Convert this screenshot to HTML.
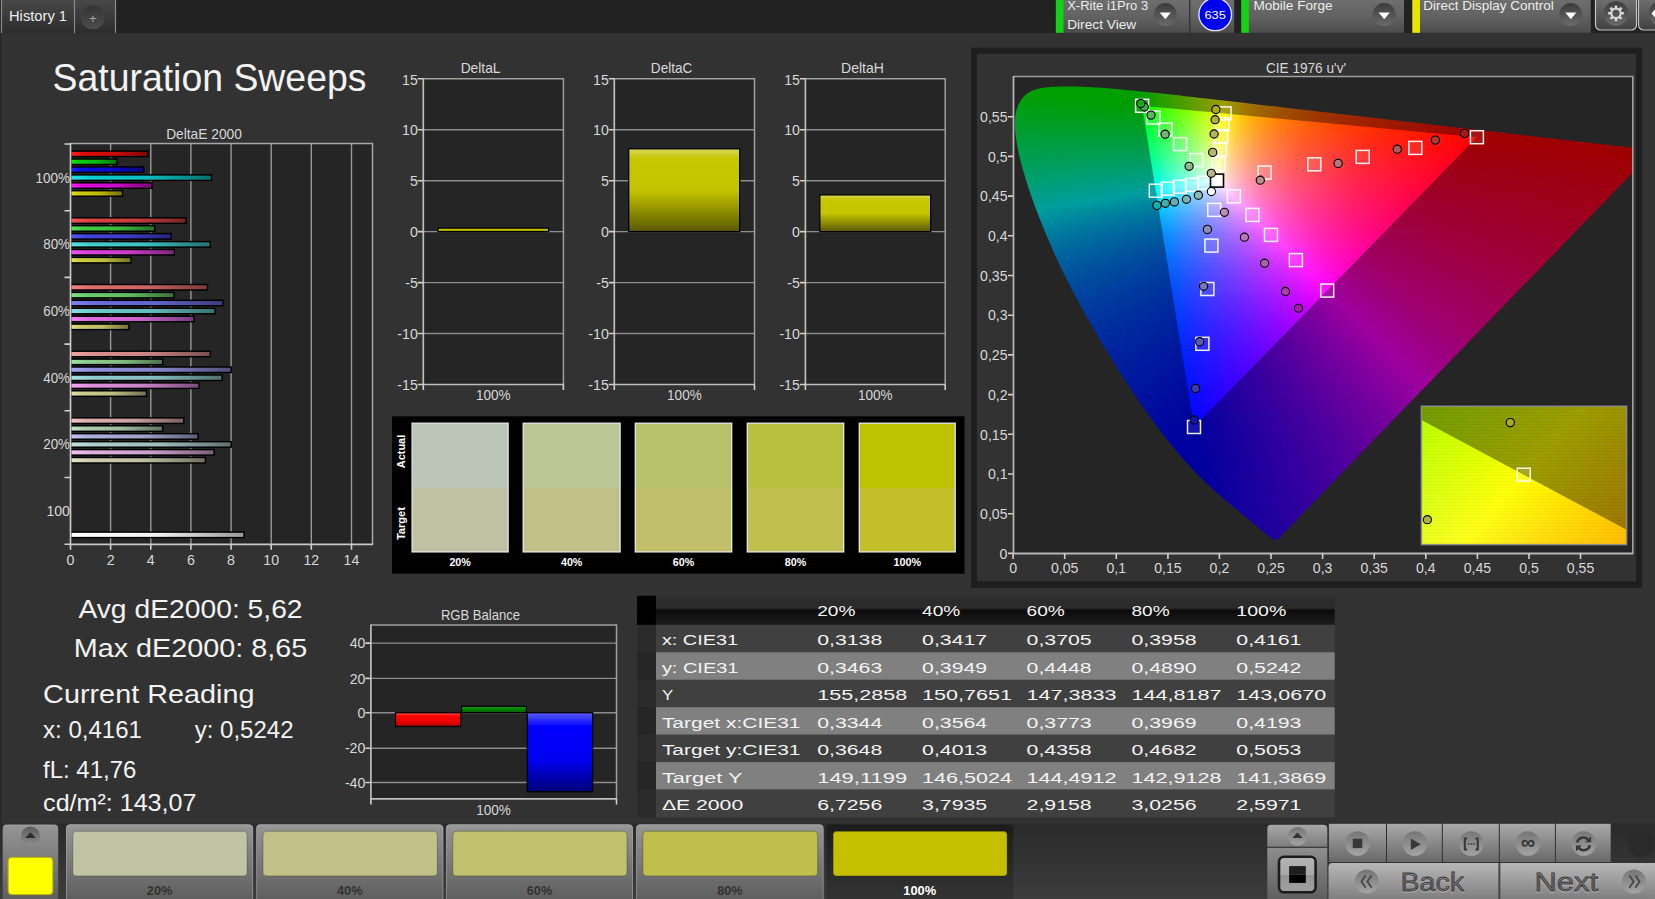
<!DOCTYPE html><html><head><meta charset="utf-8"><title>Saturation Sweeps</title><style>html,body{margin:0;padding:0;background:#323232;overflow:hidden}</style></head><body><svg width="1655" height="899" viewBox="0 0 1655 899" font-family="'Liberation Sans', sans-serif" style="display:block"><defs><linearGradient id="o0"><stop offset="0" stop-color="#009e00"/><stop offset="1" stop-color="#009e00"/></linearGradient><linearGradient id="o1"><stop offset="0" stop-color="#009e00"/><stop offset="1" stop-color="#009e00"/></linearGradient><linearGradient id="o2"><stop offset="0" stop-color="#009e00"/><stop offset=".925" stop-color="#009e00"/><stop offset="1" stop-color="#109e00"/></linearGradient><linearGradient id="o3"><stop offset="0" stop-color="#009e00"/><stop offset=".810" stop-color="#009e00"/><stop offset="1" stop-color="#309e00"/></linearGradient><linearGradient id="o4"><stop offset="0" stop-color="#009e01"/><stop offset=".722" stop-color="#009e00"/><stop offset="1" stop-color="#509e00"/></linearGradient><linearGradient id="o5"><stop offset="0" stop-color="#009e04"/><stop offset=".654" stop-color="#009e00"/><stop offset="1" stop-color="#719e00"/></linearGradient><linearGradient id="o6"><stop offset="0" stop-color="#009e07"/><stop offset=".254" stop-color="#009e00"/><stop offset=".607" stop-color="#009e00"/><stop offset="1" stop-color="#949e00"/></linearGradient><linearGradient id="o7"><stop offset="0" stop-color="#009e0a"/><stop offset=".559" stop-color="#009e00"/><stop offset=".795" stop-color="#5e9e00"/><stop offset=".936" stop-color="#9d9e00"/><stop offset="1" stop-color="#9e8400"/></linearGradient><linearGradient id="o8"><stop offset="0" stop-color="#009e0d"/><stop offset=".521" stop-color="#009e00"/><stop offset=".735" stop-color="#5c9e00"/><stop offset=".870" stop-color="#9e9e00"/><stop offset="1" stop-color="#9e6c00"/></linearGradient><linearGradient id="o9"><stop offset="0" stop-color="#009e0f"/><stop offset=".490" stop-color="#009e00"/><stop offset=".693" stop-color="#609e00"/><stop offset=".809" stop-color="#9e9e00"/><stop offset=".895" stop-color="#9e7700"/><stop offset="1" stop-color="#9e5800"/></linearGradient><linearGradient id="o10"><stop offset="0" stop-color="#009e12"/><stop offset=".460" stop-color="#009e03"/><stop offset=".646" stop-color="#5e9e00"/><stop offset=".759" stop-color="#9e9e00"/><stop offset=".861" stop-color="#9e6e00"/><stop offset="1" stop-color="#9e4900"/></linearGradient><linearGradient id="o11"><stop offset="0" stop-color="#009e14"/><stop offset=".435" stop-color="#009e07"/><stop offset=".606" stop-color="#5c9e00"/><stop offset=".712" stop-color="#9d9e00"/><stop offset=".774" stop-color="#9e7e00"/><stop offset=".836" stop-color="#9e6500"/><stop offset="1" stop-color="#9e3d00"/></linearGradient><linearGradient id="o12"><stop offset="0" stop-color="#009e17"/><stop offset=".413" stop-color="#009e0a"/><stop offset=".671" stop-color="#9d9e00"/><stop offset=".735" stop-color="#9e7a00"/><stop offset=".806" stop-color="#9e5e00"/><stop offset="1" stop-color="#9e3300"/></linearGradient><linearGradient id="o13"><stop offset="0" stop-color="#009e19"/><stop offset=".393" stop-color="#009e0e"/><stop offset=".546" stop-color="#5e9e06"/><stop offset=".637" stop-color="#9d9e00"/><stop offset=".701" stop-color="#9e7800"/><stop offset=".780" stop-color="#9e5900"/><stop offset=".878" stop-color="#9e4000"/><stop offset="1" stop-color="#9e2b00"/></linearGradient><linearGradient id="o14"><stop offset="0" stop-color="#009e1b"/><stop offset=".374" stop-color="#009e11"/><stop offset=".516" stop-color="#5c9e0a"/><stop offset=".606" stop-color="#9e9e05"/><stop offset=".672" stop-color="#9e7500"/><stop offset=".757" stop-color="#9e5400"/><stop offset=".864" stop-color="#9e3900"/><stop offset="1" stop-color="#9e2300"/></linearGradient><linearGradient id="o15"><stop offset="0" stop-color="#009e1e"/><stop offset=".358" stop-color="#009e14"/><stop offset=".576" stop-color="#9e9e09"/><stop offset=".645" stop-color="#9e7103"/><stop offset=".733" stop-color="#9e4f00"/><stop offset=".848" stop-color="#9e3300"/><stop offset="1" stop-color="#9e1d00"/></linearGradient><linearGradient id="o16"><stop offset="0" stop-color="#009e20"/><stop offset=".342" stop-color="#009e18"/><stop offset=".471" stop-color="#5e9e12"/><stop offset=".547" stop-color="#9c9e0e"/><stop offset=".621" stop-color="#9e6e06"/><stop offset=".713" stop-color="#9e4a00"/><stop offset=".837" stop-color="#9e2e00"/><stop offset="1" stop-color="#9e1700"/></linearGradient><linearGradient id="o17"><stop offset="0" stop-color="#009e23"/><stop offset=".327" stop-color="#009e1b"/><stop offset=".526" stop-color="#9e9d12"/><stop offset=".599" stop-color="#9e6b09"/><stop offset=".695" stop-color="#9e4602"/><stop offset=".826" stop-color="#9e2900"/><stop offset="1" stop-color="#9e1200"/></linearGradient><linearGradient id="o18"><stop offset="0" stop-color="#009e25"/><stop offset=".316" stop-color="#009e1e"/><stop offset=".505" stop-color="#9e9d17"/><stop offset=".577" stop-color="#9e690d"/><stop offset=".679" stop-color="#9e4204"/><stop offset=".814" stop-color="#9e2500"/><stop offset="1" stop-color="#9e0e00"/></linearGradient><linearGradient id="o19"><stop offset="0" stop-color="#009e27"/><stop offset=".303" stop-color="#009e22"/><stop offset=".484" stop-color="#9e9c1b"/><stop offset=".519" stop-color="#9e7f15"/><stop offset=".558" stop-color="#9e660f"/><stop offset=".660" stop-color="#9e3f06"/><stop offset=".801" stop-color="#9e2100"/><stop offset="1" stop-color="#9e0900"/></linearGradient><linearGradient id="o20"><stop offset="0" stop-color="#009e2a"/><stop offset=".292" stop-color="#009e25"/><stop offset=".399" stop-color="#5e9e22"/><stop offset=".463" stop-color="#9e9e20"/><stop offset=".497" stop-color="#9e8019"/><stop offset=".537" stop-color="#9e6612"/><stop offset=".641" stop-color="#9e3d08"/><stop offset=".788" stop-color="#9e1e00"/><stop offset="1" stop-color="#9e0500"/></linearGradient><linearGradient id="o21"><stop offset="0" stop-color="#009e2c"/><stop offset=".283" stop-color="#009e28"/><stop offset=".445" stop-color="#9e9e24"/><stop offset=".480" stop-color="#9e7e1c"/><stop offset=".520" stop-color="#9e6315"/><stop offset=".625" stop-color="#9e3a0a"/><stop offset=".775" stop-color="#9e1b01"/><stop offset="1" stop-color="#9e0100"/></linearGradient><linearGradient id="o22"><stop offset="0" stop-color="#009e2f"/><stop offset=".273" stop-color="#009e2c"/><stop offset=".430" stop-color="#9e9d28"/><stop offset=".465" stop-color="#9e7c1f"/><stop offset=".506" stop-color="#9e6017"/><stop offset=".616" stop-color="#9e360b"/><stop offset=".781" stop-color="#9e1502"/><stop offset="1" stop-color="#9e0000"/></linearGradient><linearGradient id="o23"><stop offset="0" stop-color="#009e31"/><stop offset=".263" stop-color="#009e2f"/><stop offset=".415" stop-color="#9e9d2d"/><stop offset=".451" stop-color="#9e7922"/><stop offset=".493" stop-color="#9e5d1a"/><stop offset=".607" stop-color="#9e320c"/><stop offset=".798" stop-color="#9e0f02"/><stop offset=".932" stop-color="#9e0000"/><stop offset="1" stop-color="#9e0000"/></linearGradient><linearGradient id="o24"><stop offset="0" stop-color="#009e34"/><stop offset=".256" stop-color="#019e32"/><stop offset=".401" stop-color="#9e9c31"/><stop offset=".435" stop-color="#9e7925"/><stop offset=".478" stop-color="#9e5c1c"/><stop offset=".530" stop-color="#9e4414"/><stop offset=".595" stop-color="#9e2f0e"/><stop offset=".694" stop-color="#9e1a07"/><stop offset=".823" stop-color="#9e0801"/><stop offset=".896" stop-color="#9e0000"/><stop offset="1" stop-color="#9e0000"/></linearGradient><linearGradient id="o25"><stop offset="0" stop-color="#009e36"/><stop offset=".248" stop-color="#009e36"/><stop offset=".336" stop-color="#609e36"/><stop offset=".386" stop-color="#9e9e36"/><stop offset=".422" stop-color="#9e7829"/><stop offset=".465" stop-color="#9e5a1f"/><stop offset=".519" stop-color="#9e4116"/><stop offset=".586" stop-color="#9e2c0f"/><stop offset=".698" stop-color="#9e1507"/><stop offset=".864" stop-color="#9e0000"/><stop offset="1" stop-color="#9e0000"/></linearGradient><linearGradient id="o26"><stop offset="0" stop-color="#009e38"/><stop offset=".239" stop-color="#009e39"/><stop offset=".321" stop-color="#5c9e3a"/><stop offset=".373" stop-color="#9e9e3a"/><stop offset=".409" stop-color="#9e762c"/><stop offset=".453" stop-color="#9e5821"/><stop offset=".507" stop-color="#9e3e18"/><stop offset=".576" stop-color="#9e2910"/><stop offset=".681" stop-color="#9e1408"/><stop offset=".833" stop-color="#9e0002"/><stop offset="1" stop-color="#9e0000"/></linearGradient><linearGradient id="o27"><stop offset="0" stop-color="#009e3b"/><stop offset=".233" stop-color="#019e3d"/><stop offset=".361" stop-color="#9e9d3e"/><stop offset=".396" stop-color="#9e762f"/><stop offset=".442" stop-color="#9e5523"/><stop offset=".498" stop-color="#9e3b19"/><stop offset=".568" stop-color="#9e2611"/><stop offset=".804" stop-color="#9e0003"/><stop offset="1" stop-color="#9e0000"/></linearGradient><linearGradient id="o28"><stop offset="0" stop-color="#009e3d"/><stop offset=".227" stop-color="#009e40"/><stop offset=".351" stop-color="#9e9d43"/><stop offset=".387" stop-color="#9e7432"/><stop offset=".431" stop-color="#9e5425"/><stop offset=".489" stop-color="#9e391a"/><stop offset=".560" stop-color="#9e2312"/><stop offset=".777" stop-color="#9e0004"/><stop offset="1" stop-color="#9e0000"/></linearGradient><linearGradient id="o29"><stop offset="0" stop-color="#009e40"/><stop offset=".220" stop-color="#009e44"/><stop offset=".341" stop-color="#9e9c47"/><stop offset=".376" stop-color="#9e7335"/><stop offset=".422" stop-color="#9e5127"/><stop offset=".480" stop-color="#9e361c"/><stop offset=".553" stop-color="#9e2113"/><stop offset=".752" stop-color="#9e0006"/><stop offset="1" stop-color="#9e0000"/></linearGradient><linearGradient id="o30"><stop offset="0" stop-color="#009e42"/><stop offset=".214" stop-color="#009e47"/><stop offset=".333" stop-color="#9e9c4b"/><stop offset=".368" stop-color="#9e7138"/><stop offset=".414" stop-color="#9e5029"/><stop offset=".472" stop-color="#9e351d"/><stop offset=".547" stop-color="#9e1f14"/><stop offset=".733" stop-color="#9e0007"/><stop offset="1" stop-color="#9e0000"/></linearGradient><linearGradient id="o31"><stop offset="0" stop-color="#009e45"/><stop offset=".216" stop-color="#009e4b"/><stop offset=".331" stop-color="#9e9e50"/><stop offset=".365" stop-color="#9e743d"/><stop offset=".411" stop-color="#9e512d"/><stop offset=".469" stop-color="#9e3520"/><stop offset=".544" stop-color="#9e1f16"/><stop offset=".730" stop-color="#9e0008"/><stop offset="1" stop-color="#9e0000"/></linearGradient><linearGradient id="o32"><stop offset="0" stop-color="#009e47"/><stop offset=".215" stop-color="#009e4e"/><stop offset=".330" stop-color="#9e9d55"/><stop offset=".364" stop-color="#9e7340"/><stop offset=".410" stop-color="#9e502f"/><stop offset=".468" stop-color="#9e3522"/><stop offset=".543" stop-color="#9e1f17"/><stop offset=".726" stop-color="#9e000a"/><stop offset="1" stop-color="#9e0000"/></linearGradient><linearGradient id="o33"><stop offset="0" stop-color="#009e4a"/><stop offset=".215" stop-color="#009e52"/><stop offset=".283" stop-color="#599e56"/><stop offset=".330" stop-color="#9e9d59"/><stop offset=".364" stop-color="#9e7343"/><stop offset=".410" stop-color="#9e5032"/><stop offset=".468" stop-color="#9e3424"/><stop offset=".543" stop-color="#9e1f19"/><stop offset=".723" stop-color="#9e000b"/><stop offset="1" stop-color="#9e0001"/></linearGradient><linearGradient id="o34"><stop offset="0" stop-color="#009e4c"/><stop offset=".216" stop-color="#009e56"/><stop offset=".330" stop-color="#9e9c5e"/><stop offset=".364" stop-color="#9e7247"/><stop offset=".410" stop-color="#9e4f34"/><stop offset=".468" stop-color="#9e3426"/><stop offset=".543" stop-color="#9e1e1b"/><stop offset=".720" stop-color="#9e000c"/><stop offset="1" stop-color="#9e0002"/></linearGradient><linearGradient id="o35"><stop offset="0" stop-color="#009e4f"/><stop offset=".215" stop-color="#009e59"/><stop offset=".329" stop-color="#9e9c62"/><stop offset=".363" stop-color="#9e714a"/><stop offset=".409" stop-color="#9e4f37"/><stop offset=".467" stop-color="#9e3428"/><stop offset=".544" stop-color="#9e1d1c"/><stop offset=".716" stop-color="#9e000e"/><stop offset="1" stop-color="#9e0003"/></linearGradient><linearGradient id="o36"><stop offset="0" stop-color="#009e52"/><stop offset=".215" stop-color="#009e5d"/><stop offset=".283" stop-color="#5c9e63"/><stop offset=".327" stop-color="#9e9e68"/><stop offset=".361" stop-color="#9e734f"/><stop offset=".407" stop-color="#9e4f3a"/><stop offset=".466" stop-color="#9e342b"/><stop offset=".540" stop-color="#9e1e1e"/><stop offset=".713" stop-color="#9e000f"/><stop offset="1" stop-color="#9e0003"/></linearGradient><linearGradient id="o37"><stop offset="0" stop-color="#009e54"/><stop offset=".215" stop-color="#009e61"/><stop offset=".326" stop-color="#9e9e6c"/><stop offset=".360" stop-color="#9e7252"/><stop offset=".406" stop-color="#9e4f3d"/><stop offset=".465" stop-color="#9e332d"/><stop offset=".540" stop-color="#9e1d20"/><stop offset=".709" stop-color="#9e0010"/><stop offset="1" stop-color="#9e0004"/></linearGradient><linearGradient id="o38"><stop offset="0" stop-color="#009e57"/><stop offset=".215" stop-color="#009e65"/><stop offset=".326" stop-color="#9e9d71"/><stop offset=".360" stop-color="#9e7156"/><stop offset=".406" stop-color="#9e4e40"/><stop offset=".465" stop-color="#9e332f"/><stop offset=".540" stop-color="#9e1d22"/><stop offset=".706" stop-color="#9e0012"/><stop offset="1" stop-color="#9e0005"/></linearGradient><linearGradient id="o39"><stop offset="0" stop-color="#009e59"/><stop offset=".214" stop-color="#009e68"/><stop offset=".325" stop-color="#9e9d75"/><stop offset=".359" stop-color="#9e7159"/><stop offset=".405" stop-color="#9e4e42"/><stop offset=".464" stop-color="#9e3231"/><stop offset=".539" stop-color="#9e1c23"/><stop offset=".702" stop-color="#9e0013"/><stop offset="1" stop-color="#9e0006"/></linearGradient><linearGradient id="o40"><stop offset="0" stop-color="#009e5c"/><stop offset=".216" stop-color="#009e6c"/><stop offset=".325" stop-color="#9e9c7a"/><stop offset=".359" stop-color="#9e705c"/><stop offset=".405" stop-color="#9e4d45"/><stop offset=".464" stop-color="#9e3233"/><stop offset=".539" stop-color="#9e1c25"/><stop offset=".699" stop-color="#9e0015"/><stop offset="1" stop-color="#9e0007"/></linearGradient><linearGradient id="o41"><stop offset="0" stop-color="#009e5f"/><stop offset=".214" stop-color="#009e70"/><stop offset=".281" stop-color="#5e9e79"/><stop offset=".322" stop-color="#9e9e80"/><stop offset=".357" stop-color="#9e7161"/><stop offset=".402" stop-color="#9e4e48"/><stop offset=".461" stop-color="#9e3235"/><stop offset=".537" stop-color="#9e1c27"/><stop offset=".695" stop-color="#9e0016"/><stop offset="1" stop-color="#9e0008"/></linearGradient><linearGradient id="o42"><stop offset="0" stop-color="#009e62"/><stop offset=".213" stop-color="#009e74"/><stop offset=".279" stop-color="#5b9e7e"/><stop offset=".321" stop-color="#9e9e85"/><stop offset=".356" stop-color="#9e7165"/><stop offset=".401" stop-color="#9e4d4b"/><stop offset=".460" stop-color="#9e3137"/><stop offset=".536" stop-color="#9e1b28"/><stop offset=".691" stop-color="#9e0017"/><stop offset="1" stop-color="#9e0008"/></linearGradient><linearGradient id="o43"><stop offset="0" stop-color="#009e64"/><stop offset=".215" stop-color="#009e78"/><stop offset=".321" stop-color="#9e9d8a"/><stop offset=".356" stop-color="#9e7068"/><stop offset=".401" stop-color="#9e4c4e"/><stop offset=".460" stop-color="#9e3139"/><stop offset=".536" stop-color="#9e1b2a"/><stop offset=".688" stop-color="#9e0019"/><stop offset="1" stop-color="#9e0009"/></linearGradient><linearGradient id="o44"><stop offset="0" stop-color="#009e67"/><stop offset=".213" stop-color="#009e7c"/><stop offset=".320" stop-color="#9e9d8e"/><stop offset=".355" stop-color="#9e706c"/><stop offset=".399" stop-color="#9e4d51"/><stop offset=".458" stop-color="#9e313c"/><stop offset=".535" stop-color="#9e1a2c"/><stop offset=".684" stop-color="#9e001a"/><stop offset="1" stop-color="#9e000a"/></linearGradient><linearGradient id="o45"><stop offset="0" stop-color="#009e6a"/><stop offset=".214" stop-color="#009e80"/><stop offset=".321" stop-color="#9e9c93"/><stop offset=".355" stop-color="#9e6f6f"/><stop offset=".400" stop-color="#9e4c54"/><stop offset=".459" stop-color="#9e303e"/><stop offset=".536" stop-color="#9e1a2d"/><stop offset=".683" stop-color="#9e001c"/><stop offset="1" stop-color="#9e000b"/></linearGradient><linearGradient id="o46"><stop offset="0" stop-color="#009e6d"/><stop offset=".215" stop-color="#009e85"/><stop offset=".321" stop-color="#9e9c98"/><stop offset=".355" stop-color="#9e6e73"/><stop offset=".400" stop-color="#9e4c57"/><stop offset=".460" stop-color="#9e3040"/><stop offset=".536" stop-color="#9e1a2f"/><stop offset=".681" stop-color="#9e001d"/><stop offset="1" stop-color="#9e000c"/></linearGradient><linearGradient id="o47"><stop offset="0" stop-color="#009e70"/><stop offset=".214" stop-color="#009e89"/><stop offset=".321" stop-color="#9e9b9d"/><stop offset=".355" stop-color="#9e6e76"/><stop offset=".400" stop-color="#9e4b59"/><stop offset=".460" stop-color="#9e2f42"/><stop offset=".537" stop-color="#9e1931"/><stop offset=".679" stop-color="#9e001f"/><stop offset="1" stop-color="#9e000c"/></linearGradient><linearGradient id="o48"><stop offset="0" stop-color="#009e72"/><stop offset=".215" stop-color="#009e8d"/><stop offset=".295" stop-color="#759e9e"/><stop offset=".325" stop-color="#9e959d"/><stop offset=".360" stop-color="#9e6a77"/><stop offset=".407" stop-color="#9e485a"/><stop offset=".467" stop-color="#9e2d43"/><stop offset=".543" stop-color="#9e1831"/><stop offset=".680" stop-color="#9e0020"/><stop offset="1" stop-color="#9e000d"/></linearGradient><linearGradient id="o49"><stop offset="0" stop-color="#009e75"/><stop offset=".216" stop-color="#009e91"/><stop offset=".275" stop-color="#569e9e"/><stop offset=".328" stop-color="#9e8f9d"/><stop offset=".363" stop-color="#9e6678"/><stop offset=".410" stop-color="#9e455b"/><stop offset=".471" stop-color="#9e2b44"/><stop offset=".549" stop-color="#9e1632"/><stop offset=".678" stop-color="#9e0021"/><stop offset="1" stop-color="#9e000e"/></linearGradient><linearGradient id="o50"><stop offset="0" stop-color="#009e78"/><stop offset=".217" stop-color="#009e96"/><stop offset=".255" stop-color="#389e9e"/><stop offset=".333" stop-color="#9e8a9d"/><stop offset=".370" stop-color="#9e6177"/><stop offset=".417" stop-color="#9e425b"/><stop offset=".479" stop-color="#9e2844"/><stop offset=".558" stop-color="#9e1433"/><stop offset=".677" stop-color="#9e0023"/><stop offset="1" stop-color="#9e000f"/></linearGradient><linearGradient id="o51"><stop offset="0" stop-color="#009e7b"/><stop offset=".216" stop-color="#009e9a"/><stop offset=".236" stop-color="#1e9e9e"/><stop offset=".336" stop-color="#9e859d"/><stop offset=".373" stop-color="#9e5e78"/><stop offset=".421" stop-color="#9e405c"/><stop offset=".483" stop-color="#9e2745"/><stop offset=".564" stop-color="#9e1333"/><stop offset=".676" stop-color="#9e0024"/><stop offset="1" stop-color="#9e0010"/></linearGradient><linearGradient id="o52"><stop offset="0" stop-color="#009e7e"/><stop offset=".217" stop-color="#019d9e"/><stop offset=".340" stop-color="#9e7f9d"/><stop offset=".377" stop-color="#9e5a79"/><stop offset=".426" stop-color="#9e3c5c"/><stop offset=".491" stop-color="#9e2445"/><stop offset=".572" stop-color="#9e1134"/><stop offset=".674" stop-color="#9e0026"/><stop offset="1" stop-color="#9e0011"/></linearGradient><linearGradient id="o53"><stop offset="0" stop-color="#009e81"/><stop offset=".194" stop-color="#009e9e"/><stop offset=".218" stop-color="#00999e"/><stop offset=".344" stop-color="#9e7b9d"/><stop offset=".383" stop-color="#9e5678"/><stop offset=".433" stop-color="#9e3a5c"/><stop offset=".497" stop-color="#9e2246"/><stop offset=".579" stop-color="#9e1034"/><stop offset=".673" stop-color="#9e0027"/><stop offset="1" stop-color="#9e0012"/></linearGradient><linearGradient id="o54"><stop offset="0" stop-color="#009e84"/><stop offset=".173" stop-color="#009e9e"/><stop offset=".217" stop-color="#00959e"/><stop offset=".347" stop-color="#9e769d"/><stop offset=".386" stop-color="#9e5379"/><stop offset=".438" stop-color="#9e375c"/><stop offset=".504" stop-color="#9e2046"/><stop offset=".588" stop-color="#9e0d34"/><stop offset=".670" stop-color="#9e0029"/><stop offset="1" stop-color="#9e0013"/></linearGradient><linearGradient id="o55"><stop offset="0" stop-color="#009e88"/><stop offset=".151" stop-color="#009e9e"/><stop offset=".218" stop-color="#01919e"/><stop offset=".351" stop-color="#9e729d"/><stop offset=".392" stop-color="#9e4f78"/><stop offset=".443" stop-color="#9e345c"/><stop offset=".510" stop-color="#9e1e46"/><stop offset=".596" stop-color="#9e0c35"/><stop offset=".668" stop-color="#9e002b"/><stop offset="1" stop-color="#9e0013"/></linearGradient><linearGradient id="o56"><stop offset="0" stop-color="#009e8b"/><stop offset=".130" stop-color="#009e9e"/><stop offset=".218" stop-color="#008d9e"/><stop offset=".354" stop-color="#9e6d9d"/><stop offset=".396" stop-color="#9e4c79"/><stop offset=".449" stop-color="#9e315d"/><stop offset=".518" stop-color="#9e1c46"/><stop offset=".606" stop-color="#9e0a35"/><stop offset=".667" stop-color="#9e002c"/><stop offset="1" stop-color="#9e0014"/></linearGradient><linearGradient id="o57"><stop offset="0" stop-color="#009e8e"/><stop offset=".109" stop-color="#009e9e"/><stop offset=".218" stop-color="#00899e"/><stop offset=".359" stop-color="#9e699d"/><stop offset=".400" stop-color="#9e497a"/><stop offset=".456" stop-color="#9e2f5d"/><stop offset=".527" stop-color="#9e1946"/><stop offset=".619" stop-color="#9e0834"/><stop offset=".666" stop-color="#9e002e"/><stop offset="1" stop-color="#9e0015"/></linearGradient><linearGradient id="o58"><stop offset="0" stop-color="#009e91"/><stop offset=".087" stop-color="#009e9e"/><stop offset=".220" stop-color="#01869e"/><stop offset=".362" stop-color="#9e659d"/><stop offset=".409" stop-color="#9e4377"/><stop offset=".472" stop-color="#9e2959"/><stop offset=".554" stop-color="#9e1342"/><stop offset=".662" stop-color="#9e0030"/><stop offset="1" stop-color="#9e0016"/></linearGradient><linearGradient id="o59"><stop offset="0" stop-color="#009e94"/><stop offset=".065" stop-color="#009e9e"/><stop offset=".219" stop-color="#00829e"/><stop offset=".366" stop-color="#9e619d"/><stop offset=".413" stop-color="#9e4177"/><stop offset=".476" stop-color="#9e275a"/><stop offset=".557" stop-color="#9e1243"/><stop offset=".662" stop-color="#9e0031"/><stop offset="1" stop-color="#9e0017"/></linearGradient><linearGradient id="o60"><stop offset="0" stop-color="#009e97"/><stop offset=".046" stop-color="#009e9e"/><stop offset=".220" stop-color="#007f9e"/><stop offset=".371" stop-color="#9e5e9d"/><stop offset=".418" stop-color="#9e3e78"/><stop offset=".480" stop-color="#9e265b"/><stop offset=".559" stop-color="#9e1245"/><stop offset=".661" stop-color="#9e0033"/><stop offset="1" stop-color="#9e0018"/></linearGradient><linearGradient id="o61"><stop offset="0" stop-color="#009e9b"/><stop offset=".219" stop-color="#007c9e"/><stop offset=".375" stop-color="#9e5a9d"/><stop offset=".422" stop-color="#9e3c79"/><stop offset=".482" stop-color="#9e255d"/><stop offset=".560" stop-color="#9e1146"/><stop offset=".659" stop-color="#9e0035"/><stop offset="1" stop-color="#9e0019"/></linearGradient><linearGradient id="o62"><stop offset="0" stop-color="#009e9e"/><stop offset=".220" stop-color="#00799e"/><stop offset=".378" stop-color="#9e579d"/><stop offset=".425" stop-color="#9e3b7a"/><stop offset=".485" stop-color="#9e245e"/><stop offset=".561" stop-color="#9e1148"/><stop offset=".657" stop-color="#9e0037"/><stop offset="1" stop-color="#9e001a"/></linearGradient><linearGradient id="o63"><stop offset="0" stop-color="#009a9e"/><stop offset=".220" stop-color="#00769e"/><stop offset=".382" stop-color="#9e539d"/><stop offset=".429" stop-color="#9e387b"/><stop offset=".487" stop-color="#9e225f"/><stop offset=".562" stop-color="#9e1049"/><stop offset=".655" stop-color="#9e0038"/><stop offset="1" stop-color="#9e001b"/></linearGradient><linearGradient id="o64"><stop offset="0" stop-color="#00979e"/><stop offset=".220" stop-color="#00739e"/><stop offset=".387" stop-color="#9e509d"/><stop offset=".434" stop-color="#9e367b"/><stop offset=".491" stop-color="#9e2161"/><stop offset=".563" stop-color="#9e104c"/><stop offset=".654" stop-color="#9e003a"/><stop offset=".803" stop-color="#9e0029"/><stop offset="1" stop-color="#9e001c"/></linearGradient><linearGradient id="o65"><stop offset="0" stop-color="#00949e"/><stop offset=".222" stop-color="#00709e"/><stop offset=".391" stop-color="#9e4d9d"/><stop offset=".427" stop-color="#9e3982"/><stop offset=".472" stop-color="#9e276b"/><stop offset=".589" stop-color="#9e0b47"/><stop offset=".652" stop-color="#9e003c"/><stop offset=".802" stop-color="#9e002a"/><stop offset="1" stop-color="#9e001d"/></linearGradient><linearGradient id="o66"><stop offset="0" stop-color="#00919e"/><stop offset=".221" stop-color="#006d9e"/><stop offset=".395" stop-color="#9e4a9d"/><stop offset=".431" stop-color="#9e3683"/><stop offset=".476" stop-color="#9e256b"/><stop offset=".592" stop-color="#9e0a49"/><stop offset=".650" stop-color="#9e003e"/><stop offset=".801" stop-color="#9e002c"/><stop offset="1" stop-color="#9e001e"/></linearGradient><linearGradient id="o67"><stop offset="0" stop-color="#008e9e"/><stop offset=".220" stop-color="#006b9e"/><stop offset=".399" stop-color="#9e479d"/><stop offset=".435" stop-color="#9e3483"/><stop offset=".481" stop-color="#9e236c"/><stop offset=".597" stop-color="#9e0949"/><stop offset=".650" stop-color="#9e0040"/><stop offset=".800" stop-color="#9e002d"/><stop offset="1" stop-color="#9e001f"/></linearGradient><linearGradient id="o68"><stop offset="0" stop-color="#008b9e"/><stop offset=".222" stop-color="#00689e"/><stop offset=".403" stop-color="#9e449d"/><stop offset=".440" stop-color="#9e3283"/><stop offset=".485" stop-color="#9e226d"/><stop offset=".601" stop-color="#9e084a"/><stop offset=".647" stop-color="#9e0042"/><stop offset=".766" stop-color="#9e0032"/><stop offset="1" stop-color="#9e0020"/></linearGradient><linearGradient id="o69"><stop offset="0" stop-color="#00899e"/><stop offset=".222" stop-color="#00669e"/><stop offset=".408" stop-color="#9e419d"/><stop offset=".447" stop-color="#9e2f83"/><stop offset=".491" stop-color="#9e206d"/><stop offset=".607" stop-color="#9e074b"/><stop offset=".647" stop-color="#9e0043"/><stop offset=".770" stop-color="#9e0033"/><stop offset="1" stop-color="#9e0021"/></linearGradient><linearGradient id="o70"><stop offset="0" stop-color="#00869e"/><stop offset=".221" stop-color="#00639e"/><stop offset=".411" stop-color="#9e3e9d"/><stop offset=".493" stop-color="#9e1f6e"/><stop offset=".609" stop-color="#9e064c"/><stop offset=".644" stop-color="#9e0045"/><stop offset=".771" stop-color="#9e0034"/><stop offset="1" stop-color="#9e0021"/></linearGradient><linearGradient id="o71"><stop offset="0" stop-color="#00839e"/><stop offset=".223" stop-color="#00619e"/><stop offset=".416" stop-color="#9e3c9d"/><stop offset=".497" stop-color="#9e1d6f"/><stop offset=".614" stop-color="#9e054d"/><stop offset=".776" stop-color="#9e0034"/><stop offset="1" stop-color="#9e0022"/></linearGradient><linearGradient id="o72"><stop offset="0" stop-color="#00809e"/><stop offset=".222" stop-color="#005f9e"/><stop offset=".420" stop-color="#9e399d"/><stop offset=".502" stop-color="#9e1c70"/><stop offset=".618" stop-color="#9e044e"/><stop offset=".778" stop-color="#9e0035"/><stop offset="1" stop-color="#9e0023"/></linearGradient><linearGradient id="o73"><stop offset="0" stop-color="#007e9e"/><stop offset=".221" stop-color="#005d9e"/><stop offset=".424" stop-color="#9e379d"/><stop offset=".507" stop-color="#9e1a70"/><stop offset=".621" stop-color="#9e034f"/><stop offset=".780" stop-color="#9e0037"/><stop offset="1" stop-color="#9e0024"/></linearGradient><linearGradient id="o74"><stop offset="0" stop-color="#007b9e"/><stop offset=".223" stop-color="#005a9e"/><stop offset=".428" stop-color="#9e349d"/><stop offset=".511" stop-color="#9e1871"/><stop offset=".626" stop-color="#9e0250"/><stop offset=".785" stop-color="#9e0037"/><stop offset="1" stop-color="#9e0025"/></linearGradient><linearGradient id="o75"><stop offset="0" stop-color="#00799e"/><stop offset=".223" stop-color="#00589e"/><stop offset=".434" stop-color="#9e329d"/><stop offset=".517" stop-color="#9e1771"/><stop offset=".631" stop-color="#9e0151"/><stop offset=".786" stop-color="#9e0039"/><stop offset="1" stop-color="#9e0026"/></linearGradient><linearGradient id="o76"><stop offset="0" stop-color="#00779e"/><stop offset=".223" stop-color="#00569e"/><stop offset=".438" stop-color="#9e309d"/><stop offset=".522" stop-color="#9e1572"/><stop offset=".634" stop-color="#9e0052"/><stop offset=".789" stop-color="#9e003a"/><stop offset="1" stop-color="#9e0028"/></linearGradient><linearGradient id="o77"><stop offset="0" stop-color="#00749e"/><stop offset=".224" stop-color="#00549e"/><stop offset=".443" stop-color="#9e2d9d"/><stop offset=".525" stop-color="#9e1473"/><stop offset=".638" stop-color="#9e0053"/><stop offset=".791" stop-color="#9e003b"/><stop offset="1" stop-color="#9e0029"/></linearGradient><linearGradient id="o78"><stop offset="0" stop-color="#00729e"/><stop offset=".224" stop-color="#00539e"/><stop offset=".447" stop-color="#9e2b9d"/><stop offset=".530" stop-color="#9e1373"/><stop offset=".644" stop-color="#9e0053"/><stop offset=".796" stop-color="#9e003c"/><stop offset="1" stop-color="#9e002a"/></linearGradient><linearGradient id="o79"><stop offset="0" stop-color="#00709e"/><stop offset=".223" stop-color="#00519e"/><stop offset=".452" stop-color="#9e299d"/><stop offset=".535" stop-color="#9e1174"/><stop offset=".647" stop-color="#9e0054"/><stop offset=".798" stop-color="#9e003d"/><stop offset="1" stop-color="#9e002b"/></linearGradient><linearGradient id="o80"><stop offset="0" stop-color="#006e9e"/><stop offset=".224" stop-color="#004f9e"/><stop offset=".456" stop-color="#9e279e"/><stop offset=".540" stop-color="#9e1074"/><stop offset=".651" stop-color="#9e0055"/><stop offset=".801" stop-color="#9e003e"/><stop offset="1" stop-color="#9e002c"/></linearGradient><linearGradient id="o81"><stop offset="0" stop-color="#006c9e"/><stop offset=".224" stop-color="#004d9e"/><stop offset=".461" stop-color="#9e259e"/><stop offset=".543" stop-color="#9e0f75"/><stop offset=".622" stop-color="#9e005e"/><stop offset=".655" stop-color="#9e0056"/><stop offset=".804" stop-color="#9e003f"/><stop offset="1" stop-color="#9e002d"/></linearGradient><linearGradient id="o82"><stop offset="0" stop-color="#006a9e"/><stop offset=".224" stop-color="#004b9e"/><stop offset=".467" stop-color="#9e239e"/><stop offset=".549" stop-color="#9e0d76"/><stop offset=".620" stop-color="#9e0060"/><stop offset=".659" stop-color="#9e0057"/><stop offset=".807" stop-color="#9e0040"/><stop offset="1" stop-color="#9e002e"/></linearGradient><linearGradient id="o83"><stop offset="0" stop-color="#00689e"/><stop offset=".226" stop-color="#004a9e"/><stop offset=".471" stop-color="#9e219e"/><stop offset=".554" stop-color="#9e0c76"/><stop offset=".618" stop-color="#9e0063"/><stop offset=".665" stop-color="#9e0058"/><stop offset=".810" stop-color="#9e0041"/><stop offset="1" stop-color="#9e002f"/></linearGradient><linearGradient id="o84"><stop offset="0" stop-color="#00669e"/><stop offset=".225" stop-color="#00489e"/><stop offset=".476" stop-color="#9e1f9e"/><stop offset=".560" stop-color="#9e0b77"/><stop offset=".616" stop-color="#9e0066"/><stop offset=".669" stop-color="#9e0059"/><stop offset=".813" stop-color="#9e0042"/><stop offset="1" stop-color="#9e0030"/></linearGradient><linearGradient id="o85"><stop offset="0" stop-color="#00649e"/><stop offset=".224" stop-color="#00479e"/><stop offset=".480" stop-color="#9e1d9e"/><stop offset=".540" stop-color="#9e0e80"/><stop offset=".612" stop-color="#9e0068"/><stop offset=".672" stop-color="#9e005a"/><stop offset=".814" stop-color="#9e0043"/><stop offset="1" stop-color="#9e0031"/></linearGradient><linearGradient id="o86"><stop offset="0" stop-color="#00629e"/><stop offset=".225" stop-color="#00459e"/><stop offset=".485" stop-color="#9e1b9e"/><stop offset=".541" stop-color="#9e0d82"/><stop offset=".610" stop-color="#9e006b"/><stop offset=".676" stop-color="#9e005b"/><stop offset=".817" stop-color="#9e0044"/><stop offset="1" stop-color="#9e0032"/></linearGradient><linearGradient id="o87"><stop offset="0" stop-color="#00609e"/><stop offset=".225" stop-color="#00439e"/><stop offset=".490" stop-color="#9e199e"/><stop offset=".543" stop-color="#9e0d84"/><stop offset=".607" stop-color="#9e006e"/><stop offset=".680" stop-color="#9e005c"/><stop offset=".820" stop-color="#9e0045"/><stop offset="1" stop-color="#9e0033"/></linearGradient><linearGradient id="o88"><stop offset="0" stop-color="#005e9e"/><stop offset=".224" stop-color="#00429e"/><stop offset=".495" stop-color="#9e179e"/><stop offset=".605" stop-color="#9e0070"/><stop offset=".684" stop-color="#9e005d"/><stop offset=".823" stop-color="#9e0046"/><stop offset="1" stop-color="#9e0034"/></linearGradient><linearGradient id="o89"><stop offset="0" stop-color="#005c9e"/><stop offset=".225" stop-color="#00409e"/><stop offset=".500" stop-color="#9e169e"/><stop offset=".602" stop-color="#9e0073"/><stop offset=".689" stop-color="#9e005e"/><stop offset=".826" stop-color="#9e0047"/><stop offset="1" stop-color="#9e0036"/></linearGradient><linearGradient id="o90"><stop offset="0" stop-color="#005b9e"/><stop offset=".225" stop-color="#003f9e"/><stop offset=".505" stop-color="#9e149e"/><stop offset=".600" stop-color="#9e0076"/><stop offset=".693" stop-color="#9e005e"/><stop offset=".829" stop-color="#9e0048"/><stop offset="1" stop-color="#9e0037"/></linearGradient><linearGradient id="o91"><stop offset="0" stop-color="#00599e"/><stop offset=".224" stop-color="#003e9e"/><stop offset=".510" stop-color="#9e129e"/><stop offset=".598" stop-color="#9e0079"/><stop offset=".697" stop-color="#9e005f"/><stop offset=".830" stop-color="#9e004a"/><stop offset="1" stop-color="#9e0038"/></linearGradient><linearGradient id="o92"><stop offset="0" stop-color="#00579e"/><stop offset=".225" stop-color="#003c9e"/><stop offset=".516" stop-color="#9e109e"/><stop offset=".595" stop-color="#9e007c"/><stop offset=".701" stop-color="#9e0060"/><stop offset=".833" stop-color="#9e004b"/><stop offset="1" stop-color="#9e0039"/></linearGradient><linearGradient id="o93"><stop offset="0" stop-color="#00569e"/><stop offset=".225" stop-color="#003b9e"/><stop offset=".521" stop-color="#9e0f9e"/><stop offset=".595" stop-color="#9e007f"/><stop offset=".706" stop-color="#9e0061"/><stop offset=".836" stop-color="#9e004c"/><stop offset="1" stop-color="#9e003a"/></linearGradient><linearGradient id="o94"><stop offset="0" stop-color="#00549e"/><stop offset=".224" stop-color="#003a9e"/><stop offset=".526" stop-color="#9e0d9e"/><stop offset=".592" stop-color="#9e0082"/><stop offset=".710" stop-color="#9e0062"/><stop offset=".839" stop-color="#9e004d"/><stop offset="1" stop-color="#9e003b"/></linearGradient><linearGradient id="o95"><stop offset="0" stop-color="#00529e"/><stop offset=".226" stop-color="#01389e"/><stop offset=".532" stop-color="#9e0b9e"/><stop offset=".589" stop-color="#9e0085"/><stop offset=".715" stop-color="#9e0063"/><stop offset=".843" stop-color="#9e004e"/><stop offset="1" stop-color="#9e003d"/></linearGradient><linearGradient id="o96"><stop offset="0" stop-color="#00519e"/><stop offset=".225" stop-color="#00379e"/><stop offset=".537" stop-color="#9e0a9e"/><stop offset=".587" stop-color="#9e0089"/><stop offset=".719" stop-color="#9e0064"/><stop offset="1" stop-color="#9e003e"/></linearGradient><linearGradient id="o97"><stop offset="0" stop-color="#004f9e"/><stop offset=".224" stop-color="#00369e"/><stop offset=".543" stop-color="#9e089e"/><stop offset=".584" stop-color="#9e008c"/><stop offset=".724" stop-color="#9e0065"/><stop offset="1" stop-color="#9e003f"/></linearGradient><linearGradient id="o98"><stop offset="0" stop-color="#004e9e"/><stop offset=".226" stop-color="#01359e"/><stop offset=".549" stop-color="#9e079e"/><stop offset=".629" stop-color="#9e007f"/><stop offset=".727" stop-color="#9e0066"/><stop offset="1" stop-color="#9e0040"/></linearGradient><linearGradient id="o99"><stop offset="0" stop-color="#004c9e"/><stop offset=".225" stop-color="#00349e"/><stop offset=".555" stop-color="#9e059e"/><stop offset=".633" stop-color="#9e0080"/><stop offset=".731" stop-color="#9e0067"/><stop offset="1" stop-color="#9e0042"/></linearGradient><linearGradient id="o100"><stop offset="0" stop-color="#004b9e"/><stop offset=".224" stop-color="#00329e"/><stop offset=".560" stop-color="#9e039e"/><stop offset=".640" stop-color="#9e0080"/><stop offset=".736" stop-color="#9e0068"/><stop offset="1" stop-color="#9e0043"/></linearGradient><linearGradient id="o101"><stop offset="0" stop-color="#00499e"/><stop offset=".225" stop-color="#01319e"/><stop offset=".565" stop-color="#9e019e"/><stop offset=".645" stop-color="#9e0080"/><stop offset=".740" stop-color="#9e0069"/><stop offset="1" stop-color="#9e0044"/></linearGradient><linearGradient id="o102"><stop offset="0" stop-color="#00489e"/><stop offset=".224" stop-color="#00309e"/><stop offset=".571" stop-color="#9e009e"/><stop offset=".649" stop-color="#9e0081"/><stop offset=".744" stop-color="#9e006a"/><stop offset="1" stop-color="#9e0045"/></linearGradient><linearGradient id="o103"><stop offset="0" stop-color="#00479e"/><stop offset=".224" stop-color="#002f9e"/><stop offset=".577" stop-color="#9e009e"/><stop offset=".655" stop-color="#9e0082"/><stop offset=".749" stop-color="#9e006a"/><stop offset="1" stop-color="#9e0047"/></linearGradient><linearGradient id="o104"><stop offset="0" stop-color="#00459e"/><stop offset=".223" stop-color="#002e9e"/><stop offset=".583" stop-color="#9e009e"/><stop offset=".660" stop-color="#9e0083"/><stop offset=".755" stop-color="#9e006b"/><stop offset="1" stop-color="#9e0048"/></linearGradient><linearGradient id="o105"><stop offset="0" stop-color="#00449e"/><stop offset=".224" stop-color="#002d9e"/><stop offset=".590" stop-color="#9e009e"/><stop offset=".667" stop-color="#9e0083"/><stop offset=".757" stop-color="#9e006c"/><stop offset="1" stop-color="#9e0049"/></linearGradient><linearGradient id="o106"><stop offset="0" stop-color="#00439e"/><stop offset=".224" stop-color="#002c9e"/><stop offset=".557" stop-color="#8e009e"/><stop offset=".596" stop-color="#9e009e"/><stop offset=".671" stop-color="#9e0084"/><stop offset=".763" stop-color="#9e006d"/><stop offset="1" stop-color="#9e004b"/></linearGradient><linearGradient id="o107"><stop offset="0" stop-color="#00419e"/><stop offset=".223" stop-color="#002b9e"/><stop offset=".554" stop-color="#8b009e"/><stop offset=".602" stop-color="#9e009e"/><stop offset=".678" stop-color="#9e0084"/><stop offset=".768" stop-color="#9e006e"/><stop offset="1" stop-color="#9e004c"/></linearGradient><linearGradient id="o108"><stop offset="0" stop-color="#00409e"/><stop offset=".225" stop-color="#002a9e"/><stop offset=".551" stop-color="#87009e"/><stop offset=".609" stop-color="#9e009e"/><stop offset=".771" stop-color="#9e006f"/><stop offset="1" stop-color="#9e004e"/></linearGradient><linearGradient id="o109"><stop offset="0" stop-color="#003f9e"/><stop offset=".224" stop-color="#00299e"/><stop offset=".548" stop-color="#84009e"/><stop offset=".615" stop-color="#9e009e"/><stop offset=".776" stop-color="#9e0070"/><stop offset="1" stop-color="#9e004f"/></linearGradient><linearGradient id="o110"><stop offset="0" stop-color="#003e9e"/><stop offset=".223" stop-color="#00289e"/><stop offset=".545" stop-color="#81009e"/><stop offset=".622" stop-color="#9e009e"/><stop offset=".782" stop-color="#9e0071"/><stop offset="1" stop-color="#9e0050"/></linearGradient><linearGradient id="o111"><stop offset="0" stop-color="#003d9e"/><stop offset=".225" stop-color="#00279e"/><stop offset=".541" stop-color="#7d009e"/><stop offset=".629" stop-color="#9e009e"/><stop offset=".785" stop-color="#9e0072"/><stop offset="1" stop-color="#9e0052"/></linearGradient><linearGradient id="o112"><stop offset="0" stop-color="#003b9e"/><stop offset=".222" stop-color="#00269e"/><stop offset=".537" stop-color="#7a009e"/><stop offset=".635" stop-color="#9e009e"/><stop offset=".790" stop-color="#9e0073"/><stop offset="1" stop-color="#9e0053"/></linearGradient><linearGradient id="o113"><stop offset="0" stop-color="#003a9e"/><stop offset=".221" stop-color="#00259e"/><stop offset=".534" stop-color="#77009e"/><stop offset=".642" stop-color="#9e009e"/><stop offset=".796" stop-color="#9e0074"/><stop offset="1" stop-color="#9e0055"/></linearGradient><linearGradient id="o114"><stop offset="0" stop-color="#00399e"/><stop offset=".223" stop-color="#00249e"/><stop offset=".530" stop-color="#74009e"/><stop offset=".649" stop-color="#9e009e"/><stop offset=".799" stop-color="#9e0075"/><stop offset="1" stop-color="#9e0056"/></linearGradient><linearGradient id="o115"><stop offset="0" stop-color="#00389e"/><stop offset=".222" stop-color="#00239e"/><stop offset=".529" stop-color="#72009e"/><stop offset=".656" stop-color="#9e009e"/><stop offset=".805" stop-color="#9e0076"/><stop offset="1" stop-color="#9e0058"/></linearGradient><linearGradient id="o116"><stop offset="0" stop-color="#00379e"/><stop offset=".221" stop-color="#00239e"/><stop offset=".526" stop-color="#6f009e"/><stop offset=".663" stop-color="#9e009e"/><stop offset=".808" stop-color="#9e0077"/><stop offset="1" stop-color="#9e0059"/></linearGradient><linearGradient id="o117"><stop offset="0" stop-color="#00369e"/><stop offset=".222" stop-color="#00229e"/><stop offset=".521" stop-color="#6c009e"/><stop offset=".669" stop-color="#9e009e"/><stop offset=".812" stop-color="#9e0078"/><stop offset="1" stop-color="#9e005b"/></linearGradient><linearGradient id="o118"><stop offset="0" stop-color="#00349e"/><stop offset=".221" stop-color="#00219e"/><stop offset=".517" stop-color="#69009e"/><stop offset=".677" stop-color="#9e009e"/><stop offset=".818" stop-color="#9e0079"/><stop offset="1" stop-color="#9e005c"/></linearGradient><linearGradient id="o119"><stop offset="0" stop-color="#00339e"/><stop offset=".221" stop-color="#00209e"/><stop offset=".514" stop-color="#66009e"/><stop offset=".684" stop-color="#9e009e"/><stop offset=".822" stop-color="#9e007a"/><stop offset="1" stop-color="#9e005e"/></linearGradient><linearGradient id="o120"><stop offset="0" stop-color="#00329e"/><stop offset=".220" stop-color="#001f9e"/><stop offset=".509" stop-color="#63009e"/><stop offset=".691" stop-color="#9e009e"/><stop offset=".828" stop-color="#9e007b"/><stop offset="1" stop-color="#9e005f"/></linearGradient><linearGradient id="o121"><stop offset="0" stop-color="#00319e"/><stop offset=".219" stop-color="#001e9e"/><stop offset=".505" stop-color="#61009e"/><stop offset=".699" stop-color="#9e009e"/><stop offset=".832" stop-color="#9e007c"/><stop offset="1" stop-color="#9e0061"/></linearGradient><linearGradient id="o122"><stop offset="0" stop-color="#00309e"/><stop offset=".219" stop-color="#001e9e"/><stop offset=".501" stop-color="#5e009e"/><stop offset=".707" stop-color="#9e009e"/><stop offset=".838" stop-color="#9e007d"/><stop offset="1" stop-color="#9e0063"/></linearGradient><linearGradient id="o123"><stop offset="0" stop-color="#002f9e"/><stop offset=".220" stop-color="#001d9e"/><stop offset=".497" stop-color="#5b009e"/><stop offset=".715" stop-color="#9e009e"/><stop offset=".842" stop-color="#9e007e"/><stop offset="1" stop-color="#9e0064"/></linearGradient><linearGradient id="o124"><stop offset="0" stop-color="#002e9e"/><stop offset=".219" stop-color="#001c9e"/><stop offset=".493" stop-color="#59009e"/><stop offset=".723" stop-color="#9e009e"/><stop offset=".846" stop-color="#9e007f"/><stop offset="1" stop-color="#9e0066"/></linearGradient><linearGradient id="o125"><stop offset="0" stop-color="#002d9e"/><stop offset=".218" stop-color="#001b9e"/><stop offset=".489" stop-color="#56009e"/><stop offset=".732" stop-color="#9e009e"/><stop offset=".853" stop-color="#9e0080"/><stop offset="1" stop-color="#9e0068"/></linearGradient><linearGradient id="o126"><stop offset="0" stop-color="#002c9e"/><stop offset=".218" stop-color="#001b9e"/><stop offset=".484" stop-color="#54009e"/><stop offset=".739" stop-color="#9e009e"/><stop offset=".856" stop-color="#9e0081"/><stop offset="1" stop-color="#9e006a"/></linearGradient><linearGradient id="o127"><stop offset="0" stop-color="#002b9e"/><stop offset=".217" stop-color="#001a9e"/><stop offset=".480" stop-color="#51009e"/><stop offset=".748" stop-color="#9e009e"/><stop offset=".863" stop-color="#9e0082"/><stop offset="1" stop-color="#9e006b"/></linearGradient><linearGradient id="o128"><stop offset="0" stop-color="#002a9e"/><stop offset=".216" stop-color="#00199e"/><stop offset=".476" stop-color="#4f009e"/><stop offset=".757" stop-color="#9e009e"/><stop offset=".868" stop-color="#9e0083"/><stop offset="1" stop-color="#9e006d"/></linearGradient><linearGradient id="o129"><stop offset="0" stop-color="#00299e"/><stop offset=".218" stop-color="#00189e"/><stop offset=".471" stop-color="#4c009e"/><stop offset=".766" stop-color="#9e009e"/><stop offset="1" stop-color="#9e006f"/></linearGradient><linearGradient id="o130"><stop offset="0" stop-color="#00289e"/><stop offset=".217" stop-color="#00189e"/><stop offset=".467" stop-color="#4a009e"/><stop offset=".775" stop-color="#9e009e"/><stop offset="1" stop-color="#9e0071"/></linearGradient><linearGradient id="o131"><stop offset="0" stop-color="#00279e"/><stop offset=".214" stop-color="#00179e"/><stop offset=".461" stop-color="#48009e"/><stop offset=".783" stop-color="#9e009e"/><stop offset="1" stop-color="#9e0073"/></linearGradient><linearGradient id="o132"><stop offset="0" stop-color="#00269e"/><stop offset=".213" stop-color="#00169e"/><stop offset=".457" stop-color="#46009e"/><stop offset=".790" stop-color="#9e009e"/><stop offset="1" stop-color="#9e0075"/></linearGradient><linearGradient id="o133"><stop offset="0" stop-color="#00259e"/><stop offset=".214" stop-color="#00169e"/><stop offset=".454" stop-color="#44009e"/><stop offset=".797" stop-color="#9e009e"/><stop offset="1" stop-color="#9e0076"/></linearGradient><linearGradient id="o134"><stop offset="0" stop-color="#00259e"/><stop offset=".213" stop-color="#00159e"/><stop offset=".449" stop-color="#42009e"/><stop offset=".807" stop-color="#9e009e"/><stop offset="1" stop-color="#9e0078"/></linearGradient><linearGradient id="o135"><stop offset="0" stop-color="#00249e"/><stop offset=".212" stop-color="#00149e"/><stop offset=".444" stop-color="#40009e"/><stop offset=".817" stop-color="#9e009e"/><stop offset="1" stop-color="#9e007a"/></linearGradient><linearGradient id="o136"><stop offset="0" stop-color="#00239e"/><stop offset=".212" stop-color="#00149e"/><stop offset=".438" stop-color="#3e009e"/><stop offset=".826" stop-color="#9e009e"/><stop offset="1" stop-color="#9e007c"/></linearGradient><linearGradient id="o137"><stop offset="0" stop-color="#00229e"/><stop offset=".211" stop-color="#00139e"/><stop offset=".433" stop-color="#3b009e"/><stop offset=".836" stop-color="#9e009e"/><stop offset="1" stop-color="#9e007e"/></linearGradient><linearGradient id="o138"><stop offset="0" stop-color="#00219e"/><stop offset=".209" stop-color="#00129e"/><stop offset=".428" stop-color="#39009e"/><stop offset=".847" stop-color="#9e009e"/><stop offset="1" stop-color="#9e0080"/></linearGradient><linearGradient id="o139"><stop offset="0" stop-color="#00209e"/><stop offset=".211" stop-color="#00129e"/><stop offset=".423" stop-color="#37009e"/><stop offset=".857" stop-color="#9e009e"/><stop offset="1" stop-color="#9e0082"/></linearGradient><linearGradient id="o140"><stop offset="0" stop-color="#001f9e"/><stop offset=".208" stop-color="#00119e"/><stop offset=".416" stop-color="#35009e"/><stop offset=".867" stop-color="#9e009e"/><stop offset="1" stop-color="#9e0085"/></linearGradient><linearGradient id="o141"><stop offset="0" stop-color="#001e9e"/><stop offset=".207" stop-color="#00119e"/><stop offset=".410" stop-color="#33009e"/><stop offset=".878" stop-color="#9e009e"/><stop offset="1" stop-color="#9e0087"/></linearGradient><linearGradient id="o142"><stop offset="0" stop-color="#001e9e"/><stop offset=".209" stop-color="#00109e"/><stop offset=".405" stop-color="#31009e"/><stop offset=".890" stop-color="#9e009e"/><stop offset="1" stop-color="#9e0089"/></linearGradient><linearGradient id="o143"><stop offset="0" stop-color="#001d9e"/><stop offset=".207" stop-color="#000f9e"/><stop offset=".399" stop-color="#2f009e"/><stop offset=".901" stop-color="#9e009e"/><stop offset="1" stop-color="#9e008b"/></linearGradient><linearGradient id="o144"><stop offset="0" stop-color="#001c9e"/><stop offset=".204" stop-color="#000f9e"/><stop offset=".392" stop-color="#2d009e"/><stop offset=".912" stop-color="#9e009e"/><stop offset="1" stop-color="#9e008d"/></linearGradient><linearGradient id="o145"><stop offset="0" stop-color="#001b9e"/><stop offset=".206" stop-color="#000e9e"/><stop offset=".386" stop-color="#2b009e"/><stop offset=".924" stop-color="#9e009e"/><stop offset="1" stop-color="#9e0090"/></linearGradient><linearGradient id="o146"><stop offset="0" stop-color="#001a9e"/><stop offset=".204" stop-color="#000d9e"/><stop offset=".380" stop-color="#2a009e"/><stop offset=".936" stop-color="#9e009e"/><stop offset="1" stop-color="#9e0092"/></linearGradient><linearGradient id="o147"><stop offset="0" stop-color="#001a9e"/><stop offset=".203" stop-color="#000d9e"/><stop offset=".374" stop-color="#28009e"/><stop offset=".948" stop-color="#9e009e"/><stop offset="1" stop-color="#9e0095"/></linearGradient><linearGradient id="o148"><stop offset="0" stop-color="#00199e"/><stop offset=".203" stop-color="#000c9e"/><stop offset=".366" stop-color="#26009e"/><stop offset=".961" stop-color="#9e009e"/><stop offset="1" stop-color="#9e0097"/></linearGradient><linearGradient id="o149"><stop offset="0" stop-color="#00189e"/><stop offset=".201" stop-color="#000c9e"/><stop offset=".359" stop-color="#24009e"/><stop offset=".970" stop-color="#9e009e"/><stop offset="1" stop-color="#9e0099"/></linearGradient><linearGradient id="o150"><stop offset="0" stop-color="#00179e"/><stop offset=".199" stop-color="#000b9e"/><stop offset=".352" stop-color="#22009e"/><stop offset="1" stop-color="#9e009b"/></linearGradient><linearGradient id="o151"><stop offset="0" stop-color="#00169e"/><stop offset=".199" stop-color="#000b9e"/><stop offset=".343" stop-color="#20009e"/><stop offset="1" stop-color="#9e009e"/></linearGradient><linearGradient id="o152"><stop offset="0" stop-color="#00169e"/><stop offset=".197" stop-color="#000a9e"/><stop offset=".340" stop-color="#1f009e"/><stop offset="1" stop-color="#9c009e"/></linearGradient><linearGradient id="o153"><stop offset="0" stop-color="#00159e"/><stop offset=".196" stop-color="#000a9e"/><stop offset=".333" stop-color="#1e009e"/><stop offset="1" stop-color="#99009e"/></linearGradient><linearGradient id="o154"><stop offset="0" stop-color="#00149e"/><stop offset=".195" stop-color="#00099e"/><stop offset=".324" stop-color="#1c009e"/><stop offset="1" stop-color="#97009e"/></linearGradient><linearGradient id="o155"><stop offset="0" stop-color="#00139e"/><stop offset=".194" stop-color="#00089e"/><stop offset=".317" stop-color="#1a009e"/><stop offset="1" stop-color="#94009e"/></linearGradient><linearGradient id="o156"><stop offset="0" stop-color="#00139e"/><stop offset=".192" stop-color="#00089e"/><stop offset=".310" stop-color="#18009e"/><stop offset="1" stop-color="#92009e"/></linearGradient><linearGradient id="o157"><stop offset="0" stop-color="#00129e"/><stop offset=".191" stop-color="#00079e"/><stop offset=".300" stop-color="#17009e"/><stop offset="1" stop-color="#8f009e"/></linearGradient><linearGradient id="o158"><stop offset="0" stop-color="#00119e"/><stop offset=".190" stop-color="#00079e"/><stop offset=".292" stop-color="#15009e"/><stop offset="1" stop-color="#8d009e"/></linearGradient><linearGradient id="o159"><stop offset="0" stop-color="#00109e"/><stop offset=".188" stop-color="#00069e"/><stop offset=".284" stop-color="#13009e"/><stop offset="1" stop-color="#8b009e"/></linearGradient><linearGradient id="o160"><stop offset="0" stop-color="#00109e"/><stop offset=".187" stop-color="#00069e"/><stop offset=".273" stop-color="#12009e"/><stop offset="1" stop-color="#88009e"/></linearGradient><linearGradient id="o161"><stop offset="0" stop-color="#000f9e"/><stop offset=".186" stop-color="#00059e"/><stop offset=".265" stop-color="#10009e"/><stop offset="1" stop-color="#86009e"/></linearGradient><linearGradient id="o162"><stop offset="0" stop-color="#000e9e"/><stop offset=".181" stop-color="#00059e"/><stop offset=".254" stop-color="#0e009e"/><stop offset="1" stop-color="#84009e"/></linearGradient><linearGradient id="o163"><stop offset="0" stop-color="#000d9e"/><stop offset=".183" stop-color="#00049e"/><stop offset="1" stop-color="#82009e"/></linearGradient><linearGradient id="o164"><stop offset="0" stop-color="#000d9e"/><stop offset=".177" stop-color="#00039e"/><stop offset="1" stop-color="#80009e"/></linearGradient><linearGradient id="o165"><stop offset="0" stop-color="#000c9e"/><stop offset=".175" stop-color="#00039e"/><stop offset="1" stop-color="#7e009e"/></linearGradient><linearGradient id="o166"><stop offset="0" stop-color="#000b9e"/><stop offset=".177" stop-color="#00029e"/><stop offset="1" stop-color="#7c009e"/></linearGradient><linearGradient id="o167"><stop offset="0" stop-color="#000b9e"/><stop offset=".172" stop-color="#00029e"/><stop offset="1" stop-color="#7a009e"/></linearGradient><linearGradient id="o168"><stop offset="0" stop-color="#000a9e"/><stop offset=".170" stop-color="#00019e"/><stop offset="1" stop-color="#78009e"/></linearGradient><linearGradient id="o169"><stop offset="0" stop-color="#00099e"/><stop offset=".169" stop-color="#00019e"/><stop offset="1" stop-color="#76009e"/></linearGradient><linearGradient id="o170"><stop offset="0" stop-color="#00099e"/><stop offset=".167" stop-color="#00009e"/><stop offset="1" stop-color="#74009e"/></linearGradient><linearGradient id="o171"><stop offset="0" stop-color="#00089e"/><stop offset=".161" stop-color="#00009e"/><stop offset="1" stop-color="#72009e"/></linearGradient><linearGradient id="o172"><stop offset="0" stop-color="#00079e"/><stop offset=".163" stop-color="#00009e"/><stop offset="1" stop-color="#70009e"/></linearGradient><linearGradient id="o173"><stop offset="0" stop-color="#00069e"/><stop offset=".157" stop-color="#00009e"/><stop offset="1" stop-color="#6e009e"/></linearGradient><linearGradient id="o174"><stop offset="0" stop-color="#00069e"/><stop offset=".155" stop-color="#00009e"/><stop offset="1" stop-color="#6c009e"/></linearGradient><linearGradient id="o175"><stop offset="0" stop-color="#00059e"/><stop offset=".153" stop-color="#00009e"/><stop offset="1" stop-color="#6a009e"/></linearGradient><linearGradient id="o176"><stop offset="0" stop-color="#00049e"/><stop offset=".146" stop-color="#00009e"/><stop offset="1" stop-color="#68009e"/></linearGradient><linearGradient id="o177"><stop offset="0" stop-color="#00039e"/><stop offset=".144" stop-color="#00009e"/><stop offset="1" stop-color="#66009e"/></linearGradient><linearGradient id="o178"><stop offset="0" stop-color="#00039e"/><stop offset=".141" stop-color="#00009e"/><stop offset="1" stop-color="#65009e"/></linearGradient><linearGradient id="o179"><stop offset="0" stop-color="#00029e"/><stop offset=".139" stop-color="#00009e"/><stop offset="1" stop-color="#63009e"/></linearGradient><linearGradient id="o180"><stop offset="0" stop-color="#00019e"/><stop offset=".131" stop-color="#00009e"/><stop offset="1" stop-color="#62009e"/></linearGradient><linearGradient id="o181"><stop offset="0" stop-color="#00009e"/><stop offset=".123" stop-color="#00009e"/><stop offset="1" stop-color="#60009e"/></linearGradient><linearGradient id="o182"><stop offset="0" stop-color="#00009e"/><stop offset=".125" stop-color="#00009e"/><stop offset="1" stop-color="#5e009e"/></linearGradient><linearGradient id="o183"><stop offset="0" stop-color="#00009e"/><stop offset=".117" stop-color="#00009e"/><stop offset="1" stop-color="#5c009e"/></linearGradient><linearGradient id="o184"><stop offset="0" stop-color="#00009e"/><stop offset=".109" stop-color="#00009e"/><stop offset="1" stop-color="#5b009e"/></linearGradient><linearGradient id="o185"><stop offset="0" stop-color="#00009e"/><stop offset=".110" stop-color="#00009e"/><stop offset="1" stop-color="#59009e"/></linearGradient><linearGradient id="o186"><stop offset="0" stop-color="#00009e"/><stop offset=".102" stop-color="#00009e"/><stop offset="1" stop-color="#57009e"/></linearGradient><linearGradient id="o187"><stop offset="0" stop-color="#00009e"/><stop offset=".092" stop-color="#00009e"/><stop offset="1" stop-color="#56009e"/></linearGradient><linearGradient id="o188"><stop offset="0" stop-color="#00009e"/><stop offset=".094" stop-color="#00009e"/><stop offset="1" stop-color="#54009e"/></linearGradient><linearGradient id="o189"><stop offset="0" stop-color="#00009e"/><stop offset=".084" stop-color="#00009e"/><stop offset="1" stop-color="#52009e"/></linearGradient><linearGradient id="o190"><stop offset="0" stop-color="#00009e"/><stop offset=".074" stop-color="#00009e"/><stop offset="1" stop-color="#51009e"/></linearGradient><linearGradient id="o191"><stop offset="0" stop-color="#00009e"/><stop offset=".070" stop-color="#00009e"/><stop offset="1" stop-color="#4f009e"/></linearGradient><linearGradient id="o192"><stop offset="0" stop-color="#00009e"/><stop offset=".058" stop-color="#00009e"/><stop offset="1" stop-color="#4e009e"/></linearGradient><linearGradient id="o193"><stop offset="0" stop-color="#00009e"/><stop offset="1" stop-color="#4c009e"/></linearGradient><linearGradient id="o194"><stop offset="0" stop-color="#00009e"/><stop offset="1" stop-color="#4b009e"/></linearGradient><linearGradient id="o195"><stop offset="0" stop-color="#00009e"/><stop offset="1" stop-color="#49009e"/></linearGradient><linearGradient id="o196"><stop offset="0" stop-color="#00009e"/><stop offset="1" stop-color="#48009e"/></linearGradient><linearGradient id="o197"><stop offset="0" stop-color="#00009e"/><stop offset="1" stop-color="#47009e"/></linearGradient><linearGradient id="o198"><stop offset="0" stop-color="#01009e"/><stop offset="1" stop-color="#45009e"/></linearGradient><linearGradient id="o199"><stop offset="0" stop-color="#02009e"/><stop offset="1" stop-color="#44009e"/></linearGradient><linearGradient id="o200"><stop offset="0" stop-color="#03009e"/><stop offset="1" stop-color="#42009e"/></linearGradient><linearGradient id="o201"><stop offset="0" stop-color="#04009e"/><stop offset="1" stop-color="#41009e"/></linearGradient><linearGradient id="o202"><stop offset="0" stop-color="#05009e"/><stop offset="1" stop-color="#3f009e"/></linearGradient><linearGradient id="o203"><stop offset="0" stop-color="#07009e"/><stop offset="1" stop-color="#3e009e"/></linearGradient><linearGradient id="o204"><stop offset="0" stop-color="#08009e"/><stop offset="1" stop-color="#3d009e"/></linearGradient><linearGradient id="o205"><stop offset="0" stop-color="#09009e"/><stop offset="1" stop-color="#3b009e"/></linearGradient><linearGradient id="o206"><stop offset="0" stop-color="#0a009e"/><stop offset="1" stop-color="#3a009e"/></linearGradient><linearGradient id="o207"><stop offset="0" stop-color="#0b009e"/><stop offset="1" stop-color="#39009e"/></linearGradient><linearGradient id="o208"><stop offset="0" stop-color="#0c009e"/><stop offset="1" stop-color="#37009e"/></linearGradient><linearGradient id="o209"><stop offset="0" stop-color="#0d009e"/><stop offset="1" stop-color="#36009e"/></linearGradient><linearGradient id="o210"><stop offset="0" stop-color="#0e009e"/><stop offset="1" stop-color="#35009e"/></linearGradient><linearGradient id="o211"><stop offset="0" stop-color="#0f009e"/><stop offset="1" stop-color="#33009e"/></linearGradient><linearGradient id="o212"><stop offset="0" stop-color="#10009e"/><stop offset="1" stop-color="#32009e"/></linearGradient><linearGradient id="o213"><stop offset="0" stop-color="#11009e"/><stop offset="1" stop-color="#31009e"/></linearGradient><linearGradient id="o214"><stop offset="0" stop-color="#12009e"/><stop offset="1" stop-color="#30009e"/></linearGradient><linearGradient id="o215"><stop offset="0" stop-color="#13009e"/><stop offset="1" stop-color="#2f009e"/></linearGradient><linearGradient id="o216"><stop offset="0" stop-color="#14009e"/><stop offset="1" stop-color="#2d009e"/></linearGradient><linearGradient id="o217"><stop offset="0" stop-color="#15009e"/><stop offset="1" stop-color="#2c009e"/></linearGradient><linearGradient id="o218"><stop offset="0" stop-color="#16009e"/><stop offset="1" stop-color="#2b009e"/></linearGradient><linearGradient id="o219"><stop offset="0" stop-color="#17009e"/><stop offset="1" stop-color="#2a009e"/></linearGradient><linearGradient id="o220"><stop offset="0" stop-color="#17009e"/><stop offset="1" stop-color="#28009e"/></linearGradient><linearGradient id="o221"><stop offset="0" stop-color="#18009e"/><stop offset="1" stop-color="#27009e"/></linearGradient><linearGradient id="o222"><stop offset="0" stop-color="#19009e"/><stop offset="1" stop-color="#26009e"/></linearGradient><linearGradient id="o223"><stop offset="0" stop-color="#1a009e"/><stop offset="1" stop-color="#25009e"/></linearGradient><linearGradient id="o224"><stop offset="0" stop-color="#1b009e"/><stop offset="1" stop-color="#24009e"/></linearGradient><linearGradient id="o225"><stop offset="0" stop-color="#1c009e"/><stop offset="1" stop-color="#22009e"/></linearGradient><linearGradient id="o226"><stop offset="0" stop-color="#1d009e"/><stop offset="1" stop-color="#21009e"/></linearGradient><linearGradient id="i0"><stop offset="0" stop-color="#00ff01"/><stop offset="1" stop-color="#2eff00"/></linearGradient><linearGradient id="i1"><stop offset="0" stop-color="#00ff08"/><stop offset="1" stop-color="#6aff00"/></linearGradient><linearGradient id="i2"><stop offset="0" stop-color="#00ff0e"/><stop offset=".034" stop-color="#01ff0d"/><stop offset="1" stop-color="#abff00"/></linearGradient><linearGradient id="i3"><stop offset="0" stop-color="#00ff14"/><stop offset=".025" stop-color="#00ff13"/><stop offset=".562" stop-color="#82ff08"/><stop offset="1" stop-color="#f6ff00"/></linearGradient><linearGradient id="i4"><stop offset="0" stop-color="#00ff19"/><stop offset=".480" stop-color="#8fff0e"/><stop offset=".810" stop-color="#feff03"/><stop offset="1" stop-color="#ffc600"/></linearGradient><linearGradient id="i5"><stop offset="0" stop-color="#00ff1e"/><stop offset=".017" stop-color="#01ff1e"/><stop offset=".388" stop-color="#8bff15"/><stop offset=".669" stop-color="#ffff0b"/><stop offset=".818" stop-color="#ffc804"/><stop offset="1" stop-color="#ff9a00"/></linearGradient><linearGradient id="i6"><stop offset="0" stop-color="#00ff24"/><stop offset=".014" stop-color="#00ff24"/><stop offset=".317" stop-color="#85ff1c"/><stop offset=".570" stop-color="#fffe13"/><stop offset=".655" stop-color="#ffd70d"/><stop offset=".754" stop-color="#ffb408"/><stop offset="1" stop-color="#ff7a00"/></linearGradient><linearGradient id="i7"><stop offset="0" stop-color="#00ff29"/><stop offset=".282" stop-color="#8bff22"/><stop offset=".491" stop-color="#fffe1a"/><stop offset=".589" stop-color="#ffcc12"/><stop offset=".699" stop-color="#ffa30b"/><stop offset=".834" stop-color="#ff8004"/><stop offset="1" stop-color="#ff6000"/></linearGradient><linearGradient id="i8"><stop offset="0" stop-color="#00ff2f"/><stop offset=".011" stop-color="#01ff2e"/><stop offset=".239" stop-color="#85ff28"/><stop offset=".435" stop-color="#fffd21"/><stop offset=".538" stop-color="#ffc316"/><stop offset=".663" stop-color="#ff940d"/><stop offset=".815" stop-color="#ff6d05"/><stop offset="1" stop-color="#ff4d00"/></linearGradient><linearGradient id="i9"><stop offset="0" stop-color="#00ff34"/><stop offset=".010" stop-color="#00ff34"/><stop offset=".220" stop-color="#88ff2e"/><stop offset=".385" stop-color="#feff29"/><stop offset=".493" stop-color="#ffbd1b"/><stop offset=".624" stop-color="#ff8a10"/><stop offset=".790" stop-color="#ff6007"/><stop offset="1" stop-color="#ff3d00"/></linearGradient><linearGradient id="i10"><stop offset="0" stop-color="#00ff39"/><stop offset=".204" stop-color="#8eff34"/><stop offset=".345" stop-color="#ffff30"/><stop offset=".394" stop-color="#ffda27"/><stop offset=".451" stop-color="#ffb820"/><stop offset=".588" stop-color="#ff8013"/><stop offset=".770" stop-color="#ff5308"/><stop offset="1" stop-color="#ff2f00"/></linearGradient><linearGradient id="i11"><stop offset="0" stop-color="#00ff3f"/><stop offset=".008" stop-color="#02ff3e"/><stop offset=".182" stop-color="#8bff3b"/><stop offset=".316" stop-color="#ffff37"/><stop offset=".364" stop-color="#ffd62d"/><stop offset=".421" stop-color="#ffb324"/><stop offset=".486" stop-color="#ff931c"/><stop offset=".563" stop-color="#ff7715"/><stop offset=".749" stop-color="#ff4909"/><stop offset="1" stop-color="#ff2400"/></linearGradient><linearGradient id="i12"><stop offset="0" stop-color="#0f4"/><stop offset=".007" stop-color="#0f4"/><stop offset=".160" stop-color="#84ff41"/><stop offset=".291" stop-color="#fffe3e"/><stop offset=".340" stop-color="#ffd332"/><stop offset=".396" stop-color="#ffad28"/><stop offset=".463" stop-color="#ff8c1f"/><stop offset=".541" stop-color="#ff6f17"/><stop offset=".735" stop-color="#ff400a"/><stop offset="1" stop-color="#ff1a00"/></linearGradient><linearGradient id="i13"><stop offset="0" stop-color="#00ff49"/><stop offset=".149" stop-color="#87ff47"/><stop offset=".267" stop-color="#fffd44"/><stop offset=".316" stop-color="#ffcf37"/><stop offset=".375" stop-color="#ffa62b"/><stop offset=".441" stop-color="#ff8522"/><stop offset=".521" stop-color="#ff6719"/><stop offset=".722" stop-color="#ff370b"/><stop offset="1" stop-color="#f10"/></linearGradient><linearGradient id="i14"><stop offset="0" stop-color="#00ff4f"/><stop offset=".006" stop-color="#02ff4f"/><stop offset=".135" stop-color="#84ff4d"/><stop offset=".248" stop-color="#fffc4b"/><stop offset=".297" stop-color="#ffcb3c"/><stop offset=".352" stop-color="#ffa330"/><stop offset=".419" stop-color="#ff8025"/><stop offset=".500" stop-color="#ff611b"/><stop offset=".706" stop-color="#ff300c"/><stop offset="1" stop-color="#ff0900"/></linearGradient><linearGradient id="i15"><stop offset="0" stop-color="#00ff54"/><stop offset=".006" stop-color="#00ff54"/><stop offset=".130" stop-color="#87ff54"/><stop offset=".230" stop-color="#feff53"/><stop offset=".278" stop-color="#ffcb42"/><stop offset=".332" stop-color="#ffa134"/><stop offset=".399" stop-color="#ff7c28"/><stop offset=".480" stop-color="#ff5c1d"/><stop offset=".686" stop-color="#ff2b0d"/><stop offset="1" stop-color="#ff0100"/></linearGradient><linearGradient id="i16"><stop offset="0" stop-color="#00ff5a"/><stop offset=".133" stop-color="#8dff5a"/><stop offset=".226" stop-color="#ffff5a"/><stop offset=".271" stop-color="#ffcd49"/><stop offset=".328" stop-color="#ffa039"/><stop offset=".395" stop-color="#ff7b2c"/><stop offset=".476" stop-color="#ff5b21"/><stop offset=".684" stop-color="#ff2a0f"/><stop offset="1" stop-color="#ff0001"/></linearGradient><linearGradient id="i17"><stop offset="0" stop-color="#00ff5f"/><stop offset=".006" stop-color="#02ff5f"/><stop offset=".127" stop-color="#87ff60"/><stop offset=".227" stop-color="#fffe61"/><stop offset=".272" stop-color="#ffcc4e"/><stop offset=".329" stop-color="#ff9f3e"/><stop offset=".396" stop-color="#ff7a30"/><stop offset=".477" stop-color="#ff5b24"/><stop offset=".686" stop-color="#ff2912"/><stop offset="1" stop-color="#ff0003"/></linearGradient><linearGradient id="i18"><stop offset="0" stop-color="#00ff65"/><stop offset=".006" stop-color="#00ff65"/><stop offset=".125" stop-color="#83ff67"/><stop offset=".228" stop-color="#fffd68"/><stop offset=".274" stop-color="#ffcb54"/><stop offset=".331" stop-color="#ff9e42"/><stop offset=".398" stop-color="#ff7a34"/><stop offset=".480" stop-color="#ff5a28"/><stop offset=".690" stop-color="#ff2815"/><stop offset="1" stop-color="#ff0006"/></linearGradient><linearGradient id="i19"><stop offset="0" stop-color="#00ff6a"/><stop offset=".126" stop-color="#86ff6d"/><stop offset=".227" stop-color="#fffd6f"/><stop offset=".273" stop-color="#ffca5a"/><stop offset=".331" stop-color="#ff9d47"/><stop offset=".399" stop-color="#ff7938"/><stop offset=".479" stop-color="#ff5a2c"/><stop offset=".687" stop-color="#ff2918"/><stop offset="1" stop-color="#ff0008"/></linearGradient><linearGradient id="i20"><stop offset="0" stop-color="#00ff70"/><stop offset=".006" stop-color="#02ff70"/><stop offset=".120" stop-color="#7fff73"/><stop offset=".228" stop-color="#fffc76"/><stop offset=".275" stop-color="#ffc960"/><stop offset=".330" stop-color="#ff9e4d"/><stop offset=".398" stop-color="#ff793d"/><stop offset=".478" stop-color="#ff5a30"/><stop offset=".688" stop-color="#ff291a"/><stop offset="1" stop-color="#ff000a"/></linearGradient><linearGradient id="i21"><stop offset="0" stop-color="#00ff76"/><stop offset=".006" stop-color="#00ff76"/><stop offset=".127" stop-color="#86ff7a"/><stop offset=".227" stop-color="#ffff7e"/><stop offset=".273" stop-color="#ffcb67"/><stop offset=".329" stop-color="#ffa053"/><stop offset=".398" stop-color="#ff7a42"/><stop offset=".478" stop-color="#ff5b33"/><stop offset=".686" stop-color="#ff291d"/><stop offset="1" stop-color="#ff000c"/></linearGradient><linearGradient id="i22"><stop offset="0" stop-color="#00ff7b"/><stop offset=".132" stop-color="#8dff81"/><stop offset=".226" stop-color="#fffe85"/><stop offset=".273" stop-color="#ffca6c"/><stop offset=".329" stop-color="#ff9f58"/><stop offset=".395" stop-color="#ff7b46"/><stop offset=".476" stop-color="#ff5b37"/><stop offset=".687" stop-color="#ff2920"/><stop offset="1" stop-color="#ff000e"/></linearGradient><linearGradient id="i23"><stop offset="0" stop-color="#00ff81"/><stop offset=".006" stop-color="#02ff81"/><stop offset=".126" stop-color="#86ff87"/><stop offset=".227" stop-color="#fffe8c"/><stop offset=".274" stop-color="#ffca72"/><stop offset=".331" stop-color="#ff9e5c"/><stop offset=".397" stop-color="#ff7a4b"/><stop offset=".479" stop-color="#ff5a3b"/><stop offset=".688" stop-color="#ff2923"/><stop offset="1" stop-color="#f01"/></linearGradient><linearGradient id="i24"><stop offset="0" stop-color="#00ff87"/><stop offset=".006" stop-color="#01ff87"/><stop offset=".121" stop-color="#7eff8d"/><stop offset=".229" stop-color="#fffd93"/><stop offset=".276" stop-color="#ffc978"/><stop offset=".330" stop-color="#ff9f62"/><stop offset=".397" stop-color="#ff7a4f"/><stop offset=".479" stop-color="#ff5a3f"/><stop offset=".689" stop-color="#ff2926"/><stop offset="1" stop-color="#ff0013"/></linearGradient><linearGradient id="i25"><stop offset="0" stop-color="#00ff8d"/><stop offset=".125" stop-color="#85ff94"/><stop offset=".228" stop-color="#fffc9a"/><stop offset=".276" stop-color="#ffc87e"/><stop offset=".330" stop-color="#ff9e67"/><stop offset=".397" stop-color="#ff7a54"/><stop offset=".478" stop-color="#ff5b43"/><stop offset=".686" stop-color="#ff2929"/><stop offset="1" stop-color="#ff0015"/></linearGradient><linearGradient id="i26"><stop offset="0" stop-color="#00ff93"/><stop offset=".006" stop-color="#02ff93"/><stop offset=".129" stop-color="#89ff9b"/><stop offset=".226" stop-color="#ffffa4"/><stop offset=".274" stop-color="#ffca85"/><stop offset=".329" stop-color="#ff9f6d"/><stop offset=".397" stop-color="#ff7a58"/><stop offset=".477" stop-color="#ff5b47"/><stop offset=".687" stop-color="#ff292c"/><stop offset="1" stop-color="#ff0017"/></linearGradient><linearGradient id="i27"><stop offset="0" stop-color="#0f9"/><stop offset=".006" stop-color="#01ff99"/><stop offset=".127" stop-color="#85ffa2"/><stop offset=".227" stop-color="#ffffab"/><stop offset=".276" stop-color="#ffc98b"/><stop offset=".331" stop-color="#ff9e72"/><stop offset=".396" stop-color="#ff7b5e"/><stop offset=".477" stop-color="#ff5b4b"/><stop offset=".685" stop-color="#ff292f"/><stop offset="1" stop-color="#ff0019"/></linearGradient><linearGradient id="i28"><stop offset="0" stop-color="#00ff9f"/><stop offset=".131" stop-color="#8cffa9"/><stop offset=".226" stop-color="#fffeb2"/><stop offset=".275" stop-color="#ffc891"/><stop offset=".331" stop-color="#ff9e77"/><stop offset=".397" stop-color="#ff7a62"/><stop offset=".479" stop-color="#ff5a4f"/><stop offset=".689" stop-color="#ff2931"/><stop offset="1" stop-color="#ff001b"/></linearGradient><linearGradient id="i29"><stop offset="0" stop-color="#00ffa5"/><stop offset=".007" stop-color="#03ffa6"/><stop offset=".125" stop-color="#85ffb0"/><stop offset=".228" stop-color="#fffdba"/><stop offset=".274" stop-color="#ffca99"/><stop offset=".330" stop-color="#ff9f7e"/><stop offset=".396" stop-color="#ff7b67"/><stop offset=".479" stop-color="#ff5a53"/><stop offset=".686" stop-color="#ff2935"/><stop offset="1" stop-color="#ff001d"/></linearGradient><linearGradient id="i30"><stop offset="0" stop-color="#00ffab"/><stop offset=".007" stop-color="#01ffac"/><stop offset=".120" stop-color="#7dffb6"/><stop offset=".229" stop-color="#fffcc1"/><stop offset=".276" stop-color="#ffc99f"/><stop offset=".332" stop-color="#ff9e83"/><stop offset=".399" stop-color="#ff7a6b"/><stop offset=".478" stop-color="#ff5b57"/><stop offset=".688" stop-color="#ff2937"/><stop offset="1" stop-color="#ff0020"/></linearGradient><linearGradient id="i31"><stop offset="0" stop-color="#00ffb1"/><stop offset=".007" stop-color="#00ffb2"/><stop offset=".124" stop-color="#81ffbe"/><stop offset=".227" stop-color="#feffcb"/><stop offset=".274" stop-color="#ffcba7"/><stop offset=".331" stop-color="#ff9f89"/><stop offset=".398" stop-color="#ff7a70"/><stop offset=".478" stop-color="#ff5b5b"/><stop offset=".686" stop-color="#ff293b"/><stop offset="1" stop-color="#f02"/></linearGradient><linearGradient id="i32"><stop offset="0" stop-color="#00ffb8"/><stop offset=".007" stop-color="#03ffb8"/><stop offset=".128" stop-color="#88ffc5"/><stop offset=".226" stop-color="#ffffd3"/><stop offset=".274" stop-color="#ffcbae"/><stop offset=".328" stop-color="#ffa090"/><stop offset=".395" stop-color="#ff7b76"/><stop offset=".476" stop-color="#ff5b60"/><stop offset=".686" stop-color="#ff293e"/><stop offset="1" stop-color="#ff0024"/></linearGradient><linearGradient id="i33"><stop offset="0" stop-color="#00ffbe"/><stop offset=".007" stop-color="#01ffbf"/><stop offset=".126" stop-color="#84ffcc"/><stop offset=".228" stop-color="#fffeda"/><stop offset=".276" stop-color="#ffcab4"/><stop offset=".330" stop-color="#ff9f95"/><stop offset=".398" stop-color="#ff7a7a"/><stop offset=".480" stop-color="#ff5a63"/><stop offset=".687" stop-color="#ff2941"/><stop offset="1" stop-color="#ff0026"/></linearGradient><linearGradient id="i34"><stop offset="0" stop-color="#00ffc4"/><stop offset=".007" stop-color="#00ffc5"/><stop offset=".120" stop-color="#7cffd3"/><stop offset=".229" stop-color="#fffde2"/><stop offset=".277" stop-color="#ffc9ba"/><stop offset=".332" stop-color="#ff9e9a"/><stop offset=".401" stop-color="#ff797e"/><stop offset=".479" stop-color="#ff5b68"/><stop offset=".688" stop-color="#ff2944"/><stop offset="1" stop-color="#ff0029"/></linearGradient><linearGradient id="i35"><stop offset="0" stop-color="#00ffcb"/><stop offset=".007" stop-color="#03ffcc"/><stop offset=".124" stop-color="#84ffdb"/><stop offset=".228" stop-color="#fffcea"/><stop offset=".276" stop-color="#ffc8c0"/><stop offset=".331" stop-color="#ff9e9f"/><stop offset=".400" stop-color="#ff7883"/><stop offset=".479" stop-color="#ff5a6b"/><stop offset=".690" stop-color="#ff2846"/><stop offset="1" stop-color="#ff002b"/></linearGradient><linearGradient id="i36"><stop offset="0" stop-color="#00ffd2"/><stop offset=".007" stop-color="#01ffd3"/><stop offset=".118" stop-color="#7cffe2"/><stop offset=".229" stop-color="#fffbf1"/><stop offset=".278" stop-color="#ffc7c7"/><stop offset=".333" stop-color="#ff9da5"/><stop offset=".399" stop-color="#ff7988"/><stop offset=".479" stop-color="#ff5a70"/><stop offset=".688" stop-color="#ff294a"/><stop offset="1" stop-color="#ff002d"/></linearGradient><linearGradient id="i37"><stop offset="0" stop-color="#00ffd8"/><stop offset=".007" stop-color="#00ffd9"/><stop offset=".122" stop-color="#7fffea"/><stop offset=".227" stop-color="#fffffd"/><stop offset=".276" stop-color="#ffc9d0"/><stop offset=".332" stop-color="#ff9eac"/><stop offset=".399" stop-color="#ff7a8e"/><stop offset=".479" stop-color="#ff5a74"/><stop offset=".689" stop-color="#ff294d"/><stop offset="1" stop-color="#ff002f"/></linearGradient><linearGradient id="i38"><stop offset="0" stop-color="#00ffdf"/><stop offset=".007" stop-color="#03ffe0"/><stop offset=".113" stop-color="#77fff0"/><stop offset=".194" stop-color="#d7ffff"/><stop offset=".233" stop-color="#fff5fd"/><stop offset=".279" stop-color="#ffc5d3"/><stop offset=".336" stop-color="#ff9baf"/><stop offset=".403" stop-color="#ff7791"/><stop offset=".484" stop-color="#ff5877"/><stop offset=".693" stop-color="#ff284f"/><stop offset="1" stop-color="#ff0032"/></linearGradient><linearGradient id="i39"><stop offset="0" stop-color="#00ffe6"/><stop offset=".007" stop-color="#02ffe7"/><stop offset=".153" stop-color="#a4ffff"/><stop offset=".242" stop-color="#ffecfd"/><stop offset=".288" stop-color="#ffbed4"/><stop offset=".345" stop-color="#ff95b1"/><stop offset=".413" stop-color="#ff7393"/><stop offset=".495" stop-color="#ff5579"/><stop offset=".701" stop-color="#ff2652"/><stop offset="1" stop-color="#ff0034"/></linearGradient><linearGradient id="i40"><stop offset="0" stop-color="#00ffed"/><stop offset=".007" stop-color="#0fe"/><stop offset=".111" stop-color="#73ffff"/><stop offset=".251" stop-color="#ffe3fd"/><stop offset=".297" stop-color="#ffb7d5"/><stop offset=".355" stop-color="#ff90b2"/><stop offset=".423" stop-color="#ff6f94"/><stop offset=".502" stop-color="#ff537c"/><stop offset=".706" stop-color="#ff2654"/><stop offset="1" stop-color="#ff0036"/></linearGradient><linearGradient id="i41"><stop offset="0" stop-color="#00fff4"/><stop offset=".007" stop-color="#03fff5"/><stop offset=".069" stop-color="#47ffff"/><stop offset=".257" stop-color="#ffdafd"/><stop offset=".304" stop-color="#ffb0d6"/><stop offset=".362" stop-color="#ff8bb3"/><stop offset=".428" stop-color="#ff6d97"/><stop offset=".507" stop-color="#ff517e"/><stop offset=".714" stop-color="#ff2456"/><stop offset="1" stop-color="#ff0039"/></linearGradient><linearGradient id="i42"><stop offset="0" stop-color="#00fffb"/><stop offset=".007" stop-color="#02fffd"/><stop offset=".080" stop-color="#4ff5ff"/><stop offset=".266" stop-color="#ffd2fd"/><stop offset=".314" stop-color="#ffaad7"/><stop offset=".372" stop-color="#ff86b5"/><stop offset=".438" stop-color="#ff6999"/><stop offset=".518" stop-color="#ff4e80"/><stop offset=".723" stop-color="#ff2358"/><stop offset="1" stop-color="#ff003b"/></linearGradient><linearGradient id="i43"><stop offset="0" stop-color="#00fcff"/><stop offset=".007" stop-color="#00faff"/><stop offset=".081" stop-color="#4ceeff"/><stop offset=".276" stop-color="#ffcafd"/><stop offset=".324" stop-color="#ffa4d8"/><stop offset=".382" stop-color="#ff81b6"/><stop offset=".449" stop-color="#ff659a"/><stop offset=".529" stop-color="#ff4b81"/><stop offset=".728" stop-color="#ff225b"/><stop offset="1" stop-color="#ff003e"/></linearGradient><linearGradient id="i44"><stop offset="0" stop-color="#00f4ff"/><stop offset=".283" stop-color="#ffc2fd"/><stop offset=".331" stop-color="#ff9ed8"/><stop offset=".390" stop-color="#ff7db7"/><stop offset=".535" stop-color="#ff4984"/><stop offset=".732" stop-color="#ff215d"/><stop offset="1" stop-color="#ff0040"/></linearGradient><linearGradient id="i45"><stop offset="0" stop-color="#0ef"/><stop offset=".007" stop-color="#02edff"/><stop offset=".086" stop-color="#4ee0ff"/><stop offset=".292" stop-color="#ffbbfd"/><stop offset=".341" stop-color="#ff98d9"/><stop offset=".397" stop-color="#ff7aba"/><stop offset=".543" stop-color="#ff4786"/><stop offset=".738" stop-color="#ff2160"/><stop offset="1" stop-color="#ff0043"/></linearGradient><linearGradient id="i46"><stop offset="0" stop-color="#00e8ff"/><stop offset=".008" stop-color="#00e6ff"/><stop offset=".087" stop-color="#4bdaff"/><stop offset=".302" stop-color="#ffb4fd"/><stop offset=".351" stop-color="#ff93da"/><stop offset=".408" stop-color="#ff76bb"/><stop offset=".551" stop-color="#ff4689"/><stop offset=".743" stop-color="#ff2063"/><stop offset="1" stop-color="#ff0045"/></linearGradient><linearGradient id="i47"><stop offset="0" stop-color="#00e1ff"/><stop offset=".309" stop-color="#ffadfd"/><stop offset=".359" stop-color="#ff8ddb"/><stop offset=".416" stop-color="#ff71bc"/><stop offset=".557" stop-color="#ff448b"/><stop offset=".748" stop-color="#ff1f65"/><stop offset="1" stop-color="#ff0048"/></linearGradient><linearGradient id="i48"><stop offset="0" stop-color="#00dbff"/><stop offset=".008" stop-color="#02daff"/><stop offset=".096" stop-color="#50cdff"/><stop offset=".319" stop-color="#ffa6fd"/><stop offset=".369" stop-color="#ff88db"/><stop offset=".427" stop-color="#ff6dbd"/><stop offset=".569" stop-color="#ff418d"/><stop offset=".754" stop-color="#ff1e68"/><stop offset="1" stop-color="#ff004b"/></linearGradient><linearGradient id="i49"><stop offset="0" stop-color="#00d6ff"/><stop offset=".008" stop-color="#00d5ff"/><stop offset=".093" stop-color="#4ac8ff"/><stop offset=".329" stop-color="#ffa0fd"/><stop offset=".380" stop-color="#ff83dc"/><stop offset=".438" stop-color="#ff69be"/><stop offset=".578" stop-color="#ff3f8f"/><stop offset=".760" stop-color="#ff1d6a"/><stop offset="1" stop-color="#ff004d"/></linearGradient><linearGradient id="i50"><stop offset="0" stop-color="#00d0ff"/><stop offset=".337" stop-color="#ff9afd"/><stop offset=".443" stop-color="#ff67c1"/><stop offset=".584" stop-color="#ff3d91"/><stop offset=".765" stop-color="#ff1d6d"/><stop offset="1" stop-color="#ff0050"/></linearGradient><linearGradient id="i51"><stop offset="0" stop-color="#00cbff"/><stop offset=".348" stop-color="#ff94fe"/><stop offset=".455" stop-color="#ff63c2"/><stop offset=".593" stop-color="#ff3c94"/><stop offset=".771" stop-color="#ff1c6f"/><stop offset="1" stop-color="#ff0053"/></linearGradient><linearGradient id="i52"><stop offset="0" stop-color="#00c6ff"/><stop offset=".008" stop-color="#00c5ff"/><stop offset=".104" stop-color="#4cb7ff"/><stop offset=".359" stop-color="#ff8efe"/><stop offset=".466" stop-color="#ff5fc3"/><stop offset=".602" stop-color="#ff3a96"/><stop offset=".777" stop-color="#ff1b72"/><stop offset="1" stop-color="#ff0056"/></linearGradient><linearGradient id="i53"><stop offset="0" stop-color="#00c1ff"/><stop offset=".125" stop-color="#5bafff"/><stop offset=".367" stop-color="#ff89fe"/><stop offset=".472" stop-color="#ff5dc5"/><stop offset=".609" stop-color="#ff3898"/><stop offset=".782" stop-color="#ff1a75"/><stop offset="1" stop-color="#ff0059"/></linearGradient><linearGradient id="i54"><stop offset="0" stop-color="#00bcff"/><stop offset=".378" stop-color="#ff84fe"/><stop offset=".484" stop-color="#ff59c6"/><stop offset=".618" stop-color="#ff369a"/><stop offset=".789" stop-color="#ff1977"/><stop offset="1" stop-color="#ff005b"/></linearGradient><linearGradient id="i55"><stop offset="0" stop-color="#00b8ff"/><stop offset=".008" stop-color="#01b7ff"/><stop offset=".111" stop-color="#4ba9ff"/><stop offset=".389" stop-color="#ff7efe"/><stop offset=".496" stop-color="#ff55c7"/><stop offset=".627" stop-color="#ff349d"/><stop offset=".791" stop-color="#ff197a"/><stop offset="1" stop-color="#ff005e"/></linearGradient><linearGradient id="i56"><stop offset="0" stop-color="#00b3ff"/><stop offset=".132" stop-color="#59a1ff"/><stop offset=".397" stop-color="#ff79fe"/><stop offset=".500" stop-color="#ff53ca"/><stop offset=".632" stop-color="#ff339f"/><stop offset=".798" stop-color="#ff187c"/><stop offset="1" stop-color="#ff0061"/></linearGradient><linearGradient id="i57"><stop offset="0" stop-color="#00afff"/><stop offset=".408" stop-color="#ff75fe"/><stop offset=".512" stop-color="#ff50ca"/><stop offset=".642" stop-color="#ff31a1"/><stop offset=".800" stop-color="#ff1780"/><stop offset="1" stop-color="#ff0064"/></linearGradient><linearGradient id="i58"><stop offset="0" stop-color="#00abff"/><stop offset=".008" stop-color="#01aaff"/><stop offset=".118" stop-color="#4a9cff"/><stop offset=".420" stop-color="#ff70fe"/><stop offset=".525" stop-color="#ff4ccb"/><stop offset=".651" stop-color="#ff2fa3"/><stop offset=".807" stop-color="#ff1682"/><stop offset="1" stop-color="#ff0067"/></linearGradient><linearGradient id="i59"><stop offset="0" stop-color="#00a6ff"/><stop offset=".140" stop-color="#5895ff"/><stop offset=".430" stop-color="#ff6bfe"/><stop offset=".532" stop-color="#ff4acd"/><stop offset=".655" stop-color="#ff2ea6"/><stop offset=".809" stop-color="#ff1686"/><stop offset="1" stop-color="#ff006a"/></linearGradient><linearGradient id="i60"><stop offset="0" stop-color="#00a3ff"/><stop offset=".442" stop-color="#ff67fe"/><stop offset=".541" stop-color="#ff48d0"/><stop offset=".665" stop-color="#ff2ca8"/><stop offset=".815" stop-color="#ff1588"/><stop offset="1" stop-color="#ff006d"/></linearGradient><linearGradient id="i61"><stop offset="0" stop-color="#009fff"/><stop offset=".009" stop-color="#019eff"/><stop offset=".130" stop-color="#4c8fff"/><stop offset=".455" stop-color="#ff63fe"/><stop offset=".554" stop-color="#ff44d0"/><stop offset=".675" stop-color="#ff2baa"/><stop offset=".823" stop-color="#ff148b"/><stop offset="1" stop-color="#ff0071"/></linearGradient><linearGradient id="i62"><stop offset="0" stop-color="#009cff"/><stop offset=".009" stop-color="#009bff"/><stop offset=".131" stop-color="#4a8cff"/><stop offset=".467" stop-color="#ff5efe"/><stop offset=".568" stop-color="#ff41d1"/><stop offset=".686" stop-color="#ff29ad"/><stop offset=".830" stop-color="#ff138d"/><stop offset="1" stop-color="#ff0074"/></linearGradient><linearGradient id="i63"><stop offset="0" stop-color="#0098ff"/><stop offset=".478" stop-color="#ff5afe"/><stop offset=".575" stop-color="#ff3fd3"/><stop offset=".695" stop-color="#ff27af"/><stop offset=".832" stop-color="#ff1391"/><stop offset="1" stop-color="#f07"/></linearGradient><linearGradient id="i64"><stop offset="0" stop-color="#0094ff"/><stop offset=".491" stop-color="#ff56fe"/><stop offset=".585" stop-color="#ff3dd5"/><stop offset=".701" stop-color="#ff26b2"/><stop offset=".839" stop-color="#ff1294"/><stop offset="1" stop-color="#ff007a"/></linearGradient><linearGradient id="i65"><stop offset="0" stop-color="#0091ff"/><stop offset=".009" stop-color="#0090ff"/><stop offset=".140" stop-color="#4981ff"/><stop offset=".505" stop-color="#ff52fe"/><stop offset=".599" stop-color="#ff3ad6"/><stop offset=".712" stop-color="#ff25b4"/><stop offset=".842" stop-color="#ff1297"/><stop offset="1" stop-color="#ff007e"/></linearGradient><linearGradient id="i66"><stop offset="0" stop-color="#008dff"/><stop offset=".169" stop-color="#587bff"/><stop offset=".516" stop-color="#ff4ffe"/><stop offset=".612" stop-color="#ff37d6"/><stop offset=".721" stop-color="#ff23b6"/><stop offset=".849" stop-color="#ff119a"/><stop offset="1" stop-color="#ff0081"/></linearGradient><linearGradient id="i67"><stop offset="0" stop-color="#008aff"/><stop offset=".525" stop-color="#fe4cff"/><stop offset=".622" stop-color="#ff35d9"/><stop offset=".728" stop-color="#ff22b9"/><stop offset="1" stop-color="#ff0085"/></linearGradient><linearGradient id="i68"><stop offset="0" stop-color="#0087ff"/><stop offset=".009" stop-color="#0087ff"/><stop offset=".144" stop-color="#4778ff"/><stop offset=".540" stop-color="#fe48ff"/><stop offset=".637" stop-color="#ff32d9"/><stop offset=".740" stop-color="#ff20bb"/><stop offset="1" stop-color="#ff0089"/></linearGradient><linearGradient id="i69"><stop offset="0" stop-color="#0084ff"/><stop offset=".552" stop-color="#fe45ff"/><stop offset=".651" stop-color="#ff2fda"/><stop offset=".750" stop-color="#ff1fbd"/><stop offset="1" stop-color="#ff008c"/></linearGradient><linearGradient id="i70"><stop offset="0" stop-color="#0081ff"/><stop offset=".567" stop-color="#fe41ff"/><stop offset=".757" stop-color="#ff1ec0"/><stop offset="1" stop-color="#ff0090"/></linearGradient><linearGradient id="i71"><stop offset="0" stop-color="#007fff"/><stop offset=".010" stop-color="#007eff"/><stop offset=".154" stop-color="#466fff"/><stop offset=".582" stop-color="#fe3eff"/><stop offset=".769" stop-color="#ff1cc2"/><stop offset="1" stop-color="#ff0094"/></linearGradient><linearGradient id="i72"><stop offset="0" stop-color="#007bff"/><stop offset=".180" stop-color="#5169ff"/><stop offset=".595" stop-color="#fe3bff"/><stop offset=".776" stop-color="#ff1bc5"/><stop offset="1" stop-color="#ff0098"/></linearGradient><linearGradient id="i73"><stop offset="0" stop-color="#0079ff"/><stop offset=".611" stop-color="#fe37ff"/><stop offset=".788" stop-color="#ff19c7"/><stop offset="1" stop-color="#ff009c"/></linearGradient><linearGradient id="i74"><stop offset="0" stop-color="#0076ff"/><stop offset=".010" stop-color="#0075ff"/><stop offset=".164" stop-color="#4667ff"/><stop offset=".627" stop-color="#fe34ff"/><stop offset=".796" stop-color="#ff18ca"/><stop offset="1" stop-color="#ff00a0"/></linearGradient><linearGradient id="i75"><stop offset="0" stop-color="#0073ff"/><stop offset=".192" stop-color="#5061ff"/><stop offset=".641" stop-color="#fe31ff"/><stop offset=".808" stop-color="#ff16cc"/><stop offset="1" stop-color="#ff00a4"/></linearGradient><linearGradient id="i76"><stop offset="0" stop-color="#0071ff"/><stop offset=".658" stop-color="#fe2eff"/><stop offset=".816" stop-color="#ff15cf"/><stop offset="1" stop-color="#ff00a8"/></linearGradient><linearGradient id="i77"><stop offset="0" stop-color="#006fff"/><stop offset=".672" stop-color="#fe2bff"/><stop offset=".826" stop-color="#ff14d1"/><stop offset="1" stop-color="#ff00ac"/></linearGradient><linearGradient id="i78"><stop offset="0" stop-color="#006cff"/><stop offset=".203" stop-color="#4f5aff"/><stop offset=".688" stop-color="#fe28ff"/><stop offset=".833" stop-color="#ff12d4"/><stop offset="1" stop-color="#ff00b0"/></linearGradient><linearGradient id="i79"><stop offset="0" stop-color="#006aff"/><stop offset=".705" stop-color="#fe25ff"/><stop offset=".847" stop-color="#ff11d6"/><stop offset="1" stop-color="#ff00b5"/></linearGradient><linearGradient id="i80"><stop offset="0" stop-color="#0068ff"/><stop offset=".723" stop-color="#fe22ff"/><stop offset=".856" stop-color="#ff10d9"/><stop offset="1" stop-color="#ff00b9"/></linearGradient><linearGradient id="i81"><stop offset="0" stop-color="#0065ff"/><stop offset=".216" stop-color="#4f53ff"/><stop offset=".741" stop-color="#fe1fff"/><stop offset=".870" stop-color="#ff0eda"/><stop offset="1" stop-color="#ff00be"/></linearGradient><linearGradient id="i82"><stop offset="0" stop-color="#0063ff"/><stop offset=".760" stop-color="#fe1dff"/><stop offset="1" stop-color="#ff00c3"/></linearGradient><linearGradient id="i83"><stop offset="0" stop-color="#0061ff"/><stop offset=".779" stop-color="#fe1aff"/><stop offset="1" stop-color="#ff00c8"/></linearGradient><linearGradient id="i84"><stop offset="0" stop-color="#005fff"/><stop offset=".230" stop-color="#4e4cff"/><stop offset=".798" stop-color="#fe17ff"/><stop offset="1" stop-color="#ff00cd"/></linearGradient><linearGradient id="i85"><stop offset="0" stop-color="#005dff"/><stop offset=".244" stop-color="#5049ff"/><stop offset=".818" stop-color="#fe14ff"/><stop offset="1" stop-color="#ff00d2"/></linearGradient><linearGradient id="i86"><stop offset="0" stop-color="#005bff"/><stop offset=".839" stop-color="#fe12ff"/><stop offset="1" stop-color="#ff00d7"/></linearGradient><linearGradient id="i87"><stop offset="0" stop-color="#0058ff"/><stop offset=".246" stop-color="#4d46ff"/><stop offset=".860" stop-color="#fe0fff"/><stop offset="1" stop-color="#f0d"/></linearGradient><linearGradient id="i88"><stop offset="0" stop-color="#0057ff"/><stop offset=".260" stop-color="#4f43ff"/><stop offset=".882" stop-color="#fe0dff"/><stop offset="1" stop-color="#ff00e2"/></linearGradient><linearGradient id="i89"><stop offset="0" stop-color="#05f"/><stop offset=".904" stop-color="#fe0aff"/><stop offset="1" stop-color="#ff00e8"/></linearGradient><linearGradient id="i90"><stop offset="0" stop-color="#0053ff"/><stop offset=".262" stop-color="#4d40ff"/><stop offset=".927" stop-color="#fe07ff"/><stop offset="1" stop-color="#f0e"/></linearGradient><linearGradient id="i91"><stop offset="0" stop-color="#0051ff"/><stop offset=".278" stop-color="#4f3eff"/><stop offset=".951" stop-color="#fe04ff"/><stop offset="1" stop-color="#ff00f4"/></linearGradient><linearGradient id="i92"><stop offset="0" stop-color="#004fff"/><stop offset=".450" stop-color="#7930ff"/><stop offset=".975" stop-color="#fe02ff"/><stop offset="1" stop-color="#ff00fa"/></linearGradient><linearGradient id="i93"><stop offset="0" stop-color="#004eff"/><stop offset=".570" stop-color="#9326ff"/><stop offset="1" stop-color="#fe00ff"/></linearGradient><linearGradient id="i94"><stop offset="0" stop-color="#004cff"/><stop offset=".297" stop-color="#4e38ff"/><stop offset="1" stop-color="#f800ff"/></linearGradient><linearGradient id="i95"><stop offset="0" stop-color="#004aff"/><stop offset="1" stop-color="#f200ff"/></linearGradient><linearGradient id="i96"><stop offset="0" stop-color="#0049ff"/><stop offset="1" stop-color="#ec00ff"/></linearGradient><linearGradient id="i97"><stop offset="0" stop-color="#0047ff"/><stop offset=".311" stop-color="#4c33ff"/><stop offset="1" stop-color="#e600ff"/></linearGradient><linearGradient id="i98"><stop offset="0" stop-color="#0045ff"/><stop offset="1" stop-color="#e200ff"/></linearGradient><linearGradient id="i99"><stop offset="0" stop-color="#04f"/><stop offset="1" stop-color="#dc00ff"/></linearGradient><linearGradient id="i100"><stop offset="0" stop-color="#0042ff"/><stop offset=".317" stop-color="#482fff"/><stop offset="1" stop-color="#d700ff"/></linearGradient><linearGradient id="i101"><stop offset="0" stop-color="#0040ff"/><stop offset="1" stop-color="#d100ff"/></linearGradient><linearGradient id="i102"><stop offset="0" stop-color="#003fff"/><stop offset="1" stop-color="#c0f"/></linearGradient><linearGradient id="i103"><stop offset="0" stop-color="#003dff"/><stop offset=".326" stop-color="#452cff"/><stop offset="1" stop-color="#c700ff"/></linearGradient><linearGradient id="i104"><stop offset="0" stop-color="#003cff"/><stop offset="1" stop-color="#c200ff"/></linearGradient><linearGradient id="i105"><stop offset="0" stop-color="#003bff"/><stop offset="1" stop-color="#bd00ff"/></linearGradient><linearGradient id="i106"><stop offset="0" stop-color="#0039ff"/><stop offset="1" stop-color="#b800ff"/></linearGradient><linearGradient id="i107"><stop offset="0" stop-color="#0038ff"/><stop offset="1" stop-color="#b300ff"/></linearGradient><linearGradient id="i108"><stop offset="0" stop-color="#0036ff"/><stop offset="1" stop-color="#ae00ff"/></linearGradient><linearGradient id="i109"><stop offset="0" stop-color="#0035ff"/><stop offset="1" stop-color="#a0f"/></linearGradient><linearGradient id="i110"><stop offset="0" stop-color="#0034ff"/><stop offset="1" stop-color="#a500ff"/></linearGradient><linearGradient id="i111"><stop offset="0" stop-color="#0032ff"/><stop offset="1" stop-color="#a100ff"/></linearGradient><linearGradient id="i112"><stop offset="0" stop-color="#0031ff"/><stop offset="1" stop-color="#9c00ff"/></linearGradient><linearGradient id="i113"><stop offset="0" stop-color="#0030ff"/><stop offset="1" stop-color="#9800ff"/></linearGradient><linearGradient id="i114"><stop offset="0" stop-color="#002fff"/><stop offset="1" stop-color="#9400ff"/></linearGradient><linearGradient id="i115"><stop offset="0" stop-color="#002dff"/><stop offset="1" stop-color="#9000ff"/></linearGradient><linearGradient id="i116"><stop offset="0" stop-color="#002cff"/><stop offset="1" stop-color="#8c00ff"/></linearGradient><linearGradient id="i117"><stop offset="0" stop-color="#002bff"/><stop offset="1" stop-color="#80f"/></linearGradient><linearGradient id="i118"><stop offset="0" stop-color="#002aff"/><stop offset="1" stop-color="#8400ff"/></linearGradient><linearGradient id="i119"><stop offset="0" stop-color="#0028ff"/><stop offset="1" stop-color="#8100ff"/></linearGradient><linearGradient id="i120"><stop offset="0" stop-color="#0027ff"/><stop offset="1" stop-color="#7d00ff"/></linearGradient><linearGradient id="i121"><stop offset="0" stop-color="#0026ff"/><stop offset="1" stop-color="#7900ff"/></linearGradient><linearGradient id="i122"><stop offset="0" stop-color="#0025ff"/><stop offset="1" stop-color="#7600ff"/></linearGradient><linearGradient id="i123"><stop offset="0" stop-color="#0024ff"/><stop offset="1" stop-color="#7200ff"/></linearGradient><linearGradient id="i124"><stop offset="0" stop-color="#0023ff"/><stop offset="1" stop-color="#6e00ff"/></linearGradient><linearGradient id="i125"><stop offset="0" stop-color="#02f"/><stop offset="1" stop-color="#6b00ff"/></linearGradient><linearGradient id="i126"><stop offset="0" stop-color="#0021ff"/><stop offset="1" stop-color="#6700ff"/></linearGradient><linearGradient id="i127"><stop offset="0" stop-color="#0020ff"/><stop offset="1" stop-color="#6400ff"/></linearGradient><linearGradient id="i128"><stop offset="0" stop-color="#001fff"/><stop offset="1" stop-color="#6000ff"/></linearGradient><linearGradient id="i129"><stop offset="0" stop-color="#001eff"/><stop offset="1" stop-color="#5d00ff"/></linearGradient><linearGradient id="i130"><stop offset="0" stop-color="#001dff"/><stop offset="1" stop-color="#5a00ff"/></linearGradient><linearGradient id="i131"><stop offset="0" stop-color="#001cff"/><stop offset="1" stop-color="#5700ff"/></linearGradient><linearGradient id="i132"><stop offset="0" stop-color="#001bff"/><stop offset="1" stop-color="#5300ff"/></linearGradient><linearGradient id="i133"><stop offset="0" stop-color="#001aff"/><stop offset="1" stop-color="#5000ff"/></linearGradient><linearGradient id="i134"><stop offset="0" stop-color="#0019ff"/><stop offset="1" stop-color="#4d00ff"/></linearGradient><linearGradient id="i135"><stop offset="0" stop-color="#0018ff"/><stop offset="1" stop-color="#4a00ff"/></linearGradient><linearGradient id="i136"><stop offset="0" stop-color="#0017ff"/><stop offset="1" stop-color="#4700ff"/></linearGradient><linearGradient id="i137"><stop offset="0" stop-color="#0016ff"/><stop offset="1" stop-color="#40f"/></linearGradient><linearGradient id="i138"><stop offset="0" stop-color="#0015ff"/><stop offset="1" stop-color="#4100ff"/></linearGradient><linearGradient id="i139"><stop offset="0" stop-color="#0014ff"/><stop offset="1" stop-color="#3e00ff"/></linearGradient><linearGradient id="i140"><stop offset="0" stop-color="#0013ff"/><stop offset="1" stop-color="#3b00ff"/></linearGradient><linearGradient id="i141"><stop offset="0" stop-color="#0012ff"/><stop offset="1" stop-color="#3900ff"/></linearGradient><linearGradient id="i142"><stop offset="0" stop-color="#01f"/><stop offset="1" stop-color="#3600ff"/></linearGradient><linearGradient id="i143"><stop offset="0" stop-color="#0010ff"/><stop offset="1" stop-color="#30f"/></linearGradient><linearGradient id="i144"><stop offset="0" stop-color="#000fff"/><stop offset="1" stop-color="#3000ff"/></linearGradient><linearGradient id="i145"><stop offset="0" stop-color="#000fff"/><stop offset="1" stop-color="#2e00ff"/></linearGradient><linearGradient id="i146"><stop offset="0" stop-color="#000dff"/><stop offset="1" stop-color="#2b00ff"/></linearGradient><linearGradient id="i147"><stop offset="0" stop-color="#000dff"/><stop offset="1" stop-color="#2800ff"/></linearGradient><linearGradient id="i148"><stop offset="0" stop-color="#000cff"/><stop offset="1" stop-color="#2500ff"/></linearGradient><linearGradient id="i149"><stop offset="0" stop-color="#000bff"/><stop offset="1" stop-color="#2300ff"/></linearGradient><linearGradient id="i150"><stop offset="0" stop-color="#000aff"/><stop offset="1" stop-color="#2000ff"/></linearGradient><linearGradient id="i151"><stop offset="0" stop-color="#0009ff"/><stop offset="1" stop-color="#1d00ff"/></linearGradient><linearGradient id="i152"><stop offset="0" stop-color="#0008ff"/><stop offset="1" stop-color="#1a00ff"/></linearGradient><linearGradient id="i153"><stop offset="0" stop-color="#0007ff"/><stop offset="1" stop-color="#1800ff"/></linearGradient><linearGradient id="i154"><stop offset="0" stop-color="#0007ff"/><stop offset="1" stop-color="#1500ff"/></linearGradient><linearGradient id="i155"><stop offset="0" stop-color="#0006ff"/><stop offset="1" stop-color="#1200ff"/></linearGradient><linearGradient id="i156"><stop offset="0" stop-color="#0005ff"/><stop offset="1" stop-color="#1000ff"/></linearGradient><linearGradient id="i157"><stop offset="0" stop-color="#0004ff"/><stop offset="1" stop-color="#0d00ff"/></linearGradient><linearGradient id="i158"><stop offset="0" stop-color="#0003ff"/><stop offset="1" stop-color="#0a00ff"/></linearGradient><linearGradient id="i159"><stop offset="0" stop-color="#0002ff"/><stop offset="1" stop-color="#0700ff"/></linearGradient><linearGradient id="i160"><stop offset="0" stop-color="#0001ff"/><stop offset="1" stop-color="#0500ff"/></linearGradient><linearGradient id="i161"><stop offset="0" stop-color="#0001ff"/><stop offset="1" stop-color="#0200ff"/></linearGradient><clipPath id="cl"><path d="M1277.7,539.3 1277.6,539.3 1277.6,539.3 1277.5,539.3 1277.5,539.3 1277.5,539.3 1277.4,539.3 1277.4,539.4 1277.3,539.4 1277.3,539.4 1277.2,539.4 1277.1,539.4 1277.0,539.4 1276.9,539.4 1276.8,539.4 1276.8,539.4 1276.7,539.5 1276.7,539.6 1276.6,539.7 1276.6,539.7 1276.5,539.8 1276.5,539.8 1276.4,539.8 1276.3,539.8 1276.1,539.8 1276.0,539.8 1275.9,539.8 1275.7,539.8 1275.5,539.8 1275.4,539.7 1275.2,539.8 1275.1,539.8 1274.9,539.8 1274.7,539.8 1274.5,539.7 1274.3,539.7 1274.1,539.6 1273.9,539.5 1273.6,539.4 1273.3,539.2 1272.9,539.0 1272.4,538.7 1271.9,538.4 1271.4,538.1 1270.8,537.7 1270.2,537.2 1269.6,536.8 1268.9,536.3 1268.2,535.7 1267.4,535.1 1266.6,534.4 1265.7,533.7 1264.7,533.0 1263.7,532.1 1262.6,531.3 1261.5,530.3 1260.3,529.3 1259.0,528.2 1257.7,527.1 1256.4,525.9 1254.9,524.7 1253.4,523.4 1251.9,522.1 1250.2,520.7 1248.4,519.3 1246.6,517.7 1244.6,516.1 1242.6,514.4 1240.4,512.6 1238.1,510.7 1235.8,508.8 1233.3,506.7 1230.8,504.6 1228.2,502.4 1225.4,500.1 1222.6,497.7 1219.6,495.1 1216.5,492.4 1213.3,489.5 1209.9,486.4 1206.5,483.2 1203.0,479.8 1199.3,476.3 1195.5,472.4 1191.6,468.2 1187.3,463.6 1182.8,458.4 1177.9,452.7 1172.7,446.4 1167.3,439.7 1161.7,432.5 1156.0,424.9 1150.1,416.9 1144.0,408.4 1137.8,399.5 1131.5,390.1 1125.0,380.2 1118.5,369.9 1111.9,359.3 1105.3,348.5 1098.7,337.4 1092.2,326.1 1085.7,314.8 1079.3,303.3 1073.1,291.8 1067.2,280.3 1061.6,268.9 1056.4,257.7 1051.4,246.7 1046.8,236.0 1042.5,225.5 1038.5,215.4 1034.8,205.7 1031.5,196.5 1028.5,187.7 1025.8,179.3 1023.5,171.5 1021.4,164.2 1019.7,157.4 1018.3,151.0 1017.2,145.0 1016.3,139.5 1015.6,134.3 1015.2,129.6 1015.0,125.2 1015.1,121.1 1015.3,117.3 1015.8,113.8 1016.4,110.5 1017.3,107.5 1018.4,104.7 1019.6,102.2 1021.0,99.9 1022.6,97.8 1024.3,95.9 1026.2,94.3 1028.2,92.9 1030.4,91.6 1032.6,90.6 1034.9,89.7 1037.4,89.0 1039.9,88.4 1042.4,87.9 1045.1,87.5 1047.8,87.2 1050.6,87.0 1053.4,86.8 1056.3,86.7 1059.2,86.6 1062.1,86.5 1065.1,86.5 1068.0,86.5 1070.9,86.5 1073.8,86.6 1076.8,86.6 1079.7,86.7 1082.7,86.8 1085.7,86.9 1088.8,87.1 1091.9,87.2 1095.0,87.4 1098.2,87.6 1101.5,87.8 1104.8,88.1 1108.1,88.3 1111.5,88.6 1115.0,88.9 1118.5,89.2 1122.1,89.5 1125.7,89.9 1129.5,90.2 1133.3,90.6 1137.1,91.0 1141.1,91.4 1145.1,91.8 1149.2,92.2 1153.4,92.7 1157.6,93.1 1162.0,93.6 1166.5,94.1 1171.0,94.6 1175.6,95.1 1180.4,95.6 1185.2,96.2 1190.1,96.7 1195.1,97.3 1200.3,97.9 1205.5,98.5 1210.9,99.1 1216.3,99.7 1221.8,100.3 1227.5,101.0 1233.3,101.6 1239.1,102.3 1245.1,103.0 1251.2,103.7 1257.4,104.4 1263.7,105.2 1270.2,105.9 1276.7,106.6 1283.3,107.4 1290.0,108.2 1296.8,109.0 1303.7,109.8 1310.7,110.6 1317.8,111.4 1325.0,112.2 1332.2,113.1 1339.5,113.9 1346.9,114.7 1354.4,115.6 1361.9,116.5 1369.4,117.3 1377.0,118.2 1384.5,119.1 1392.0,120.0 1399.4,120.8 1406.7,121.7 1414.0,122.5 1421.2,123.3 1428.4,124.2 1435.6,125.0 1442.8,125.8 1449.9,126.7 1457.0,127.5 1463.8,128.3 1470.5,129.0 1477.1,129.8 1483.5,130.5 1489.7,131.2 1495.9,131.9 1501.8,132.6 1507.7,133.3 1513.3,133.9 1518.9,134.6 1524.2,135.2 1529.4,135.8 1534.4,136.4 1539.2,136.9 1543.9,137.5 1548.4,138.0 1552.7,138.5 1556.9,139.0 1561.0,139.4 1564.9,139.9 1568.6,140.3 1572.3,140.7 1575.8,141.2 1579.2,141.5 1582.5,141.9 1585.7,142.3 1588.8,142.7 1591.9,143.0 1594.8,143.3 1597.7,143.7 1600.5,144.0 1603.1,144.3 1605.7,144.6 1608.2,144.9 1610.6,145.2 1612.9,145.4 1615.2,145.7 1617.3,146.0 1619.4,146.2 1621.3,146.4 1623.2,146.6 1624.9,146.8 1626.5,147.0 1628.1,147.2 1629.5,147.4 1630.9,147.5 1632.2,147.7 1633.5,147.8 1634.7,148.0 1635.9,148.1 1636.9,148.2 1638.0,148.3 1638.9,148.5 1639.9,148.6 1640.7,148.7 1641.5,148.7 1642.2,148.8 1642.9,148.9 1643.5,149.0 1644.0,149.0 1644.5,149.1 1645.1,149.2 1645.6,149.2 1646.1,149.3 1646.5,149.3 1647.0,149.4 1647.4,149.4 1647.8,149.5 1648.2,149.5 1648.6,149.6 1649.0,149.6 1649.4,149.7 1649.8,149.7 1650.1,149.7 1650.5,149.8 1650.9,149.8 1651.3,149.9 1651.6,149.9 1652.0,150.0 1652.3,150.0 1652.6,150.0 1652.9,150.1 1653.1,150.1 1653.3,150.1 1653.5,150.1 1653.6,150.1 1653.7,150.2 1653.8,150.2 1654.0,150.2 1654.1,150.2 1654.1,150.2 1654.2,150.2 1654.3,150.2 1654.4,150.2 1654.4,150.2 1654.4,150.2Z"/></clipPath><clipPath id="ct"><path d="M1476.9,137.2 1142.1,105.8 1194.0,427.0Z"/></clipPath><clipPath id="cp"><rect x="1014" y="77" width="618.3" height="476"/></clipPath><linearGradient id="n0"><stop offset="0" stop-color="#729e00"/><stop offset=".789" stop-color="#9e9e00"/><stop offset=".999" stop-color="#9e9300"/></linearGradient><linearGradient id="n1"><stop offset="0" stop-color="#739e00"/><stop offset=".780" stop-color="#9e9e00"/><stop offset=".999" stop-color="#9e9200"/></linearGradient><linearGradient id="n2"><stop offset="0" stop-color="#739e00"/><stop offset=".765" stop-color="#9e9e00"/><stop offset=".999" stop-color="#9e9100"/></linearGradient><linearGradient id="n3"><stop offset="0" stop-color="#749e00"/><stop offset=".750" stop-color="#9e9e00"/><stop offset=".999" stop-color="#9e9100"/></linearGradient><linearGradient id="n4"><stop offset="0" stop-color="#759e00"/><stop offset=".741" stop-color="#9e9e00"/><stop offset=".999" stop-color="#9e9000"/></linearGradient><linearGradient id="n5"><stop offset="0" stop-color="#759e01"/><stop offset=".726" stop-color="#9e9e00"/><stop offset=".999" stop-color="#9e8f00"/></linearGradient><linearGradient id="n6"><stop offset="0" stop-color="#769e01"/><stop offset=".712" stop-color="#9e9e00"/><stop offset=".999" stop-color="#9e8f00"/></linearGradient><linearGradient id="n7"><stop offset="0" stop-color="#769e02"/><stop offset=".702" stop-color="#9e9e00"/><stop offset=".999" stop-color="#9e8e00"/></linearGradient><linearGradient id="n8"><stop offset="0" stop-color="#779e02"/><stop offset=".687" stop-color="#9e9e00"/><stop offset=".999" stop-color="#9e8d00"/></linearGradient><linearGradient id="n9"><stop offset="0" stop-color="#789e03"/><stop offset=".673" stop-color="#9e9e00"/><stop offset=".999" stop-color="#9e8d00"/></linearGradient><linearGradient id="n10"><stop offset="0" stop-color="#789e03"/><stop offset=".663" stop-color="#9e9e00"/><stop offset=".999" stop-color="#9e8c00"/></linearGradient><linearGradient id="n11"><stop offset="0" stop-color="#799e04"/><stop offset=".648" stop-color="#9e9e00"/><stop offset=".999" stop-color="#9e8b00"/></linearGradient><linearGradient id="n12"><stop offset="0" stop-color="#7a9e04"/><stop offset=".634" stop-color="#9e9e00"/><stop offset=".999" stop-color="#9e8a00"/></linearGradient><linearGradient id="n13"><stop offset="0" stop-color="#7a9e05"/><stop offset=".244" stop-color="#889e00"/><stop offset=".619" stop-color="#9e9e00"/><stop offset=".999" stop-color="#9e8a00"/></linearGradient><linearGradient id="n14"><stop offset="0" stop-color="#7b9e05"/><stop offset=".273" stop-color="#8a9e00"/><stop offset=".609" stop-color="#9e9e00"/><stop offset=".999" stop-color="#9e8900"/></linearGradient><linearGradient id="n15"><stop offset="0" stop-color="#7c9e06"/><stop offset=".595" stop-color="#9e9e00"/><stop offset=".999" stop-color="#9e8800"/></linearGradient><linearGradient id="n16"><stop offset="0" stop-color="#7c9e06"/><stop offset=".580" stop-color="#9e9e00"/><stop offset=".999" stop-color="#9e8800"/></linearGradient><linearGradient id="n17"><stop offset="0" stop-color="#7d9e07"/><stop offset=".570" stop-color="#9e9e00"/><stop offset=".999" stop-color="#9e8700"/></linearGradient><linearGradient id="n18"><stop offset="0" stop-color="#7d9e07"/><stop offset=".556" stop-color="#9e9e00"/><stop offset=".999" stop-color="#9e8600"/></linearGradient><linearGradient id="n19"><stop offset="0" stop-color="#7e9e08"/><stop offset=".541" stop-color="#9e9e00"/><stop offset=".999" stop-color="#9e8600"/></linearGradient><linearGradient id="n20"><stop offset="0" stop-color="#7f9e08"/><stop offset=".531" stop-color="#9e9e00"/><stop offset=".999" stop-color="#9e8500"/></linearGradient><linearGradient id="n21"><stop offset="0" stop-color="#809e09"/><stop offset=".517" stop-color="#9e9e00"/><stop offset=".999" stop-color="#9e8400"/></linearGradient><linearGradient id="n22"><stop offset="0" stop-color="#809e0a"/><stop offset=".502" stop-color="#9e9e00"/><stop offset=".999" stop-color="#9e8400"/></linearGradient><linearGradient id="n23"><stop offset="0" stop-color="#819e0a"/><stop offset=".492" stop-color="#9e9e01"/><stop offset=".999" stop-color="#9e8300"/></linearGradient><linearGradient id="n24"><stop offset="0" stop-color="#829e0b"/><stop offset=".478" stop-color="#9e9e02"/><stop offset=".999" stop-color="#9e8200"/></linearGradient><linearGradient id="n25"><stop offset="0" stop-color="#829e0b"/><stop offset=".463" stop-color="#9e9e03"/><stop offset=".999" stop-color="#9e8200"/></linearGradient><linearGradient id="n26"><stop offset="0" stop-color="#839e0c"/><stop offset=".453" stop-color="#9e9e03"/><stop offset=".999" stop-color="#9e8100"/></linearGradient><linearGradient id="n27"><stop offset="0" stop-color="#849e0c"/><stop offset=".439" stop-color="#9e9e04"/><stop offset=".999" stop-color="#9e8100"/></linearGradient><linearGradient id="n28"><stop offset="0" stop-color="#849e0d"/><stop offset=".424" stop-color="#9e9e05"/><stop offset=".653" stop-color="#9e9100"/><stop offset=".999" stop-color="#9e8000"/></linearGradient><linearGradient id="n29"><stop offset="0" stop-color="#859e0d"/><stop offset=".414" stop-color="#9e9e06"/><stop offset=".682" stop-color="#9e8f00"/><stop offset=".999" stop-color="#9e7f00"/></linearGradient><linearGradient id="n30"><stop offset="0" stop-color="#869e0e"/><stop offset=".400" stop-color="#9e9e07"/><stop offset=".707" stop-color="#9e8d00"/><stop offset=".999" stop-color="#9e7f00"/></linearGradient><linearGradient id="n31"><stop offset="0" stop-color="#879e0e"/><stop offset=".385" stop-color="#9e9e07"/><stop offset=".736" stop-color="#9e8a00"/><stop offset=".999" stop-color="#9e7e00"/></linearGradient><linearGradient id="n32"><stop offset="0" stop-color="#879e0f"/><stop offset=".375" stop-color="#9e9e08"/><stop offset=".765" stop-color="#9e8800"/><stop offset=".999" stop-color="#9e7d00"/></linearGradient><linearGradient id="n33"><stop offset="0" stop-color="#889e0f"/><stop offset=".361" stop-color="#9e9e09"/><stop offset=".999" stop-color="#9e7d00"/></linearGradient><linearGradient id="n34"><stop offset="0" stop-color="#899e10"/><stop offset=".346" stop-color="#9e9e0a"/><stop offset=".999" stop-color="#9e7c00"/></linearGradient><linearGradient id="n35"><stop offset="0" stop-color="#899e10"/><stop offset=".331" stop-color="#9e9e0b"/><stop offset=".999" stop-color="#9e7b00"/></linearGradient><linearGradient id="n36"><stop offset="0" stop-color="#8a9e11"/><stop offset=".322" stop-color="#9e9e0b"/><stop offset=".999" stop-color="#9e7b00"/></linearGradient><linearGradient id="n37"><stop offset="0" stop-color="#8b9e11"/><stop offset=".307" stop-color="#9e9e0c"/><stop offset=".999" stop-color="#9e7a00"/></linearGradient><linearGradient id="n38"><stop offset="0" stop-color="#8c9e12"/><stop offset=".292" stop-color="#9e9e0d"/><stop offset=".999" stop-color="#9e7a00"/></linearGradient><linearGradient id="n39"><stop offset="0" stop-color="#8c9e12"/><stop offset=".283" stop-color="#9e9e0e"/><stop offset=".999" stop-color="#9e7900"/></linearGradient><linearGradient id="n40"><stop offset="0" stop-color="#8d9e13"/><stop offset=".268" stop-color="#9e9e0e"/><stop offset=".999" stop-color="#9e7800"/></linearGradient><linearGradient id="n41"><stop offset="0" stop-color="#8e9e13"/><stop offset=".253" stop-color="#9e9e0f"/><stop offset=".999" stop-color="#9e7800"/></linearGradient><linearGradient id="n42"><stop offset="0" stop-color="#8f9e14"/><stop offset=".244" stop-color="#9e9e10"/><stop offset=".999" stop-color="#9e7701"/></linearGradient><linearGradient id="n43"><stop offset="0" stop-color="#909e14"/><stop offset=".229" stop-color="#9e9e11"/><stop offset=".999" stop-color="#9e7601"/></linearGradient><linearGradient id="n44"><stop offset="0" stop-color="#909e15"/><stop offset=".214" stop-color="#9e9e11"/><stop offset=".999" stop-color="#9e7602"/></linearGradient><linearGradient id="n45"><stop offset="0" stop-color="#919e15"/><stop offset=".205" stop-color="#9e9e12"/><stop offset=".999" stop-color="#9e7502"/></linearGradient><linearGradient id="n46"><stop offset="0" stop-color="#929e16"/><stop offset=".195" stop-color="#9e9e13"/><stop offset=".999" stop-color="#9e7503"/></linearGradient><linearGradient id="m0"><stop offset="0" stop-color="#b8ff00"/><stop offset=".789" stop-color="#ff0"/><stop offset=".999" stop-color="#ffed00"/></linearGradient><linearGradient id="m1"><stop offset="0" stop-color="#b9ff00"/><stop offset=".780" stop-color="#ff0"/><stop offset=".999" stop-color="#ffec00"/></linearGradient><linearGradient id="m2"><stop offset="0" stop-color="#baff00"/><stop offset=".765" stop-color="#ff0"/><stop offset=".999" stop-color="#ffea00"/></linearGradient><linearGradient id="m3"><stop offset="0" stop-color="#bf0"/><stop offset=".750" stop-color="#ff0"/><stop offset=".999" stop-color="#ffe900"/></linearGradient><linearGradient id="m4"><stop offset="0" stop-color="#bcff00"/><stop offset=".741" stop-color="#ff0"/><stop offset=".999" stop-color="#ffe800"/></linearGradient><linearGradient id="m5"><stop offset="0" stop-color="#bdff01"/><stop offset=".726" stop-color="#ff0"/><stop offset=".999" stop-color="#ffe700"/></linearGradient><linearGradient id="m6"><stop offset="0" stop-color="#beff02"/><stop offset=".712" stop-color="#ff0"/><stop offset=".999" stop-color="#ffe600"/></linearGradient><linearGradient id="m7"><stop offset="0" stop-color="#bfff03"/><stop offset=".702" stop-color="#ff0"/><stop offset=".999" stop-color="#ffe500"/></linearGradient><linearGradient id="m8"><stop offset="0" stop-color="#c0ff04"/><stop offset=".107" stop-color="#c9ff00"/><stop offset=".687" stop-color="#ff0"/><stop offset=".999" stop-color="#ffe400"/></linearGradient><linearGradient id="m9"><stop offset="0" stop-color="#c1ff05"/><stop offset=".136" stop-color="#cdff00"/><stop offset=".673" stop-color="#ff0"/><stop offset=".999" stop-color="#ffe300"/></linearGradient><linearGradient id="m10"><stop offset="0" stop-color="#c2ff05"/><stop offset=".161" stop-color="#d0ff00"/><stop offset=".663" stop-color="#ff0"/><stop offset=".999" stop-color="#ffe200"/></linearGradient><linearGradient id="m11"><stop offset="0" stop-color="#c3ff06"/><stop offset=".190" stop-color="#d4ff00"/><stop offset=".648" stop-color="#ff0"/><stop offset=".999" stop-color="#ffe000"/></linearGradient><linearGradient id="m12"><stop offset="0" stop-color="#c4ff07"/><stop offset=".219" stop-color="#d8ff00"/><stop offset=".634" stop-color="#ff0"/><stop offset=".999" stop-color="#ffdf00"/></linearGradient><linearGradient id="m13"><stop offset="0" stop-color="#c5ff08"/><stop offset=".244" stop-color="#dbff00"/><stop offset=".619" stop-color="#ff0"/><stop offset=".999" stop-color="#ffde00"/></linearGradient><linearGradient id="m14"><stop offset="0" stop-color="#c6ff09"/><stop offset=".273" stop-color="#dfff00"/><stop offset=".609" stop-color="#ff0"/><stop offset=".999" stop-color="#fd0"/></linearGradient><linearGradient id="m15"><stop offset="0" stop-color="#c7ff0a"/><stop offset=".297" stop-color="#e3ff00"/><stop offset=".595" stop-color="#ff0"/><stop offset=".999" stop-color="#ffdc00"/></linearGradient><linearGradient id="m16"><stop offset="0" stop-color="#c8ff0a"/><stop offset=".327" stop-color="#e6ff00"/><stop offset=".580" stop-color="#ff0"/><stop offset=".999" stop-color="#ffdb00"/></linearGradient><linearGradient id="m17"><stop offset="0" stop-color="#c9ff0b"/><stop offset=".356" stop-color="#eaff00"/><stop offset=".570" stop-color="#ff0"/><stop offset=".999" stop-color="#ffda00"/></linearGradient><linearGradient id="m18"><stop offset="0" stop-color="#caff0c"/><stop offset=".380" stop-color="#ef0"/><stop offset=".556" stop-color="#ff0"/><stop offset=".999" stop-color="#ffd900"/></linearGradient><linearGradient id="m19"><stop offset="0" stop-color="#cbff0d"/><stop offset=".409" stop-color="#f2ff00"/><stop offset=".541" stop-color="#ff0"/><stop offset=".999" stop-color="#ffd800"/></linearGradient><linearGradient id="m20"><stop offset="0" stop-color="#cdff0e"/><stop offset=".531" stop-color="#ff0"/><stop offset=".999" stop-color="#ffd700"/></linearGradient><linearGradient id="m21"><stop offset="0" stop-color="#ceff0f"/><stop offset=".517" stop-color="#ff0"/><stop offset=".999" stop-color="#ffd600"/></linearGradient><linearGradient id="m22"><stop offset="0" stop-color="#cfff0f"/><stop offset=".502" stop-color="#ff0"/><stop offset=".999" stop-color="#ffd500"/></linearGradient><linearGradient id="m23"><stop offset="0" stop-color="#d0ff10"/><stop offset=".492" stop-color="#ffff01"/><stop offset=".999" stop-color="#ffd400"/></linearGradient><linearGradient id="m24"><stop offset="0" stop-color="#d1ff11"/><stop offset=".478" stop-color="#ffff03"/><stop offset=".999" stop-color="#ffd200"/></linearGradient><linearGradient id="m25"><stop offset="0" stop-color="#d2ff12"/><stop offset=".463" stop-color="#ffff04"/><stop offset=".575" stop-color="#fff400"/><stop offset=".999" stop-color="#ffd100"/></linearGradient><linearGradient id="m26"><stop offset="0" stop-color="#d3ff13"/><stop offset=".453" stop-color="#ffff05"/><stop offset=".599" stop-color="#fff100"/><stop offset=".999" stop-color="#ffd000"/></linearGradient><linearGradient id="m27"><stop offset="0" stop-color="#d4ff13"/><stop offset=".439" stop-color="#ffff07"/><stop offset=".629" stop-color="#ffed00"/><stop offset=".999" stop-color="#ffcf00"/></linearGradient><linearGradient id="m28"><stop offset="0" stop-color="#d6ff14"/><stop offset=".424" stop-color="#ffff08"/><stop offset=".653" stop-color="#ffea00"/><stop offset=".999" stop-color="#ffce00"/></linearGradient><linearGradient id="m29"><stop offset="0" stop-color="#d7ff15"/><stop offset=".414" stop-color="#ffff09"/><stop offset=".682" stop-color="#ffe600"/><stop offset=".999" stop-color="#ffcd00"/></linearGradient><linearGradient id="m30"><stop offset="0" stop-color="#d8ff16"/><stop offset=".400" stop-color="#ffff0b"/><stop offset=".707" stop-color="#ffe300"/><stop offset=".999" stop-color="#fc0"/></linearGradient><linearGradient id="m31"><stop offset="0" stop-color="#d9ff17"/><stop offset=".385" stop-color="#ffff0c"/><stop offset=".736" stop-color="#ffdf00"/><stop offset=".999" stop-color="#ffcb00"/></linearGradient><linearGradient id="m32"><stop offset="0" stop-color="#daff18"/><stop offset=".375" stop-color="#ffff0d"/><stop offset=".765" stop-color="#ffdc00"/><stop offset=".999" stop-color="#ffca00"/></linearGradient><linearGradient id="m33"><stop offset="0" stop-color="#dbff18"/><stop offset=".361" stop-color="#ffff0f"/><stop offset=".789" stop-color="#ffd900"/><stop offset=".999" stop-color="#ffc900"/></linearGradient><linearGradient id="m34"><stop offset="0" stop-color="#ddff19"/><stop offset=".346" stop-color="#ffff10"/><stop offset=".819" stop-color="#ffd500"/><stop offset=".999" stop-color="#ffc800"/></linearGradient><linearGradient id="m35"><stop offset="0" stop-color="#deff1a"/><stop offset=".331" stop-color="#ff1"/><stop offset=".843" stop-color="#ffd200"/><stop offset=".999" stop-color="#ffc700"/></linearGradient><linearGradient id="m36"><stop offset="0" stop-color="#dfff1b"/><stop offset=".322" stop-color="#ffff12"/><stop offset=".872" stop-color="#ffcf00"/><stop offset=".999" stop-color="#ffc600"/></linearGradient><linearGradient id="m37"><stop offset="0" stop-color="#e0ff1c"/><stop offset=".307" stop-color="#ffff14"/><stop offset=".999" stop-color="#ffc500"/></linearGradient><linearGradient id="m38"><stop offset="0" stop-color="#e1ff1d"/><stop offset=".292" stop-color="#ffff15"/><stop offset=".629" stop-color="#ffe00a"/><stop offset=".999" stop-color="#ffc400"/></linearGradient><linearGradient id="m39"><stop offset="0" stop-color="#e3ff1d"/><stop offset=".283" stop-color="#ffff16"/><stop offset=".619" stop-color="#ffe00b"/><stop offset=".999" stop-color="#ffc300"/></linearGradient><linearGradient id="m40"><stop offset="0" stop-color="#e4ff1e"/><stop offset=".268" stop-color="#ffff17"/><stop offset=".614" stop-color="#ffdf0c"/><stop offset=".999" stop-color="#ffc200"/></linearGradient><linearGradient id="m41"><stop offset="0" stop-color="#e5ff1f"/><stop offset=".253" stop-color="#ffff19"/><stop offset=".609" stop-color="#ffde0c"/><stop offset=".999" stop-color="#ffc100"/></linearGradient><linearGradient id="m42"><stop offset="0" stop-color="#e6ff20"/><stop offset=".244" stop-color="#ffff1a"/><stop offset=".599" stop-color="#ffde0e"/><stop offset=".999" stop-color="#ffc001"/></linearGradient><linearGradient id="m43"><stop offset="0" stop-color="#e8ff21"/><stop offset=".229" stop-color="#ffff1b"/><stop offset=".590" stop-color="#ffdd0f"/><stop offset=".999" stop-color="#ffbf02"/></linearGradient><linearGradient id="m44"><stop offset="0" stop-color="#e9ff22"/><stop offset=".214" stop-color="#ffff1c"/><stop offset=".585" stop-color="#ffdd0f"/><stop offset=".999" stop-color="#ffbe03"/></linearGradient><linearGradient id="m45"><stop offset="0" stop-color="#eaff23"/><stop offset=".205" stop-color="#ffff1d"/><stop offset=".580" stop-color="#ffdc10"/><stop offset=".999" stop-color="#ffbd04"/></linearGradient><linearGradient id="m46"><stop offset="0" stop-color="#ebff23"/><stop offset=".195" stop-color="#ffff1e"/><stop offset=".570" stop-color="#ffdc11"/><stop offset=".999" stop-color="#ffbc04"/></linearGradient><clipPath id="ci"><rect x="1421.4" y="406.3" width="205.2" height="138.3"/></clipPath><clipPath id="cj"><path d="M1421.4,420.1L1626.6000000000001,529.8V544.6H1421.4Z"/></clipPath><linearGradient id="bR0"><stop offset="0" stop-color="#f42222"/><stop offset="0.15" stop-color="#de0c0c"/><stop offset="0.55" stop-color="#cc0b0b"/><stop offset="1" stop-color="#7a0707"/></linearGradient><linearGradient id="bG0"><stop offset="0" stop-color="#22e322"/><stop offset="0.15" stop-color="#0ccd0c"/><stop offset="0.55" stop-color="#0bbd0b"/><stop offset="1" stop-color="#077107"/></linearGradient><linearGradient id="bB0"><stop offset="0" stop-color="#2222f4"/><stop offset="0.15" stop-color="#0c0cde"/><stop offset="0.55" stop-color="#0b0bcc"/><stop offset="1" stop-color="#07077a"/></linearGradient><linearGradient id="bC0"><stop offset="0" stop-color="#22e3e3"/><stop offset="0.15" stop-color="#0ccdcd"/><stop offset="0.55" stop-color="#0bbdbd"/><stop offset="1" stop-color="#077171"/></linearGradient><linearGradient id="bM0"><stop offset="0" stop-color="#f422f4"/><stop offset="0.15" stop-color="#de0cde"/><stop offset="0.55" stop-color="#cc0bcc"/><stop offset="1" stop-color="#7a077a"/></linearGradient><linearGradient id="bY0"><stop offset="0" stop-color="#e3e322"/><stop offset="0.15" stop-color="#cdcd0c"/><stop offset="0.55" stop-color="#bdbd0b"/><stop offset="1" stop-color="#717107"/></linearGradient><linearGradient id="bR1"><stop offset="0" stop-color="#f45858"/><stop offset="0.15" stop-color="#de4242"/><stop offset="0.55" stop-color="#cc3d3d"/><stop offset="1" stop-color="#7a2525"/></linearGradient><linearGradient id="bG1"><stop offset="0" stop-color="#58e358"/><stop offset="0.15" stop-color="#42cd42"/><stop offset="0.55" stop-color="#3dbd3d"/><stop offset="1" stop-color="#257125"/></linearGradient><linearGradient id="bB1"><stop offset="0" stop-color="#5858f4"/><stop offset="0.15" stop-color="#4242de"/><stop offset="0.55" stop-color="#3d3dcc"/><stop offset="1" stop-color="#25257a"/></linearGradient><linearGradient id="bC1"><stop offset="0" stop-color="#58e3e3"/><stop offset="0.15" stop-color="#42cdcd"/><stop offset="0.55" stop-color="#3dbdbd"/><stop offset="1" stop-color="#257171"/></linearGradient><linearGradient id="bM1"><stop offset="0" stop-color="#f458f4"/><stop offset="0.15" stop-color="#de42de"/><stop offset="0.55" stop-color="#cc3dcc"/><stop offset="1" stop-color="#7a257a"/></linearGradient><linearGradient id="bY1"><stop offset="0" stop-color="#e3e358"/><stop offset="0.15" stop-color="#cdcd42"/><stop offset="0.55" stop-color="#bdbd3d"/><stop offset="1" stop-color="#717125"/></linearGradient><linearGradient id="bR2"><stop offset="0" stop-color="#f48282"/><stop offset="0.15" stop-color="#de6c6c"/><stop offset="0.55" stop-color="#cc6363"/><stop offset="1" stop-color="#7a3b3b"/></linearGradient><linearGradient id="bG2"><stop offset="0" stop-color="#82e382"/><stop offset="0.15" stop-color="#6ccd6c"/><stop offset="0.55" stop-color="#63bd63"/><stop offset="1" stop-color="#3b713b"/></linearGradient><linearGradient id="bB2"><stop offset="0" stop-color="#8282f4"/><stop offset="0.15" stop-color="#6c6cde"/><stop offset="0.55" stop-color="#6363cc"/><stop offset="1" stop-color="#3b3b7a"/></linearGradient><linearGradient id="bC2"><stop offset="0" stop-color="#82e3e3"/><stop offset="0.15" stop-color="#6ccdcd"/><stop offset="0.55" stop-color="#63bdbd"/><stop offset="1" stop-color="#3b7171"/></linearGradient><linearGradient id="bM2"><stop offset="0" stop-color="#f482f4"/><stop offset="0.15" stop-color="#de6cde"/><stop offset="0.55" stop-color="#cc63cc"/><stop offset="1" stop-color="#7a3b7a"/></linearGradient><linearGradient id="bY2"><stop offset="0" stop-color="#e3e382"/><stop offset="0.15" stop-color="#cdcd6c"/><stop offset="0.55" stop-color="#bdbd63"/><stop offset="1" stop-color="#71713b"/></linearGradient><linearGradient id="bR3"><stop offset="0" stop-color="#f4a5a5"/><stop offset="0.15" stop-color="#de8f8f"/><stop offset="0.55" stop-color="#cc8484"/><stop offset="1" stop-color="#7a4f4f"/></linearGradient><linearGradient id="bG3"><stop offset="0" stop-color="#a5e3a5"/><stop offset="0.15" stop-color="#8fcd8f"/><stop offset="0.55" stop-color="#84bd84"/><stop offset="1" stop-color="#4f714f"/></linearGradient><linearGradient id="bB3"><stop offset="0" stop-color="#a5a5f4"/><stop offset="0.15" stop-color="#8f8fde"/><stop offset="0.55" stop-color="#8484cc"/><stop offset="1" stop-color="#4f4f7a"/></linearGradient><linearGradient id="bC3"><stop offset="0" stop-color="#a5e3e3"/><stop offset="0.15" stop-color="#8fcdcd"/><stop offset="0.55" stop-color="#84bdbd"/><stop offset="1" stop-color="#4f7171"/></linearGradient><linearGradient id="bM3"><stop offset="0" stop-color="#f4a5f4"/><stop offset="0.15" stop-color="#de8fde"/><stop offset="0.55" stop-color="#cc84cc"/><stop offset="1" stop-color="#7a4f7a"/></linearGradient><linearGradient id="bY3"><stop offset="0" stop-color="#e3e3a5"/><stop offset="0.15" stop-color="#cdcd8f"/><stop offset="0.55" stop-color="#bdbd84"/><stop offset="1" stop-color="#71714f"/></linearGradient><linearGradient id="bR4"><stop offset="0" stop-color="#f4c5c5"/><stop offset="0.15" stop-color="#deafaf"/><stop offset="0.55" stop-color="#cca1a1"/><stop offset="1" stop-color="#7a6060"/></linearGradient><linearGradient id="bG4"><stop offset="0" stop-color="#c5e3c5"/><stop offset="0.15" stop-color="#afcdaf"/><stop offset="0.55" stop-color="#a1bda1"/><stop offset="1" stop-color="#607160"/></linearGradient><linearGradient id="bB4"><stop offset="0" stop-color="#c5c5f4"/><stop offset="0.15" stop-color="#afafde"/><stop offset="0.55" stop-color="#a1a1cc"/><stop offset="1" stop-color="#60607a"/></linearGradient><linearGradient id="bC4"><stop offset="0" stop-color="#c5e3e3"/><stop offset="0.15" stop-color="#afcdcd"/><stop offset="0.55" stop-color="#a1bdbd"/><stop offset="1" stop-color="#607171"/></linearGradient><linearGradient id="bM4"><stop offset="0" stop-color="#f4c5f4"/><stop offset="0.15" stop-color="#deafde"/><stop offset="0.55" stop-color="#cca1cc"/><stop offset="1" stop-color="#7a607a"/></linearGradient><linearGradient id="bY4"><stop offset="0" stop-color="#e3e3c5"/><stop offset="0.15" stop-color="#cdcdaf"/><stop offset="0.55" stop-color="#bdbda1"/><stop offset="1" stop-color="#717160"/></linearGradient><linearGradient id="bW"><stop offset="0" stop-color="#fff"/><stop offset="0.5" stop-color="#f0f0f0"/><stop offset="1" stop-color="#9a9a9a"/></linearGradient><linearGradient id="yb" x2="0" y2="1"><stop offset="0" stop-color="#d8d860"/><stop offset="0.12" stop-color="#c8c800"/><stop offset="0.5" stop-color="#c4c400"/><stop offset="1" stop-color="#5a5a00"/></linearGradient><linearGradient id="gr" x2="0" y2="1"><stop offset="0" stop-color="#ff5050"/><stop offset="0.25" stop-color="#ff0000"/><stop offset="0.6" stop-color="#f40000"/><stop offset="1" stop-color="#a00000"/></linearGradient><linearGradient id="gg" x2="0" y2="1"><stop offset="0" stop-color="#30a030"/><stop offset="0.3" stop-color="#008800"/><stop offset="1" stop-color="#006000"/></linearGradient><linearGradient id="gb" x2="0" y2="1"><stop offset="0" stop-color="#5a5aff"/><stop offset="0.18" stop-color="#0000ff"/><stop offset="0.6" stop-color="#0000f0"/><stop offset="1" stop-color="#00007a"/></linearGradient><linearGradient id="th" x2="0" y2="1"><stop offset="0" stop-color="#2e2e2e"/><stop offset="0.42" stop-color="#2a2a2a"/><stop offset="0.5" stop-color="#0c0c0c"/><stop offset="1" stop-color="#1c1c1c"/></linearGradient><linearGradient id="tab" x2="0" y2="1"><stop offset="0" stop-color="#484848"/><stop offset="1" stop-color="#2c2c2c"/></linearGradient><radialGradient id="pc" cx=".5" cy=".3" r=".7"><stop offset="0" stop-color="#3a3a3a"/><stop offset="1" stop-color="#484848"/></radialGradient><linearGradient id="pcl" x2="0" y2="1"><stop offset="0" stop-color="#343434"/><stop offset="1" stop-color="#4c4c4c"/></linearGradient><linearGradient id="dev" x2="0" y2="1"><stop offset="0" stop-color="#6e6e6e"/><stop offset="0.5" stop-color="#626262"/><stop offset="1" stop-color="#4c4c4c"/></linearGradient><linearGradient id="ddc" x2="0" y2="1"><stop offset="0" stop-color="#3c3c3c"/><stop offset="1" stop-color="#6a6a6a"/></linearGradient><linearGradient id="gb2" x2="0" y2="1"><stop offset="0" stop-color="#707070"/><stop offset="1" stop-color="#404040"/></linearGradient><linearGradient id="bbg" x2="0" y2="1"><stop offset="0" stop-color="#2a2a2a"/><stop offset="1" stop-color="#3c3c3c"/></linearGradient><linearGradient id="bx" x2="0" y2="1"><stop offset="0" stop-color="#9c9c9c"/><stop offset="0.06" stop-color="#929292"/><stop offset="1" stop-color="#5e5e5e"/></linearGradient><linearGradient id="bxs" x2="0" y2="1"><stop offset="0" stop-color="#1c1c1c"/><stop offset="1" stop-color="#333"/></linearGradient><linearGradient id="ac" x2="0" y2="1"><stop offset="0" stop-color="#5c5c5c"/><stop offset="1" stop-color="#8c8c8c"/></linearGradient><linearGradient id="rb" x2="0" y2="1"><stop offset="0" stop-color="#a8a8a8"/><stop offset="1" stop-color="#7c7c7c"/></linearGradient><linearGradient id="rb2" x2="0" y2="1"><stop offset="0" stop-color="#8e8e8e"/><stop offset="1" stop-color="#5e5e5e"/></linearGradient><linearGradient id="sm" x2="0" y2="1"><stop offset="0" stop-color="#aaa"/><stop offset="1" stop-color="#686868"/></linearGradient><linearGradient id="bk" x2="0" y2="1"><stop offset="0" stop-color="#b8b8b8"/><stop offset="1" stop-color="#7e7e7e"/></linearGradient><linearGradient id="ic" x2="0" y2="1"><stop offset="0" stop-color="#767676"/><stop offset="1" stop-color="#a4a4a4"/></linearGradient><linearGradient id="sb" x2="0" y2="1"><stop offset="0" stop-color="#b4b4b4"/><stop offset="0.5" stop-color="#a8a8a8"/><stop offset="0.5" stop-color="#949494"/><stop offset="1" stop-color="#a0a0a0"/></linearGradient></defs><rect x="0" y="0" width="1655" height="899" fill="#323232"/><rect x="0" y="0" width="1655" height="33" fill="#222"/><rect x="0" y="33" width="1.5" height="791" fill="#272727"/><rect x="971" y="47.6" width="671" height="540.2" fill="#1e1e1e"/><rect x="977" y="53.8" width="659" height="527.4" fill="#323232"/><rect x="1014" y="77" width="618.3" height="476" fill="#252525"/><g clip-path="url(#cp)"><g clip-path="url(#cl)"><rect x="1040" y="86" width="65" height="2.5" fill="url(#o0)"/><rect x="1033" y="88" width="95" height="2.5" fill="url(#o1)"/><rect x="1028" y="90" width="120" height="2.5" fill="url(#o2)"/><rect x="1025" y="92" width="142" height="2.5" fill="url(#o3)"/><rect x="1023" y="94" width="162" height="2.5" fill="url(#o4)"/><rect x="1021" y="96" width="182" height="2.5" fill="url(#o5)"/><rect x="1019" y="98" width="201" height="2.5" fill="url(#o6)"/><rect x="1018" y="100" width="220" height="2.5" fill="url(#o7)"/><rect x="1017" y="102" width="238" height="2.5" fill="url(#o8)"/><rect x="1016" y="104" width="257" height="2.5" fill="url(#o9)"/><rect x="1016" y="106" width="274" height="2.5" fill="url(#o10)"/><rect x="1015" y="108" width="292" height="2.5" fill="url(#o11)"/><rect x="1015" y="110" width="310" height="2.5" fill="url(#o12)"/><rect x="1014" y="112" width="328" height="2.5" fill="url(#o13)"/><rect x="1014" y="114" width="345" height="2.5" fill="url(#o14)"/><rect x="1014" y="116" width="363" height="2.5" fill="url(#o15)"/><rect x="1014" y="118" width="380" height="2.5" fill="url(#o16)"/><rect x="1014" y="120" width="397" height="2.5" fill="url(#o17)"/><rect x="1014" y="122" width="414" height="2.5" fill="url(#o18)"/><rect x="1014" y="124" width="432" height="2.5" fill="url(#o19)"/><rect x="1014" y="126" width="449" height="2.5" fill="url(#o20)"/><rect x="1014" y="128" width="467" height="2.5" fill="url(#o21)"/><rect x="1014" y="130" width="484" height="2.5" fill="url(#o22)"/><rect x="1014" y="132" width="501" height="2.5" fill="url(#o23)"/><rect x="1014" y="134" width="519" height="2.5" fill="url(#o24)"/><rect x="1014" y="136" width="536" height="2.5" fill="url(#o25)"/><rect x="1015" y="138" width="552" height="2.5" fill="url(#o26)"/><rect x="1015" y="140" width="570" height="2.5" fill="url(#o27)"/><rect x="1015" y="142" width="587" height="2.5" fill="url(#o28)"/><rect x="1015" y="144" width="604" height="2.5" fill="url(#o29)"/><rect x="1016" y="146" width="616.3" height="2.5" fill="url(#o30)"/><rect x="1016" y="148" width="616.3" height="2.5" fill="url(#o31)"/><rect x="1017" y="150" width="615.3" height="2.5" fill="url(#o32)"/><rect x="1017" y="152" width="615.3" height="2.5" fill="url(#o33)"/><rect x="1017" y="154" width="615.3" height="2.5" fill="url(#o34)"/><rect x="1018" y="156" width="614.3" height="2.5" fill="url(#o35)"/><rect x="1018" y="158" width="614.3" height="2.5" fill="url(#o36)"/><rect x="1019" y="160" width="613.3" height="2.5" fill="url(#o37)"/><rect x="1019" y="162" width="613.3" height="2.5" fill="url(#o38)"/><rect x="1020" y="164" width="612.3" height="2.5" fill="url(#o39)"/><rect x="1020" y="166" width="612.3" height="2.5" fill="url(#o40)"/><rect x="1021" y="168" width="611.3" height="2.5" fill="url(#o41)"/><rect x="1022" y="170" width="610.3" height="2.5" fill="url(#o42)"/><rect x="1022" y="172" width="610.3" height="2.5" fill="url(#o43)"/><rect x="1023" y="174" width="609.3" height="2.5" fill="url(#o44)"/><rect x="1023" y="176" width="608" height="2.5" fill="url(#o45)"/><rect x="1024" y="178" width="605" height="2.5" fill="url(#o46)"/><rect x="1025" y="180" width="602" height="2.5" fill="url(#o47)"/><rect x="1025" y="182" width="600" height="2.5" fill="url(#o48)"/><rect x="1026" y="184" width="597" height="2.5" fill="url(#o49)"/><rect x="1026" y="186" width="595" height="2.5" fill="url(#o50)"/><rect x="1027" y="188" width="592" height="2.5" fill="url(#o51)"/><rect x="1028" y="190" width="589" height="2.5" fill="url(#o52)"/><rect x="1028" y="192" width="587" height="2.5" fill="url(#o53)"/><rect x="1029" y="194" width="585" height="2.5" fill="url(#o54)"/><rect x="1030" y="196" width="582" height="2.5" fill="url(#o55)"/><rect x="1031" y="198" width="579" height="2.5" fill="url(#o56)"/><rect x="1031" y="200" width="577" height="2.5" fill="url(#o57)"/><rect x="1032" y="202" width="574" height="2.5" fill="url(#o58)"/><rect x="1033" y="204" width="571" height="2.5" fill="url(#o59)"/><rect x="1033" y="206" width="569" height="2.5" fill="url(#o60)"/><rect x="1034" y="208" width="566" height="2.5" fill="url(#o61)"/><rect x="1035" y="210" width="563" height="2.5" fill="url(#o62)"/><rect x="1036" y="212" width="560" height="2.5" fill="url(#o63)"/><rect x="1036" y="214" width="558" height="2.5" fill="url(#o64)"/><rect x="1037" y="216" width="555" height="2.5" fill="url(#o65)"/><rect x="1038" y="218" width="552" height="2.5" fill="url(#o66)"/><rect x="1039" y="220" width="549" height="2.5" fill="url(#o67)"/><rect x="1040" y="222" width="546" height="2.5" fill="url(#o68)"/><rect x="1040" y="224" width="544" height="2.5" fill="url(#o69)"/><rect x="1041" y="226" width="542" height="2.5" fill="url(#o70)"/><rect x="1042" y="228" width="539" height="2.5" fill="url(#o71)"/><rect x="1043" y="230" width="536" height="2.5" fill="url(#o72)"/><rect x="1044" y="232" width="533" height="2.5" fill="url(#o73)"/><rect x="1045" y="234" width="530" height="2.5" fill="url(#o74)"/><rect x="1045" y="236" width="528" height="2.5" fill="url(#o75)"/><rect x="1046" y="238" width="525" height="2.5" fill="url(#o76)"/><rect x="1047" y="240" width="522" height="2.5" fill="url(#o77)"/><rect x="1048" y="242" width="519" height="2.5" fill="url(#o78)"/><rect x="1049" y="244" width="516" height="2.5" fill="url(#o79)"/><rect x="1050" y="246" width="513" height="2.5" fill="url(#o80)"/><rect x="1051" y="248" width="510" height="2.5" fill="url(#o81)"/><rect x="1051" y="250" width="508" height="2.5" fill="url(#o82)"/><rect x="1052" y="252" width="505" height="2.5" fill="url(#o83)"/><rect x="1053" y="254" width="502" height="2.5" fill="url(#o84)"/><rect x="1054" y="256" width="500" height="2.5" fill="url(#o85)"/><rect x="1055" y="258" width="497" height="2.5" fill="url(#o86)"/><rect x="1056" y="260" width="494" height="2.5" fill="url(#o87)"/><rect x="1057" y="262" width="491" height="2.5" fill="url(#o88)"/><rect x="1058" y="264" width="488" height="2.5" fill="url(#o89)"/><rect x="1059" y="266" width="485" height="2.5" fill="url(#o90)"/><rect x="1060" y="268" width="482" height="2.5" fill="url(#o91)"/><rect x="1061" y="270" width="479" height="2.5" fill="url(#o92)"/><rect x="1062" y="272" width="476" height="2.5" fill="url(#o93)"/><rect x="1063" y="274" width="473" height="2.5" fill="url(#o94)"/><rect x="1064" y="276" width="470" height="2.5" fill="url(#o95)"/><rect x="1065" y="278" width="467" height="2.5" fill="url(#o96)"/><rect x="1066" y="280" width="464" height="2.5" fill="url(#o97)"/><rect x="1067" y="282" width="461" height="2.5" fill="url(#o98)"/><rect x="1068" y="284" width="458" height="2.5" fill="url(#o99)"/><rect x="1069" y="286" width="455" height="2.5" fill="url(#o100)"/><rect x="1070" y="288" width="453" height="2.5" fill="url(#o101)"/><rect x="1071" y="290" width="450" height="2.5" fill="url(#o102)"/><rect x="1072" y="292" width="447" height="2.5" fill="url(#o103)"/><rect x="1073" y="294" width="444" height="2.5" fill="url(#o104)"/><rect x="1074" y="296" width="441" height="2.5" fill="url(#o105)"/><rect x="1075" y="298" width="438" height="2.5" fill="url(#o106)"/><rect x="1076" y="300" width="435" height="2.5" fill="url(#o107)"/><rect x="1077" y="302" width="432" height="2.5" fill="url(#o108)"/><rect x="1078" y="304" width="429" height="2.5" fill="url(#o109)"/><rect x="1079" y="306" width="426" height="2.5" fill="url(#o110)"/><rect x="1080" y="308" width="423" height="2.5" fill="url(#o111)"/><rect x="1082" y="310" width="419" height="2.5" fill="url(#o112)"/><rect x="1083" y="312" width="416" height="2.5" fill="url(#o113)"/><rect x="1084" y="314" width="413" height="2.5" fill="url(#o114)"/><rect x="1085" y="316" width="410" height="2.5" fill="url(#o115)"/><rect x="1086" y="318" width="407" height="2.5" fill="url(#o116)"/><rect x="1087" y="320" width="405" height="2.5" fill="url(#o117)"/><rect x="1088" y="322" width="402" height="2.5" fill="url(#o118)"/><rect x="1089" y="324" width="399" height="2.5" fill="url(#o119)"/><rect x="1091" y="326" width="395" height="2.5" fill="url(#o120)"/><rect x="1092" y="328" width="392" height="2.5" fill="url(#o121)"/><rect x="1093" y="330" width="389" height="2.5" fill="url(#o122)"/><rect x="1094" y="332" width="386" height="2.5" fill="url(#o123)"/><rect x="1095" y="334" width="383" height="2.5" fill="url(#o124)"/><rect x="1096" y="336" width="380" height="2.5" fill="url(#o125)"/><rect x="1098" y="338" width="376" height="2.5" fill="url(#o126)"/><rect x="1099" y="340" width="373" height="2.5" fill="url(#o127)"/><rect x="1100" y="342" width="370" height="2.5" fill="url(#o128)"/><rect x="1101" y="344" width="367" height="2.5" fill="url(#o129)"/><rect x="1102" y="346" width="364" height="2.5" fill="url(#o130)"/><rect x="1104" y="348" width="360" height="2.5" fill="url(#o131)"/><rect x="1105" y="350" width="357" height="2.5" fill="url(#o132)"/><rect x="1106" y="352" width="355" height="2.5" fill="url(#o133)"/><rect x="1107" y="354" width="352" height="2.5" fill="url(#o134)"/><rect x="1108" y="356" width="349" height="2.5" fill="url(#o135)"/><rect x="1110" y="358" width="345" height="2.5" fill="url(#o136)"/><rect x="1111" y="360" width="342" height="2.5" fill="url(#o137)"/><rect x="1112" y="362" width="339" height="2.5" fill="url(#o138)"/><rect x="1113" y="364" width="336" height="2.5" fill="url(#o139)"/><rect x="1115" y="366" width="332" height="2.5" fill="url(#o140)"/><rect x="1116" y="368" width="329" height="2.5" fill="url(#o141)"/><rect x="1117" y="370" width="326" height="2.5" fill="url(#o142)"/><rect x="1118" y="372" width="323" height="2.5" fill="url(#o143)"/><rect x="1120" y="374" width="319" height="2.5" fill="url(#o144)"/><rect x="1121" y="376" width="316" height="2.5" fill="url(#o145)"/><rect x="1122" y="378" width="313" height="2.5" fill="url(#o146)"/><rect x="1123" y="380" width="310" height="2.5" fill="url(#o147)"/><rect x="1125" y="382" width="306" height="2.5" fill="url(#o148)"/><rect x="1126" y="384" width="304" height="2.5" fill="url(#o149)"/><rect x="1127" y="386" width="301" height="2.5" fill="url(#o150)"/><rect x="1129" y="388" width="297" height="2.5" fill="url(#o151)"/><rect x="1130" y="390" width="294" height="2.5" fill="url(#o152)"/><rect x="1131" y="392" width="291" height="2.5" fill="url(#o153)"/><rect x="1133" y="394" width="287" height="2.5" fill="url(#o154)"/><rect x="1134" y="396" width="284" height="2.5" fill="url(#o155)"/><rect x="1135" y="398" width="281" height="2.5" fill="url(#o156)"/><rect x="1137" y="400" width="277" height="2.5" fill="url(#o157)"/><rect x="1138" y="402" width="274" height="2.5" fill="url(#o158)"/><rect x="1139" y="404" width="271" height="2.5" fill="url(#o159)"/><rect x="1141" y="406" width="267" height="2.5" fill="url(#o160)"/><rect x="1142" y="408" width="264" height="2.5" fill="url(#o161)"/><rect x="1144" y="410" width="260" height="2.5" fill="url(#o162)"/><rect x="1145" y="412" width="257" height="2.5" fill="url(#o163)"/><rect x="1147" y="414" width="254" height="2.5" fill="url(#o164)"/><rect x="1148" y="416" width="251" height="2.5" fill="url(#o165)"/><rect x="1149" y="418" width="248" height="2.5" fill="url(#o166)"/><rect x="1151" y="420" width="244" height="2.5" fill="url(#o167)"/><rect x="1152" y="422" width="241" height="2.5" fill="url(#o168)"/><rect x="1154" y="424" width="237" height="2.5" fill="url(#o169)"/><rect x="1155" y="426" width="234" height="2.5" fill="url(#o170)"/><rect x="1157" y="428" width="230" height="2.5" fill="url(#o171)"/><rect x="1158" y="430" width="227" height="2.5" fill="url(#o172)"/><rect x="1160" y="432" width="223" height="2.5" fill="url(#o173)"/><rect x="1161" y="434" width="220" height="2.5" fill="url(#o174)"/><rect x="1163" y="436" width="216" height="2.5" fill="url(#o175)"/><rect x="1165" y="438" width="212" height="2.5" fill="url(#o176)"/><rect x="1166" y="440" width="209" height="2.5" fill="url(#o177)"/><rect x="1168" y="442" width="205" height="2.5" fill="url(#o178)"/><rect x="1169" y="444" width="202" height="2.5" fill="url(#o179)"/><rect x="1171" y="446" width="199" height="2.5" fill="url(#o180)"/><rect x="1173" y="448" width="195" height="2.5" fill="url(#o181)"/><rect x="1174" y="450" width="192" height="2.5" fill="url(#o182)"/><rect x="1176" y="452" width="188" height="2.5" fill="url(#o183)"/><rect x="1178" y="454" width="184" height="2.5" fill="url(#o184)"/><rect x="1179" y="456" width="181" height="2.5" fill="url(#o185)"/><rect x="1181" y="458" width="177" height="2.5" fill="url(#o186)"/><rect x="1183" y="460" width="173" height="2.5" fill="url(#o187)"/><rect x="1184" y="462" width="170" height="2.5" fill="url(#o188)"/><rect x="1186" y="464" width="166" height="2.5" fill="url(#o189)"/><rect x="1188" y="466" width="162" height="2.5" fill="url(#o190)"/><rect x="1190" y="468" width="158" height="2.5" fill="url(#o191)"/><rect x="1192" y="470" width="154" height="2.5" fill="url(#o192)"/><rect x="1194" y="472" width="150" height="2.5" fill="url(#o193)"/><rect x="1196" y="474" width="146" height="2.5" fill="url(#o194)"/><rect x="1198" y="476" width="142" height="2.5" fill="url(#o195)"/><rect x="1200" y="478" width="139" height="2.5" fill="url(#o196)"/><rect x="1202" y="480" width="135" height="2.5" fill="url(#o197)"/><rect x="1204" y="482" width="131" height="2.5" fill="url(#o198)"/><rect x="1206" y="484" width="127" height="2.5" fill="url(#o199)"/><rect x="1208" y="486" width="123" height="2.5" fill="url(#o200)"/><rect x="1210" y="488" width="119" height="2.5" fill="url(#o201)"/><rect x="1212" y="490" width="115" height="2.5" fill="url(#o202)"/><rect x="1215" y="492" width="110" height="2.5" fill="url(#o203)"/><rect x="1217" y="494" width="106" height="2.5" fill="url(#o204)"/><rect x="1219" y="496" width="102" height="2.5" fill="url(#o205)"/><rect x="1221" y="498" width="98" height="2.5" fill="url(#o206)"/><rect x="1224" y="500" width="93" height="2.5" fill="url(#o207)"/><rect x="1226" y="502" width="89" height="2.5" fill="url(#o208)"/><rect x="1229" y="504" width="84" height="2.5" fill="url(#o209)"/><rect x="1231" y="506" width="80" height="2.5" fill="url(#o210)"/><rect x="1233" y="508" width="76" height="2.5" fill="url(#o211)"/><rect x="1236" y="510" width="72" height="2.5" fill="url(#o212)"/><rect x="1238" y="512" width="68" height="2.5" fill="url(#o213)"/><rect x="1241" y="514" width="63" height="2.5" fill="url(#o214)"/><rect x="1243" y="516" width="59" height="2.5" fill="url(#o215)"/><rect x="1245" y="518" width="55" height="2.5" fill="url(#o216)"/><rect x="1248" y="520" width="50" height="2.5" fill="url(#o217)"/><rect x="1250" y="522" width="46" height="2.5" fill="url(#o218)"/><rect x="1253" y="524" width="41" height="2.5" fill="url(#o219)"/><rect x="1255" y="526" width="37" height="2.5" fill="url(#o220)"/><rect x="1257" y="528" width="33" height="2.5" fill="url(#o221)"/><rect x="1260" y="530" width="28" height="2.5" fill="url(#o222)"/><rect x="1262" y="532" width="24" height="2.5" fill="url(#o223)"/><rect x="1265" y="534" width="19" height="2.5" fill="url(#o224)"/><rect x="1267" y="536" width="15" height="2.5" fill="url(#o225)"/><rect x="1270" y="538" width="10" height="2.5" fill="url(#o226)"/><g clip-path="url(#ct)"><rect x="1141" y="105" width="16" height="2.5" fill="url(#i0)"/><rect x="1141" y="107" width="37" height="2.5" fill="url(#i1)"/><rect x="1141" y="109" width="58" height="2.5" fill="url(#i2)"/><rect x="1141" y="111" width="80" height="2.5" fill="url(#i3)"/><rect x="1142" y="113" width="100" height="2.5" fill="url(#i4)"/><rect x="1142" y="115" width="121" height="2.5" fill="url(#i5)"/><rect x="1142" y="117" width="142" height="2.5" fill="url(#i6)"/><rect x="1143" y="119" width="163" height="2.5" fill="url(#i7)"/><rect x="1143" y="121" width="184" height="2.5" fill="url(#i8)"/><rect x="1143" y="123" width="205" height="2.5" fill="url(#i9)"/><rect x="1144" y="125" width="226" height="2.5" fill="url(#i10)"/><rect x="1144" y="127" width="247" height="2.5" fill="url(#i11)"/><rect x="1144" y="129" width="268" height="2.5" fill="url(#i12)"/><rect x="1145" y="131" width="288" height="2.5" fill="url(#i13)"/><rect x="1145" y="133" width="310" height="2.5" fill="url(#i14)"/><rect x="1145" y="135" width="331" height="2.5" fill="url(#i15)"/><rect x="1146" y="137" width="332" height="2.5" fill="url(#i16)"/><rect x="1146" y="139" width="331" height="2.5" fill="url(#i17)"/><rect x="1146" y="141" width="329" height="2.5" fill="url(#i18)"/><rect x="1147" y="143" width="326" height="2.5" fill="url(#i19)"/><rect x="1147" y="145" width="324" height="2.5" fill="url(#i20)"/><rect x="1147" y="147" width="322" height="2.5" fill="url(#i21)"/><rect x="1148" y="149" width="319" height="2.5" fill="url(#i22)"/><rect x="1148" y="151" width="317" height="2.5" fill="url(#i23)"/><rect x="1148" y="153" width="315" height="2.5" fill="url(#i24)"/><rect x="1149" y="155" width="312" height="2.5" fill="url(#i25)"/><rect x="1149" y="157" width="310" height="2.5" fill="url(#i26)"/><rect x="1149" y="159" width="308" height="2.5" fill="url(#i27)"/><rect x="1150" y="161" width="305" height="2.5" fill="url(#i28)"/><rect x="1150" y="163" width="303" height="2.5" fill="url(#i29)"/><rect x="1150" y="165" width="301" height="2.5" fill="url(#i30)"/><rect x="1150" y="167" width="299" height="2.5" fill="url(#i31)"/><rect x="1151" y="169" width="296" height="2.5" fill="url(#i32)"/><rect x="1151" y="171" width="294" height="2.5" fill="url(#i33)"/><rect x="1151" y="173" width="292" height="2.5" fill="url(#i34)"/><rect x="1152" y="175" width="290" height="2.5" fill="url(#i35)"/><rect x="1152" y="177" width="288" height="2.5" fill="url(#i36)"/><rect x="1152" y="179" width="286" height="2.5" fill="url(#i37)"/><rect x="1153" y="181" width="283" height="2.5" fill="url(#i38)"/><rect x="1153" y="183" width="281" height="2.5" fill="url(#i39)"/><rect x="1153" y="185" width="279" height="2.5" fill="url(#i40)"/><rect x="1154" y="187" width="276" height="2.5" fill="url(#i41)"/><rect x="1154" y="189" width="274" height="2.5" fill="url(#i42)"/><rect x="1154" y="191" width="272" height="2.5" fill="url(#i43)"/><rect x="1155" y="193" width="269" height="2.5" fill="url(#i44)"/><rect x="1155" y="195" width="267" height="2.5" fill="url(#i45)"/><rect x="1155" y="197" width="265" height="2.5" fill="url(#i46)"/><rect x="1156" y="199" width="262" height="2.5" fill="url(#i47)"/><rect x="1156" y="201" width="260" height="2.5" fill="url(#i48)"/><rect x="1156" y="203" width="258" height="2.5" fill="url(#i49)"/><rect x="1157" y="205" width="255" height="2.5" fill="url(#i50)"/><rect x="1157" y="207" width="253" height="2.5" fill="url(#i51)"/><rect x="1157" y="209" width="251" height="2.5" fill="url(#i52)"/><rect x="1158" y="211" width="248" height="2.5" fill="url(#i53)"/><rect x="1158" y="213" width="246" height="2.5" fill="url(#i54)"/><rect x="1158" y="215" width="244" height="2.5" fill="url(#i55)"/><rect x="1159" y="217" width="242" height="2.5" fill="url(#i56)"/><rect x="1159" y="219" width="240" height="2.5" fill="url(#i57)"/><rect x="1159" y="221" width="238" height="2.5" fill="url(#i58)"/><rect x="1160" y="223" width="235" height="2.5" fill="url(#i59)"/><rect x="1160" y="225" width="233" height="2.5" fill="url(#i60)"/><rect x="1160" y="227" width="231" height="2.5" fill="url(#i61)"/><rect x="1160" y="229" width="229" height="2.5" fill="url(#i62)"/><rect x="1161" y="231" width="226" height="2.5" fill="url(#i63)"/><rect x="1161" y="233" width="224" height="2.5" fill="url(#i64)"/><rect x="1161" y="235" width="222" height="2.5" fill="url(#i65)"/><rect x="1162" y="237" width="219" height="2.5" fill="url(#i66)"/><rect x="1162" y="239" width="217" height="2.5" fill="url(#i67)"/><rect x="1162" y="241" width="215" height="2.5" fill="url(#i68)"/><rect x="1163" y="243" width="212" height="2.5" fill="url(#i69)"/><rect x="1163" y="245" width="210" height="2.5" fill="url(#i70)"/><rect x="1163" y="247" width="208" height="2.5" fill="url(#i71)"/><rect x="1164" y="249" width="205" height="2.5" fill="url(#i72)"/><rect x="1164" y="251" width="203" height="2.5" fill="url(#i73)"/><rect x="1164" y="253" width="201" height="2.5" fill="url(#i74)"/><rect x="1165" y="255" width="198" height="2.5" fill="url(#i75)"/><rect x="1165" y="257" width="196" height="2.5" fill="url(#i76)"/><rect x="1165" y="259" width="195" height="2.5" fill="url(#i77)"/><rect x="1166" y="261" width="192" height="2.5" fill="url(#i78)"/><rect x="1166" y="263" width="190" height="2.5" fill="url(#i79)"/><rect x="1166" y="265" width="188" height="2.5" fill="url(#i80)"/><rect x="1167" y="267" width="185" height="2.5" fill="url(#i81)"/><rect x="1167" y="269" width="183" height="2.5" fill="url(#i82)"/><rect x="1167" y="271" width="181" height="2.5" fill="url(#i83)"/><rect x="1168" y="273" width="178" height="2.5" fill="url(#i84)"/><rect x="1168" y="275" width="176" height="2.5" fill="url(#i85)"/><rect x="1168" y="277" width="174" height="2.5" fill="url(#i86)"/><rect x="1169" y="279" width="171" height="2.5" fill="url(#i87)"/><rect x="1169" y="281" width="169" height="2.5" fill="url(#i88)"/><rect x="1169" y="283" width="167" height="2.5" fill="url(#i89)"/><rect x="1170" y="285" width="164" height="2.5" fill="url(#i90)"/><rect x="1170" y="287" width="162" height="2.5" fill="url(#i91)"/><rect x="1170" y="289" width="160" height="2.5" fill="url(#i92)"/><rect x="1170" y="291" width="158" height="2.5" fill="url(#i93)"/><rect x="1171" y="293" width="155" height="2.5" fill="url(#i94)"/><rect x="1171" y="295" width="153" height="2.5" fill="url(#i95)"/><rect x="1171" y="297" width="151" height="2.5" fill="url(#i96)"/><rect x="1172" y="299" width="148" height="2.5" fill="url(#i97)"/><rect x="1172" y="301" width="147" height="2.5" fill="url(#i98)"/><rect x="1172" y="303" width="145" height="2.5" fill="url(#i99)"/><rect x="1173" y="305" width="142" height="2.5" fill="url(#i100)"/><rect x="1173" y="307" width="140" height="2.5" fill="url(#i101)"/><rect x="1173" y="309" width="138" height="2.5" fill="url(#i102)"/><rect x="1174" y="311" width="135" height="2.5" fill="url(#i103)"/><rect x="1174" y="313" width="133" height="2.5" fill="url(#i104)"/><rect x="1174" y="315" width="131" height="2.5" fill="url(#i105)"/><rect x="1175" y="317" width="128" height="2.5" fill="url(#i106)"/><rect x="1175" y="319" width="126" height="2.5" fill="url(#i107)"/><rect x="1175" y="321" width="124" height="2.5" fill="url(#i108)"/><rect x="1176" y="323" width="121" height="2.5" fill="url(#i109)"/><rect x="1176" y="325" width="119" height="2.5" fill="url(#i110)"/><rect x="1176" y="327" width="117" height="2.5" fill="url(#i111)"/><rect x="1177" y="329" width="114" height="2.5" fill="url(#i112)"/><rect x="1177" y="331" width="112" height="2.5" fill="url(#i113)"/><rect x="1177" y="333" width="110" height="2.5" fill="url(#i114)"/><rect x="1178" y="335" width="107" height="2.5" fill="url(#i115)"/><rect x="1178" y="337" width="105" height="2.5" fill="url(#i116)"/><rect x="1178" y="339" width="103" height="2.5" fill="url(#i117)"/><rect x="1179" y="341" width="100" height="2.5" fill="url(#i118)"/><rect x="1179" y="343" width="99" height="2.5" fill="url(#i119)"/><rect x="1179" y="345" width="97" height="2.5" fill="url(#i120)"/><rect x="1180" y="347" width="94" height="2.5" fill="url(#i121)"/><rect x="1180" y="349" width="92" height="2.5" fill="url(#i122)"/><rect x="1180" y="351" width="90" height="2.5" fill="url(#i123)"/><rect x="1181" y="353" width="87" height="2.5" fill="url(#i124)"/><rect x="1181" y="355" width="85" height="2.5" fill="url(#i125)"/><rect x="1181" y="357" width="83" height="2.5" fill="url(#i126)"/><rect x="1181" y="359" width="81" height="2.5" fill="url(#i127)"/><rect x="1182" y="361" width="78" height="2.5" fill="url(#i128)"/><rect x="1182" y="363" width="76" height="2.5" fill="url(#i129)"/><rect x="1182" y="365" width="74" height="2.5" fill="url(#i130)"/><rect x="1183" y="367" width="71" height="2.5" fill="url(#i131)"/><rect x="1183" y="369" width="69" height="2.5" fill="url(#i132)"/><rect x="1183" y="371" width="67" height="2.5" fill="url(#i133)"/><rect x="1184" y="373" width="64" height="2.5" fill="url(#i134)"/><rect x="1184" y="375" width="62" height="2.5" fill="url(#i135)"/><rect x="1184" y="377" width="60" height="2.5" fill="url(#i136)"/><rect x="1185" y="379" width="57" height="2.5" fill="url(#i137)"/><rect x="1185" y="381" width="55" height="2.5" fill="url(#i138)"/><rect x="1185" y="383" width="53" height="2.5" fill="url(#i139)"/><rect x="1186" y="385" width="50" height="2.5" fill="url(#i140)"/><rect x="1186" y="387" width="49" height="2.5" fill="url(#i141)"/><rect x="1186" y="389" width="47" height="2.5" fill="url(#i142)"/><rect x="1187" y="391" width="44" height="2.5" fill="url(#i143)"/><rect x="1187" y="393" width="42" height="2.5" fill="url(#i144)"/><rect x="1187" y="395" width="40" height="2.5" fill="url(#i145)"/><rect x="1188" y="397" width="37" height="2.5" fill="url(#i146)"/><rect x="1188" y="399" width="35" height="2.5" fill="url(#i147)"/><rect x="1188" y="401" width="33" height="2.5" fill="url(#i148)"/><rect x="1189" y="403" width="30" height="2.5" fill="url(#i149)"/><rect x="1189" y="405" width="28" height="2.5" fill="url(#i150)"/><rect x="1189" y="407" width="26" height="2.5" fill="url(#i151)"/><rect x="1190" y="409" width="23" height="2.5" fill="url(#i152)"/><rect x="1190" y="411" width="21" height="2.5" fill="url(#i153)"/><rect x="1190" y="413" width="19" height="2.5" fill="url(#i154)"/><rect x="1191" y="415" width="16" height="2.5" fill="url(#i155)"/><rect x="1191" y="417" width="14" height="2.5" fill="url(#i156)"/><rect x="1191" y="419" width="12" height="2.5" fill="url(#i157)"/><rect x="1191" y="421" width="10" height="2.5" fill="url(#i158)"/><rect x="1192" y="423" width="7" height="2.5" fill="url(#i159)"/><rect x="1192" y="425" width="5" height="2.5" fill="url(#i160)"/><rect x="1192" y="427" width="3" height="1.5" fill="url(#i161)"/></g></g></g><path d="M1013.5,76.5H1632.8V553.5" fill="none" stroke="#a0a0a0" stroke-width="1.6"/><path d="M1013.5,76V553.5H1633.3" fill="none" stroke="#b4b4b4" stroke-width="1.8"/><text x="1306" y="72.5" font-size="13.72" fill="#d8d8d8" text-anchor="middle" textLength="80.2" lengthAdjust="spacingAndGlyphs">CIE 1976 u'v'</text><text x="1007.5" y="558.6" font-size="13.72" fill="#d8d8d8" text-anchor="end" textLength="7.9" lengthAdjust="spacingAndGlyphs">0</text><text x="1013.1" y="572.5" font-size="13.72" fill="#d8d8d8" text-anchor="middle" textLength="7.9" lengthAdjust="spacingAndGlyphs">0</text><text x="1007.5" y="518.9" font-size="13.72" fill="#d8d8d8" text-anchor="end" textLength="27.4" lengthAdjust="spacingAndGlyphs">0,05</text><text x="1064.68" y="572.5" font-size="13.72" fill="#d8d8d8" text-anchor="middle" textLength="27.4" lengthAdjust="spacingAndGlyphs">0,05</text><text x="1007.5" y="479.2" font-size="13.72" fill="#d8d8d8" text-anchor="end" textLength="19.6" lengthAdjust="spacingAndGlyphs">0,1</text><text x="1116.27" y="572.5" font-size="13.72" fill="#d8d8d8" text-anchor="middle" textLength="19.6" lengthAdjust="spacingAndGlyphs">0,1</text><text x="1007.5" y="439.5" font-size="13.72" fill="#d8d8d8" text-anchor="end" textLength="27.4" lengthAdjust="spacingAndGlyphs">0,15</text><text x="1167.86" y="572.5" font-size="13.72" fill="#d8d8d8" text-anchor="middle" textLength="27.4" lengthAdjust="spacingAndGlyphs">0,15</text><text x="1007.5" y="399.8" font-size="13.72" fill="#d8d8d8" text-anchor="end" textLength="19.6" lengthAdjust="spacingAndGlyphs">0,2</text><text x="1219.44" y="572.5" font-size="13.72" fill="#d8d8d8" text-anchor="middle" textLength="19.6" lengthAdjust="spacingAndGlyphs">0,2</text><text x="1007.5" y="360.1" font-size="13.72" fill="#d8d8d8" text-anchor="end" textLength="27.4" lengthAdjust="spacingAndGlyphs">0,25</text><text x="1271.03" y="572.5" font-size="13.72" fill="#d8d8d8" text-anchor="middle" textLength="27.4" lengthAdjust="spacingAndGlyphs">0,25</text><text x="1007.5" y="320.4" font-size="13.72" fill="#d8d8d8" text-anchor="end" textLength="19.6" lengthAdjust="spacingAndGlyphs">0,3</text><text x="1322.61" y="572.5" font-size="13.72" fill="#d8d8d8" text-anchor="middle" textLength="19.6" lengthAdjust="spacingAndGlyphs">0,3</text><text x="1007.5" y="280.7" font-size="13.72" fill="#d8d8d8" text-anchor="end" textLength="27.4" lengthAdjust="spacingAndGlyphs">0,35</text><text x="1374.2" y="572.5" font-size="13.72" fill="#d8d8d8" text-anchor="middle" textLength="27.4" lengthAdjust="spacingAndGlyphs">0,35</text><text x="1007.5" y="241" font-size="13.72" fill="#d8d8d8" text-anchor="end" textLength="19.6" lengthAdjust="spacingAndGlyphs">0,4</text><text x="1425.78" y="572.5" font-size="13.72" fill="#d8d8d8" text-anchor="middle" textLength="19.6" lengthAdjust="spacingAndGlyphs">0,4</text><text x="1007.5" y="201.3" font-size="13.72" fill="#d8d8d8" text-anchor="end" textLength="27.4" lengthAdjust="spacingAndGlyphs">0,45</text><text x="1477.37" y="572.5" font-size="13.72" fill="#d8d8d8" text-anchor="middle" textLength="27.4" lengthAdjust="spacingAndGlyphs">0,45</text><text x="1007.5" y="161.6" font-size="13.72" fill="#d8d8d8" text-anchor="end" textLength="19.6" lengthAdjust="spacingAndGlyphs">0,5</text><text x="1528.95" y="572.5" font-size="13.72" fill="#d8d8d8" text-anchor="middle" textLength="19.6" lengthAdjust="spacingAndGlyphs">0,5</text><text x="1007.5" y="121.9" font-size="13.72" fill="#d8d8d8" text-anchor="end" textLength="27.4" lengthAdjust="spacingAndGlyphs">0,55</text><text x="1580.54" y="572.5" font-size="13.72" fill="#d8d8d8" text-anchor="middle" textLength="27.4" lengthAdjust="spacingAndGlyphs">0,55</text><path d="M1008,553.4H1013M1013.1,553V559M1008,513.7H1013M1064.7,553V559M1008,474.0H1013M1116.3,553V559M1008,434.3H1013M1167.9,553V559M1008,394.6H1013M1219.4,553V559M1008,354.9H1013M1271.0,553V559M1008,315.2H1013M1322.6,553V559M1008,275.5H1013M1374.2,553V559M1008,235.8H1013M1425.8,553V559M1008,196.1H1013M1477.4,553V559M1008,156.4H1013M1529.0,553V559M1008,116.7H1013M1580.5,553V559" stroke="#d0d0d0" stroke-width="1.6" fill="none"/><g fill="#fff" fill-opacity=".08" stroke="#fff" stroke-opacity=".92" stroke-width="1.5"><rect x="1258.1" y="166.1" width="13" height="13"/><rect x="1307.8" y="157.8" width="13" height="13"/><rect x="1356.2" y="150.4" width="13" height="13"/><rect x="1408.8" y="141.4" width="13" height="13"/><rect x="1470.4" y="130.7" width="13" height="13"/><rect x="1189.9" y="153.5" width="13" height="13"/><rect x="1173.6" y="137.6" width="13" height="13"/><rect x="1158.9" y="123.0" width="13" height="13"/><rect x="1146.9" y="111.0" width="13" height="13"/><rect x="1135.6" y="99.3" width="13" height="13"/><rect x="1207.7" y="203.4" width="13" height="13"/><rect x="1204.9" y="239.1" width="13" height="13"/><rect x="1200.9" y="282.5" width="13" height="13"/><rect x="1195.9" y="337.3" width="13" height="13"/><rect x="1187.5" y="420.5" width="13" height="13"/><rect x="1198.0" y="176.1" width="13" height="13"/><rect x="1185.6" y="178.2" width="13" height="13"/><rect x="1173.4" y="180.2" width="13" height="13"/><rect x="1161.3" y="182.2" width="13" height="13"/><rect x="1149.3" y="184.2" width="13" height="13"/><rect x="1227.4" y="189.8" width="13" height="13"/><rect x="1245.9" y="208.4" width="13" height="13"/><rect x="1264.5" y="228.4" width="13" height="13"/><rect x="1289.4" y="253.6" width="13" height="13"/><rect x="1320.7" y="284.1" width="13" height="13"/><rect x="1212.0" y="157.6" width="13" height="13"/><rect x="1213.4" y="142.9" width="13" height="13"/><rect x="1214.6" y="129.7" width="13" height="13"/><rect x="1215.7" y="117.7" width="13" height="13"/><rect x="1218.0" y="106.9" width="13" height="13"/></g><rect x="1210.5" y="174.1" width="13" height="13" fill="#fff" fill-opacity=".75" stroke="#000" stroke-width="1.6"/><g stroke="#000" stroke-width="1.1"><circle cx="1189.1" cy="166.3" r="4.1" fill="#8eb78e"/><circle cx="1165.1" cy="134.2" r="4.1" fill="#77b577"/><circle cx="1151.0" cy="115.1" r="4.1" fill="#5bb35b"/><circle cx="1144.3" cy="107.0" r="4.1" fill="#3ab03a"/><circle cx="1140.8" cy="103.5" r="4.1" fill="#16ad16"/><circle cx="1198.4" cy="195.2" r="4.1" fill="#8eb7b7"/><circle cx="1186.5" cy="199.3" r="4.1" fill="#77b5b5"/><circle cx="1174.4" cy="201.9" r="4.1" fill="#5bb3b3"/><circle cx="1165.4" cy="203.3" r="4.1" fill="#3ab0b0"/><circle cx="1157.0" cy="205.4" r="4.1" fill="#16adad"/><circle cx="1207.4" cy="229.4" r="4.1" fill="#8e8eb7"/><circle cx="1203.6" cy="286.3" r="4.1" fill="#7777b5"/><circle cx="1199.7" cy="341.7" r="4.1" fill="#5b5bb3"/><circle cx="1195.6" cy="388.4" r="4.1" fill="#3a3ab0"/><circle cx="1194.3" cy="420.0" r="4.1" fill="#1616ad"/><circle cx="1224.4" cy="212.3" r="4.1" fill="#b78eb7"/><circle cx="1244.4" cy="237.2" r="4.1" fill="#b577b5"/><circle cx="1264.6" cy="263.2" r="4.1" fill="#b35bb3"/><circle cx="1285.5" cy="291.5" r="4.1" fill="#b03ab0"/><circle cx="1298.5" cy="308.3" r="4.1" fill="#ad16ad"/><circle cx="1260.3" cy="180.2" r="4.1" fill="#b78e8e"/><circle cx="1338.1" cy="163.4" r="4.1" fill="#b57777"/><circle cx="1397.3" cy="149.2" r="4.1" fill="#b35b5b"/><circle cx="1435.3" cy="140.1" r="4.1" fill="#b03a3a"/><circle cx="1464.5" cy="133.4" r="4.1" fill="#ad1616"/><circle cx="1211.3" cy="173.3" r="4.1" fill="#b7b78e"/><circle cx="1212.7" cy="152.4" r="4.1" fill="#b5b577"/><circle cx="1214.1" cy="134.0" r="4.1" fill="#b3b35b"/><circle cx="1215.1" cy="119.7" r="4.1" fill="#b0b03a"/><circle cx="1215.9" cy="109.5" r="4.1" fill="#adad16"/><circle cx="1211.4" cy="191.5" r="4.1" fill="#fff"/></g><g clip-path="url(#ci)"><rect x="1421.4" y="406.3" width="205.2" height="3.5" fill="url(#n0)"/><rect x="1421.4" y="409.3" width="205.2" height="3.5" fill="url(#n1)"/><rect x="1421.4" y="412.3" width="205.2" height="3.5" fill="url(#n2)"/><rect x="1421.4" y="415.3" width="205.2" height="3.5" fill="url(#n3)"/><rect x="1421.4" y="418.3" width="205.2" height="3.5" fill="url(#n4)"/><rect x="1421.4" y="421.3" width="205.2" height="3.5" fill="url(#n5)"/><rect x="1421.4" y="424.3" width="205.2" height="3.5" fill="url(#n6)"/><rect x="1421.4" y="427.3" width="205.2" height="3.5" fill="url(#n7)"/><rect x="1421.4" y="430.3" width="205.2" height="3.5" fill="url(#n8)"/><rect x="1421.4" y="433.3" width="205.2" height="3.5" fill="url(#n9)"/><rect x="1421.4" y="436.3" width="205.2" height="3.5" fill="url(#n10)"/><rect x="1421.4" y="439.3" width="205.2" height="3.5" fill="url(#n11)"/><rect x="1421.4" y="442.3" width="205.2" height="3.5" fill="url(#n12)"/><rect x="1421.4" y="445.3" width="205.2" height="3.5" fill="url(#n13)"/><rect x="1421.4" y="448.3" width="205.2" height="3.5" fill="url(#n14)"/><rect x="1421.4" y="451.3" width="205.2" height="3.5" fill="url(#n15)"/><rect x="1421.4" y="454.3" width="205.2" height="3.5" fill="url(#n16)"/><rect x="1421.4" y="457.3" width="205.2" height="3.5" fill="url(#n17)"/><rect x="1421.4" y="460.3" width="205.2" height="3.5" fill="url(#n18)"/><rect x="1421.4" y="463.3" width="205.2" height="3.5" fill="url(#n19)"/><rect x="1421.4" y="466.3" width="205.2" height="3.5" fill="url(#n20)"/><rect x="1421.4" y="469.3" width="205.2" height="3.5" fill="url(#n21)"/><rect x="1421.4" y="472.3" width="205.2" height="3.5" fill="url(#n22)"/><rect x="1421.4" y="475.3" width="205.2" height="3.5" fill="url(#n23)"/><rect x="1421.4" y="478.3" width="205.2" height="3.5" fill="url(#n24)"/><rect x="1421.4" y="481.3" width="205.2" height="3.5" fill="url(#n25)"/><rect x="1421.4" y="484.3" width="205.2" height="3.5" fill="url(#n26)"/><rect x="1421.4" y="487.3" width="205.2" height="3.5" fill="url(#n27)"/><rect x="1421.4" y="490.3" width="205.2" height="3.5" fill="url(#n28)"/><rect x="1421.4" y="493.3" width="205.2" height="3.5" fill="url(#n29)"/><rect x="1421.4" y="496.3" width="205.2" height="3.5" fill="url(#n30)"/><rect x="1421.4" y="499.3" width="205.2" height="3.5" fill="url(#n31)"/><rect x="1421.4" y="502.3" width="205.2" height="3.5" fill="url(#n32)"/><rect x="1421.4" y="505.3" width="205.2" height="3.5" fill="url(#n33)"/><rect x="1421.4" y="508.3" width="205.2" height="3.5" fill="url(#n34)"/><rect x="1421.4" y="511.3" width="205.2" height="3.5" fill="url(#n35)"/><rect x="1421.4" y="514.3" width="205.2" height="3.5" fill="url(#n36)"/><rect x="1421.4" y="517.3" width="205.2" height="3.5" fill="url(#n37)"/><rect x="1421.4" y="520.3" width="205.2" height="3.5" fill="url(#n38)"/><rect x="1421.4" y="523.3" width="205.2" height="3.5" fill="url(#n39)"/><rect x="1421.4" y="526.3" width="205.2" height="3.5" fill="url(#n40)"/><rect x="1421.4" y="529.3" width="205.2" height="3.5" fill="url(#n41)"/><rect x="1421.4" y="532.3" width="205.2" height="3.5" fill="url(#n42)"/><rect x="1421.4" y="535.3" width="205.2" height="3.5" fill="url(#n43)"/><rect x="1421.4" y="538.3" width="205.2" height="3.5" fill="url(#n44)"/><rect x="1421.4" y="541.3" width="205.2" height="3.5" fill="url(#n45)"/><rect x="1421.4" y="544.3" width="205.2" height="0.8" fill="url(#n46)"/><g clip-path="url(#cj)"><rect x="1421.4" y="406.3" width="205.2" height="3.5" fill="url(#m0)"/><rect x="1421.4" y="409.3" width="205.2" height="3.5" fill="url(#m1)"/><rect x="1421.4" y="412.3" width="205.2" height="3.5" fill="url(#m2)"/><rect x="1421.4" y="415.3" width="205.2" height="3.5" fill="url(#m3)"/><rect x="1421.4" y="418.3" width="205.2" height="3.5" fill="url(#m4)"/><rect x="1421.4" y="421.3" width="205.2" height="3.5" fill="url(#m5)"/><rect x="1421.4" y="424.3" width="205.2" height="3.5" fill="url(#m6)"/><rect x="1421.4" y="427.3" width="205.2" height="3.5" fill="url(#m7)"/><rect x="1421.4" y="430.3" width="205.2" height="3.5" fill="url(#m8)"/><rect x="1421.4" y="433.3" width="205.2" height="3.5" fill="url(#m9)"/><rect x="1421.4" y="436.3" width="205.2" height="3.5" fill="url(#m10)"/><rect x="1421.4" y="439.3" width="205.2" height="3.5" fill="url(#m11)"/><rect x="1421.4" y="442.3" width="205.2" height="3.5" fill="url(#m12)"/><rect x="1421.4" y="445.3" width="205.2" height="3.5" fill="url(#m13)"/><rect x="1421.4" y="448.3" width="205.2" height="3.5" fill="url(#m14)"/><rect x="1421.4" y="451.3" width="205.2" height="3.5" fill="url(#m15)"/><rect x="1421.4" y="454.3" width="205.2" height="3.5" fill="url(#m16)"/><rect x="1421.4" y="457.3" width="205.2" height="3.5" fill="url(#m17)"/><rect x="1421.4" y="460.3" width="205.2" height="3.5" fill="url(#m18)"/><rect x="1421.4" y="463.3" width="205.2" height="3.5" fill="url(#m19)"/><rect x="1421.4" y="466.3" width="205.2" height="3.5" fill="url(#m20)"/><rect x="1421.4" y="469.3" width="205.2" height="3.5" fill="url(#m21)"/><rect x="1421.4" y="472.3" width="205.2" height="3.5" fill="url(#m22)"/><rect x="1421.4" y="475.3" width="205.2" height="3.5" fill="url(#m23)"/><rect x="1421.4" y="478.3" width="205.2" height="3.5" fill="url(#m24)"/><rect x="1421.4" y="481.3" width="205.2" height="3.5" fill="url(#m25)"/><rect x="1421.4" y="484.3" width="205.2" height="3.5" fill="url(#m26)"/><rect x="1421.4" y="487.3" width="205.2" height="3.5" fill="url(#m27)"/><rect x="1421.4" y="490.3" width="205.2" height="3.5" fill="url(#m28)"/><rect x="1421.4" y="493.3" width="205.2" height="3.5" fill="url(#m29)"/><rect x="1421.4" y="496.3" width="205.2" height="3.5" fill="url(#m30)"/><rect x="1421.4" y="499.3" width="205.2" height="3.5" fill="url(#m31)"/><rect x="1421.4" y="502.3" width="205.2" height="3.5" fill="url(#m32)"/><rect x="1421.4" y="505.3" width="205.2" height="3.5" fill="url(#m33)"/><rect x="1421.4" y="508.3" width="205.2" height="3.5" fill="url(#m34)"/><rect x="1421.4" y="511.3" width="205.2" height="3.5" fill="url(#m35)"/><rect x="1421.4" y="514.3" width="205.2" height="3.5" fill="url(#m36)"/><rect x="1421.4" y="517.3" width="205.2" height="3.5" fill="url(#m37)"/><rect x="1421.4" y="520.3" width="205.2" height="3.5" fill="url(#m38)"/><rect x="1421.4" y="523.3" width="205.2" height="3.5" fill="url(#m39)"/><rect x="1421.4" y="526.3" width="205.2" height="3.5" fill="url(#m40)"/><rect x="1421.4" y="529.3" width="205.2" height="3.5" fill="url(#m41)"/><rect x="1421.4" y="532.3" width="205.2" height="3.5" fill="url(#m42)"/><rect x="1421.4" y="535.3" width="205.2" height="3.5" fill="url(#m43)"/><rect x="1421.4" y="538.3" width="205.2" height="3.5" fill="url(#m44)"/><rect x="1421.4" y="541.3" width="205.2" height="3.5" fill="url(#m45)"/><rect x="1421.4" y="544.3" width="205.2" height="0.8" fill="url(#m46)"/></g></g><rect x="1421.4" y="406.3" width="205.2" height="138.3" fill="none" stroke="#8e8e84" stroke-width="1.5"/><rect x="1517.2" y="468.2" width="13" height="13" fill="#fff" fill-opacity=".12" stroke="#fff" stroke-opacity=".9" stroke-width="1.5"/><g stroke="#000" stroke-width="1.1"><circle cx="1510.3" cy="422.6" r="4.1" fill="#adad16"/><circle cx="1427.4" cy="519.7" r="4.1" fill="#b0b03a"/></g><rect x="70.5" y="143.5" width="302" height="400.8" fill="#252525"/><path d="M110.6,143.5V544.3M150.8,143.5V544.3M190.9,143.5V544.3M231.1,143.5V544.3M271.2,143.5V544.3M311.3,143.5V544.3M351.5,143.5V544.3" stroke="#989898" stroke-width="1.4" fill="none"/><path d="M70.5,143.5H372.5V544.3" fill="none" stroke="#a8a8a8" stroke-width="1.5"/><g stroke="#000" stroke-width="1.45"><rect x="70.7" y="151.1" width="77.4" height="5.5" fill="url(#bR0)"/><rect x="70.7" y="159.0" width="46.3" height="5.5" fill="url(#bG0)"/><rect x="70.7" y="166.9" width="73.0" height="5.5" fill="url(#bB0)"/><rect x="70.7" y="174.9" width="140.8" height="5.5" fill="url(#bC0)"/><rect x="70.7" y="182.8" width="81.4" height="5.5" fill="url(#bM0)"/><rect x="70.7" y="190.7" width="51.8" height="5.5" fill="url(#bY0)"/><rect x="70.7" y="217.8" width="115.3" height="5.5" fill="url(#bR1)"/><rect x="70.7" y="225.7" width="84.0" height="5.5" fill="url(#bG1)"/><rect x="70.7" y="233.6" width="100.5" height="5.5" fill="url(#bB1)"/><rect x="70.7" y="241.6" width="139.6" height="5.5" fill="url(#bC1)"/><rect x="70.7" y="249.5" width="103.7" height="5.5" fill="url(#bM1)"/><rect x="70.7" y="257.4" width="60.4" height="5.5" fill="url(#bY1)"/><rect x="70.7" y="284.5" width="136.8" height="5.5" fill="url(#bR2)"/><rect x="70.7" y="292.4" width="103.3" height="5.5" fill="url(#bG2)"/><rect x="70.7" y="300.3" width="152.4" height="5.5" fill="url(#bB2)"/><rect x="70.7" y="308.3" width="144.4" height="5.5" fill="url(#bC2)"/><rect x="70.7" y="316.2" width="123.3" height="5.5" fill="url(#bM2)"/><rect x="70.7" y="324.1" width="58.2" height="5.5" fill="url(#bY2)"/><rect x="70.7" y="351.2" width="139.6" height="5.5" fill="url(#bR3)"/><rect x="70.7" y="359.1" width="92.0" height="5.5" fill="url(#bG3)"/><rect x="70.7" y="367.0" width="160.5" height="5.5" fill="url(#bB3)"/><rect x="70.7" y="375.0" width="151.4" height="5.5" fill="url(#bC3)"/><rect x="70.7" y="382.9" width="128.3" height="5.5" fill="url(#bM3)"/><rect x="70.7" y="390.8" width="75.8" height="5.5" fill="url(#bY3)"/><rect x="70.7" y="417.9" width="113.1" height="5.5" fill="url(#bR4)"/><rect x="70.7" y="425.8" width="92.0" height="5.5" fill="url(#bG4)"/><rect x="70.7" y="433.7" width="127.3" height="5.5" fill="url(#bB4)"/><rect x="70.7" y="441.7" width="160.5" height="5.5" fill="url(#bC4)"/><rect x="70.7" y="449.6" width="143.4" height="5.5" fill="url(#bM4)"/><rect x="70.7" y="457.5" width="134.7" height="5.5" fill="url(#bY4)"/><rect x="70.7" y="532.1" width="173.3" height="5.5" fill="url(#bW)"/></g><path d="M70.5,143.0V544.3H373.0" fill="none" stroke="#c8c8c8" stroke-width="1.7"/><path d="M64.5,144.0H70.5M64.5,210.7H70.5M64.5,277.4H70.5M64.5,344.1H70.5M64.5,410.8H70.5M64.5,477.5H70.5M64.5,544.2H70.5M70.5,544.3V549.8M110.6,544.3V549.8M150.8,544.3V549.8M190.9,544.3V549.8M231.1,544.3V549.8M271.2,544.3V549.8M311.3,544.3V549.8M351.5,544.3V549.8" stroke="#d0d0d0" stroke-width="1.6" fill="none"/><text x="70" y="182.55" font-size="13.72" fill="#d8d8d8" text-anchor="end" textLength="34.6" lengthAdjust="spacingAndGlyphs">100%</text><text x="70" y="249.25" font-size="13.72" fill="#d8d8d8" text-anchor="end" textLength="26.8" lengthAdjust="spacingAndGlyphs">80%</text><text x="70" y="315.95" font-size="13.72" fill="#d8d8d8" text-anchor="end" textLength="26.8" lengthAdjust="spacingAndGlyphs">60%</text><text x="70" y="382.65" font-size="13.72" fill="#d8d8d8" text-anchor="end" textLength="26.8" lengthAdjust="spacingAndGlyphs">40%</text><text x="70" y="449.35" font-size="13.72" fill="#d8d8d8" text-anchor="end" textLength="26.8" lengthAdjust="spacingAndGlyphs">20%</text><text x="70" y="516.05" font-size="13.72" fill="#d8d8d8" text-anchor="end" textLength="23.6" lengthAdjust="spacingAndGlyphs">100</text><text x="70.5" y="564.5" font-size="13.72" fill="#d8d8d8" text-anchor="middle" textLength="7.9" lengthAdjust="spacingAndGlyphs">0</text><text x="110.64" y="564.5" font-size="13.72" fill="#d8d8d8" text-anchor="middle" textLength="7.9" lengthAdjust="spacingAndGlyphs">2</text><text x="150.78" y="564.5" font-size="13.72" fill="#d8d8d8" text-anchor="middle" textLength="7.9" lengthAdjust="spacingAndGlyphs">4</text><text x="190.92" y="564.5" font-size="13.72" fill="#d8d8d8" text-anchor="middle" textLength="7.9" lengthAdjust="spacingAndGlyphs">6</text><text x="231.06" y="564.5" font-size="13.72" fill="#d8d8d8" text-anchor="middle" textLength="7.9" lengthAdjust="spacingAndGlyphs">8</text><text x="271.2" y="564.5" font-size="13.72" fill="#d8d8d8" text-anchor="middle" textLength="15.7" lengthAdjust="spacingAndGlyphs">10</text><text x="311.34" y="564.5" font-size="13.72" fill="#d8d8d8" text-anchor="middle" textLength="15.7" lengthAdjust="spacingAndGlyphs">12</text><text x="351.48" y="564.5" font-size="13.72" fill="#d8d8d8" text-anchor="middle" textLength="15.7" lengthAdjust="spacingAndGlyphs">14</text><text x="204" y="138.7" font-size="13.72" fill="#d8d8d8" text-anchor="middle" textLength="75.7" lengthAdjust="spacingAndGlyphs">DeltaE 2000</text><rect x="423.3" y="78.8" width="140.1" height="305.7" fill="#252525"/><path d="M423.3,129.8H563.4M423.3,180.7H563.4M423.3,231.6H563.4M423.3,282.6H563.4M423.3,333.5H563.4" stroke="#8c8c8c" stroke-width="1.4" fill="none"/><path d="M423.3,78.8H563.4V384.5" fill="none" stroke="#a0a0a0" stroke-width="1.5"/><path d="M423.3,78.3V384.5H563.9" fill="none" stroke="#bdbdbd" stroke-width="1.7"/><path d="M417.8,78.8H423.3M417.8,129.8H423.3M417.8,180.7H423.3M417.8,231.6H423.3M417.8,282.6H423.3M417.8,333.5H423.3M417.8,384.5H423.3M423.3,384.5V390.0M563.4,384.5V390.0" stroke="#d0d0d0" stroke-width="1.6" fill="none"/><text x="417.8" y="85" font-size="13.72" fill="#d8d8d8" text-anchor="end" textLength="15.7" lengthAdjust="spacingAndGlyphs">15</text><text x="417.8" y="134.95" font-size="13.72" fill="#d8d8d8" text-anchor="end" textLength="15.7" lengthAdjust="spacingAndGlyphs">10</text><text x="417.8" y="185.9" font-size="13.72" fill="#d8d8d8" text-anchor="end" textLength="7.9" lengthAdjust="spacingAndGlyphs">5</text><text x="417.8" y="236.85" font-size="13.72" fill="#d8d8d8" text-anchor="end" textLength="7.9" lengthAdjust="spacingAndGlyphs">0</text><text x="417.8" y="287.8" font-size="13.72" fill="#d8d8d8" text-anchor="end" textLength="12.6" lengthAdjust="spacingAndGlyphs">-5</text><text x="417.8" y="338.75" font-size="13.72" fill="#d8d8d8" text-anchor="end" textLength="20.5" lengthAdjust="spacingAndGlyphs">-10</text><text x="417.8" y="389.7" font-size="13.72" fill="#d8d8d8" text-anchor="end" textLength="20.5" lengthAdjust="spacingAndGlyphs">-15</text><text x="493.35" y="399.8" font-size="13.72" fill="#d8d8d8" text-anchor="middle" textLength="34.6" lengthAdjust="spacingAndGlyphs">100%</text><text x="480.55" y="73" font-size="13.72" fill="#d8d8d8" text-anchor="middle" textLength="39.8" lengthAdjust="spacingAndGlyphs">DeltaL</text><rect x="438.0" y="228.1" width="110.6" height="3.6" fill="url(#yb)" stroke="#000" stroke-width="1.3"/><rect x="614.3" y="78.8" width="140.2" height="305.7" fill="#252525"/><path d="M614.3,129.8H754.5M614.3,180.7H754.5M614.3,231.6H754.5M614.3,282.6H754.5M614.3,333.5H754.5" stroke="#8c8c8c" stroke-width="1.4" fill="none"/><path d="M614.3,78.8H754.5V384.5" fill="none" stroke="#a0a0a0" stroke-width="1.5"/><path d="M614.3,78.3V384.5H755.0" fill="none" stroke="#bdbdbd" stroke-width="1.7"/><path d="M608.8,78.8H614.3M608.8,129.8H614.3M608.8,180.7H614.3M608.8,231.6H614.3M608.8,282.6H614.3M608.8,333.5H614.3M608.8,384.5H614.3M614.3,384.5V390.0M754.5,384.5V390.0" stroke="#d0d0d0" stroke-width="1.6" fill="none"/><text x="608.8" y="85" font-size="13.72" fill="#d8d8d8" text-anchor="end" textLength="15.7" lengthAdjust="spacingAndGlyphs">15</text><text x="608.8" y="134.95" font-size="13.72" fill="#d8d8d8" text-anchor="end" textLength="15.7" lengthAdjust="spacingAndGlyphs">10</text><text x="608.8" y="185.9" font-size="13.72" fill="#d8d8d8" text-anchor="end" textLength="7.9" lengthAdjust="spacingAndGlyphs">5</text><text x="608.8" y="236.85" font-size="13.72" fill="#d8d8d8" text-anchor="end" textLength="7.9" lengthAdjust="spacingAndGlyphs">0</text><text x="608.8" y="287.8" font-size="13.72" fill="#d8d8d8" text-anchor="end" textLength="12.6" lengthAdjust="spacingAndGlyphs">-5</text><text x="608.8" y="338.75" font-size="13.72" fill="#d8d8d8" text-anchor="end" textLength="20.5" lengthAdjust="spacingAndGlyphs">-10</text><text x="608.8" y="389.7" font-size="13.72" fill="#d8d8d8" text-anchor="end" textLength="20.5" lengthAdjust="spacingAndGlyphs">-15</text><text x="684.4" y="399.8" font-size="13.72" fill="#d8d8d8" text-anchor="middle" textLength="34.6" lengthAdjust="spacingAndGlyphs">100%</text><text x="671.6" y="73" font-size="13.72" fill="#d8d8d8" text-anchor="middle" textLength="41.5" lengthAdjust="spacingAndGlyphs">DeltaC</text><rect x="628.7" y="148.8" width="111.0" height="82.8" fill="url(#yb)" stroke="#000" stroke-width="1.3"/><rect x="805.4" y="78.8" width="139.8" height="305.7" fill="#252525"/><path d="M805.4,129.8H945.2M805.4,180.7H945.2M805.4,231.6H945.2M805.4,282.6H945.2M805.4,333.5H945.2" stroke="#8c8c8c" stroke-width="1.4" fill="none"/><path d="M805.4,78.8H945.2V384.5" fill="none" stroke="#a0a0a0" stroke-width="1.5"/><path d="M805.4,78.3V384.5H945.7" fill="none" stroke="#bdbdbd" stroke-width="1.7"/><path d="M799.9,78.8H805.4M799.9,129.8H805.4M799.9,180.7H805.4M799.9,231.6H805.4M799.9,282.6H805.4M799.9,333.5H805.4M799.9,384.5H805.4M805.4,384.5V390.0M945.2,384.5V390.0" stroke="#d0d0d0" stroke-width="1.6" fill="none"/><text x="799.9" y="85" font-size="13.72" fill="#d8d8d8" text-anchor="end" textLength="15.7" lengthAdjust="spacingAndGlyphs">15</text><text x="799.9" y="134.95" font-size="13.72" fill="#d8d8d8" text-anchor="end" textLength="15.7" lengthAdjust="spacingAndGlyphs">10</text><text x="799.9" y="185.9" font-size="13.72" fill="#d8d8d8" text-anchor="end" textLength="7.9" lengthAdjust="spacingAndGlyphs">5</text><text x="799.9" y="236.85" font-size="13.72" fill="#d8d8d8" text-anchor="end" textLength="7.9" lengthAdjust="spacingAndGlyphs">0</text><text x="799.9" y="287.8" font-size="13.72" fill="#d8d8d8" text-anchor="end" textLength="12.6" lengthAdjust="spacingAndGlyphs">-5</text><text x="799.9" y="338.75" font-size="13.72" fill="#d8d8d8" text-anchor="end" textLength="20.5" lengthAdjust="spacingAndGlyphs">-10</text><text x="799.9" y="389.7" font-size="13.72" fill="#d8d8d8" text-anchor="end" textLength="20.5" lengthAdjust="spacingAndGlyphs">-15</text><text x="875.3" y="399.8" font-size="13.72" fill="#d8d8d8" text-anchor="middle" textLength="34.6" lengthAdjust="spacingAndGlyphs">100%</text><text x="862.5" y="73" font-size="13.72" fill="#d8d8d8" text-anchor="middle" textLength="42.9" lengthAdjust="spacingAndGlyphs">DeltaH</text><rect x="819.8" y="194.9" width="110.9" height="36.8" fill="url(#yb)" stroke="#000" stroke-width="1.3"/><rect x="392" y="416.3" width="572.5" height="157.4" fill="#000"/><rect x="412.1" y="423.2" width="96" height="128.7" fill="#bac5b8"/><rect x="412.1" y="488" width="96" height="63.9" fill="#c0c0a3" shape-rendering="crispEdges"/><rect x="412.1" y="423.2" width="96.0" height="128.7" fill="none" stroke="#e4e4e4" stroke-width="1.3"/><text x="460.1" y="565.8" font-size="10.6" fill="#fff" text-anchor="middle" textLength="21.4" lengthAdjust="spacingAndGlyphs" font-weight="bold">20%</text><rect x="523.2" y="423.2" width="96.9" height="128.7" fill="#bac694"/><rect x="523.2" y="488" width="96.9" height="63.9" fill="#c1c087" shape-rendering="crispEdges"/><rect x="523.2" y="423.2" width="96.9" height="128.7" fill="none" stroke="#e4e4e4" stroke-width="1.3"/><text x="571.65" y="565.8" font-size="10.6" fill="#fff" text-anchor="middle" textLength="21.4" lengthAdjust="spacingAndGlyphs" font-weight="bold">40%</text><rect x="635.3" y="423.2" width="96.4" height="128.7" fill="#b8c26c"/><rect x="635.3" y="488" width="96.4" height="63.9" fill="#c1bf6a" shape-rendering="crispEdges"/><rect x="635.3" y="423.2" width="96.4" height="128.7" fill="none" stroke="#e4e4e4" stroke-width="1.3"/><text x="683.5" y="565.8" font-size="10.6" fill="#fff" text-anchor="middle" textLength="21.4" lengthAdjust="spacingAndGlyphs" font-weight="bold">60%</text><rect x="747.3" y="423.2" width="96.4" height="128.7" fill="#b8c13e"/><rect x="747.3" y="488" width="96.4" height="63.9" fill="#c1bf4e" shape-rendering="crispEdges"/><rect x="747.3" y="423.2" width="96.4" height="128.7" fill="none" stroke="#e4e4e4" stroke-width="1.3"/><text x="795.5" y="565.8" font-size="10.6" fill="#fff" text-anchor="middle" textLength="21.4" lengthAdjust="spacingAndGlyphs" font-weight="bold">80%</text><rect x="859.3" y="423.2" width="95.9" height="128.7" fill="#bec300"/><rect x="859.3" y="488" width="95.9" height="63.9" fill="#c2be2c" shape-rendering="crispEdges"/><rect x="859.3" y="423.2" width="95.9" height="128.7" fill="none" stroke="#e4e4e4" stroke-width="1.3"/><text x="907.25" y="565.8" font-size="10.6" fill="#fff" text-anchor="middle" textLength="27.7" lengthAdjust="spacingAndGlyphs" font-weight="bold">100%</text><text transform="translate(404.6,451.5) rotate(-90)" font-size="10.6" font-weight="bold" fill="#fff" text-anchor="middle" textLength="33.5" lengthAdjust="spacingAndGlyphs">Actual</text><text transform="translate(404.6,523.6) rotate(-90)" font-size="10.6" font-weight="bold" fill="#fff" text-anchor="middle" textLength="33" lengthAdjust="spacingAndGlyphs">Target</text><text x="52.5" y="90.7" font-size="38.55" fill="#f2f2f2" textLength="314" lengthAdjust="spacingAndGlyphs">Saturation Sweeps</text><text x="78.4" y="617.6" font-size="25.98" fill="#f2f2f2" textLength="224.2" lengthAdjust="spacingAndGlyphs">Avg dE2000: 5,62</text><text x="73.7" y="657.3" font-size="25.98" fill="#f2f2f2" textLength="233.7" lengthAdjust="spacingAndGlyphs">Max dE2000: 8,65</text><text x="43.1" y="703.2" font-size="26.26" fill="#f2f2f2" textLength="211.4" lengthAdjust="spacingAndGlyphs">Current Reading</text><text x="43.1" y="738" font-size="24.16" fill="#f2f2f2" textLength="98.8" lengthAdjust="spacingAndGlyphs">x: 0,4161</text><text x="194.7" y="738" font-size="24.16" fill="#f2f2f2" textLength="98.8" lengthAdjust="spacingAndGlyphs">y: 0,5242</text><text x="43.1" y="777.5" font-size="24.16" fill="#f2f2f2" textLength="93.2" lengthAdjust="spacingAndGlyphs">fL: 41,76</text><text x="43.1" y="810.9" font-size="24.16" fill="#f2f2f2" textLength="153.3" lengthAdjust="spacingAndGlyphs">cd/m²: 143,07</text><rect x="370.9" y="624.9" width="245.6" height="174" fill="#252525"/><path d="M370.9,643.1H616.5M370.9,678.4H616.5M370.9,712.7H616.5M370.9,748.2H616.5M370.9,782.5H616.5" stroke="#8c8c8c" stroke-width="1.4" fill="none"/><path d="M370.9,624.9H616.5V798.9" fill="none" stroke="#a0a0a0" stroke-width="1.5"/><path d="M370.9,624.4V798.9H617.0" fill="none" stroke="#bdbdbd" stroke-width="1.7"/><path d="M365.4,643.1H370.9M365.4,678.4H370.9M365.4,712.7H370.9M365.4,748.2H370.9M365.4,782.5H370.9M370.9,798.9V804.4M616.5,798.9V804.4" stroke="#d0d0d0" stroke-width="1.6" fill="none"/><text x="365.4" y="648.3" font-size="13.72" fill="#d8d8d8" text-anchor="end" textLength="15.7" lengthAdjust="spacingAndGlyphs">40</text><text x="365.4" y="683.6" font-size="13.72" fill="#d8d8d8" text-anchor="end" textLength="15.7" lengthAdjust="spacingAndGlyphs">20</text><text x="365.4" y="717.9" font-size="13.72" fill="#d8d8d8" text-anchor="end" textLength="7.9" lengthAdjust="spacingAndGlyphs">0</text><text x="365.4" y="753.4" font-size="13.72" fill="#d8d8d8" text-anchor="end" textLength="20.5" lengthAdjust="spacingAndGlyphs">-20</text><text x="365.4" y="787.7" font-size="13.72" fill="#d8d8d8" text-anchor="end" textLength="20.5" lengthAdjust="spacingAndGlyphs">-40</text><text x="493.5" y="814.6" font-size="13.72" fill="#d8d8d8" text-anchor="middle" textLength="34.6" lengthAdjust="spacingAndGlyphs">100%</text><text x="480.5" y="619.8" font-size="13.72" fill="#d8d8d8" text-anchor="middle" textLength="79.2" lengthAdjust="spacingAndGlyphs">RGB Balance</text><g stroke="#000" stroke-width="1.3"><rect x="395.5" y="712.7" width="65.2" height="13.8" fill="url(#gr)"/><rect x="461.5" y="706.3" width="64.9" height="6.4" fill="url(#gg)"/><rect x="527.2" y="712.7" width="65.5" height="79" fill="url(#gb)"/></g><rect x="637.1" y="595.8" width="697.6" height="29" fill="url(#th)"/><rect x="637.1" y="595.8" width="18.8" height="29" fill="#000"/><rect x="655.9" y="624.8" width="678.8" height="27.75" fill="#404040"/><rect x="637.1" y="624.8" width="18.8" height="27.75" fill="#2b2b2b"/><rect x="655.9" y="652.25" width="678.8" height="27.75" fill="#808080"/><rect x="637.1" y="652.25" width="18.8" height="27.75" fill="#262626"/><rect x="655.9" y="679.7" width="678.8" height="27.75" fill="#404040"/><rect x="637.1" y="679.7" width="18.8" height="27.75" fill="#2b2b2b"/><rect x="655.9" y="707.15" width="678.8" height="27.75" fill="#808080"/><rect x="637.1" y="707.15" width="18.8" height="27.75" fill="#262626"/><rect x="655.9" y="734.6" width="678.8" height="27.75" fill="#404040"/><rect x="637.1" y="734.6" width="18.8" height="27.75" fill="#2b2b2b"/><rect x="655.9" y="762.05" width="678.8" height="27.75" fill="#808080"/><rect x="637.1" y="762.05" width="18.8" height="27.75" fill="#262626"/><rect x="655.9" y="789.5" width="678.8" height="27.75" fill="#404040"/><rect x="637.1" y="789.5" width="18.8" height="27.75" fill="#2b2b2b"/><text x="817.2" y="615.6" font-size="15.4" fill="#f4f4f4" textLength="38.2" lengthAdjust="spacingAndGlyphs">20%</text><text x="922.1" y="615.6" font-size="15.4" fill="#f4f4f4" textLength="38.2" lengthAdjust="spacingAndGlyphs">40%</text><text x="1026.6" y="615.6" font-size="15.4" fill="#f4f4f4" textLength="38.2" lengthAdjust="spacingAndGlyphs">60%</text><text x="1131.5" y="615.6" font-size="15.4" fill="#f4f4f4" textLength="38.2" lengthAdjust="spacingAndGlyphs">80%</text><text x="1236.3" y="615.6" font-size="15.4" fill="#f4f4f4" textLength="50" lengthAdjust="spacingAndGlyphs">100%</text><text x="661.9" y="645.4" font-size="15.4" fill="#f4f4f4" textLength="76.1" lengthAdjust="spacingAndGlyphs">x: CIE31</text><text x="817.2" y="645.4" font-size="15.4" fill="#f4f4f4" textLength="65.1" lengthAdjust="spacingAndGlyphs">0,3138</text><text x="922.1" y="645.4" font-size="15.4" fill="#f4f4f4" textLength="65.1" lengthAdjust="spacingAndGlyphs">0,3417</text><text x="1026.6" y="645.4" font-size="15.4" fill="#f4f4f4" textLength="65.1" lengthAdjust="spacingAndGlyphs">0,3705</text><text x="1131.5" y="645.4" font-size="15.4" fill="#f4f4f4" textLength="65.1" lengthAdjust="spacingAndGlyphs">0,3958</text><text x="1236.3" y="645.4" font-size="15.4" fill="#f4f4f4" textLength="65.1" lengthAdjust="spacingAndGlyphs">0,4161</text><text x="661.9" y="672.85" font-size="15.4" fill="#f4f4f4" textLength="76.5" lengthAdjust="spacingAndGlyphs">y: CIE31</text><text x="817.2" y="672.85" font-size="15.4" fill="#f4f4f4" textLength="65.1" lengthAdjust="spacingAndGlyphs">0,3463</text><text x="922.1" y="672.85" font-size="15.4" fill="#f4f4f4" textLength="65.1" lengthAdjust="spacingAndGlyphs">0,3949</text><text x="1026.6" y="672.85" font-size="15.4" fill="#f4f4f4" textLength="65.1" lengthAdjust="spacingAndGlyphs">0,4448</text><text x="1131.5" y="672.85" font-size="15.4" fill="#f4f4f4" textLength="65.1" lengthAdjust="spacingAndGlyphs">0,4890</text><text x="1236.3" y="672.85" font-size="15.4" fill="#f4f4f4" textLength="65.1" lengthAdjust="spacingAndGlyphs">0,5242</text><text x="661.9" y="700.3" font-size="15.4" fill="#f4f4f4" textLength="11.2" lengthAdjust="spacingAndGlyphs">Y</text><text x="817.2" y="700.3" font-size="15.4" fill="#f4f4f4" textLength="90" lengthAdjust="spacingAndGlyphs">155,2858</text><text x="922.1" y="700.3" font-size="15.4" fill="#f4f4f4" textLength="90" lengthAdjust="spacingAndGlyphs">150,7651</text><text x="1026.6" y="700.3" font-size="15.4" fill="#f4f4f4" textLength="90" lengthAdjust="spacingAndGlyphs">147,3833</text><text x="1131.5" y="700.3" font-size="15.4" fill="#f4f4f4" textLength="90" lengthAdjust="spacingAndGlyphs">144,8187</text><text x="1236.3" y="700.3" font-size="15.4" fill="#f4f4f4" textLength="90" lengthAdjust="spacingAndGlyphs">143,0670</text><text x="661.9" y="727.75" font-size="15.4" fill="#f4f4f4" textLength="138.6" lengthAdjust="spacingAndGlyphs">Target x:CIE31</text><text x="817.2" y="727.75" font-size="15.4" fill="#f4f4f4" textLength="65.1" lengthAdjust="spacingAndGlyphs">0,3344</text><text x="922.1" y="727.75" font-size="15.4" fill="#f4f4f4" textLength="65.1" lengthAdjust="spacingAndGlyphs">0,3564</text><text x="1026.6" y="727.75" font-size="15.4" fill="#f4f4f4" textLength="65.1" lengthAdjust="spacingAndGlyphs">0,3773</text><text x="1131.5" y="727.75" font-size="15.4" fill="#f4f4f4" textLength="65.1" lengthAdjust="spacingAndGlyphs">0,3969</text><text x="1236.3" y="727.75" font-size="15.4" fill="#f4f4f4" textLength="65.1" lengthAdjust="spacingAndGlyphs">0,4193</text><text x="661.9" y="755.2" font-size="15.4" fill="#f4f4f4" textLength="138.6" lengthAdjust="spacingAndGlyphs">Target y:CIE31</text><text x="817.2" y="755.2" font-size="15.4" fill="#f4f4f4" textLength="65.1" lengthAdjust="spacingAndGlyphs">0,3648</text><text x="922.1" y="755.2" font-size="15.4" fill="#f4f4f4" textLength="65.1" lengthAdjust="spacingAndGlyphs">0,4013</text><text x="1026.6" y="755.2" font-size="15.4" fill="#f4f4f4" textLength="65.1" lengthAdjust="spacingAndGlyphs">0,4358</text><text x="1131.5" y="755.2" font-size="15.4" fill="#f4f4f4" textLength="65.1" lengthAdjust="spacingAndGlyphs">0,4682</text><text x="1236.3" y="755.2" font-size="15.4" fill="#f4f4f4" textLength="65.1" lengthAdjust="spacingAndGlyphs">0,5053</text><text x="661.9" y="782.65" font-size="15.4" fill="#f4f4f4" textLength="80.5" lengthAdjust="spacingAndGlyphs">Target Y</text><text x="817.2" y="782.65" font-size="15.4" fill="#f4f4f4" textLength="90" lengthAdjust="spacingAndGlyphs">149,1199</text><text x="922.1" y="782.65" font-size="15.4" fill="#f4f4f4" textLength="90" lengthAdjust="spacingAndGlyphs">146,5024</text><text x="1026.6" y="782.65" font-size="15.4" fill="#f4f4f4" textLength="90" lengthAdjust="spacingAndGlyphs">144,4912</text><text x="1131.5" y="782.65" font-size="15.4" fill="#f4f4f4" textLength="90" lengthAdjust="spacingAndGlyphs">142,9128</text><text x="1236.3" y="782.65" font-size="15.4" fill="#f4f4f4" textLength="90" lengthAdjust="spacingAndGlyphs">141,3869</text><text x="661.9" y="810.1" font-size="15.4" fill="#f4f4f4" textLength="81.3" lengthAdjust="spacingAndGlyphs">ΔE 2000</text><text x="817.2" y="810.1" font-size="15.4" fill="#f4f4f4" textLength="65.1" lengthAdjust="spacingAndGlyphs">6,7256</text><text x="922.1" y="810.1" font-size="15.4" fill="#f4f4f4" textLength="65.1" lengthAdjust="spacingAndGlyphs">3,7935</text><text x="1026.6" y="810.1" font-size="15.4" fill="#f4f4f4" textLength="65.1" lengthAdjust="spacingAndGlyphs">2,9158</text><text x="1131.5" y="810.1" font-size="15.4" fill="#f4f4f4" textLength="65.1" lengthAdjust="spacingAndGlyphs">3,0256</text><text x="1236.3" y="810.1" font-size="15.4" fill="#f4f4f4" textLength="65.1" lengthAdjust="spacingAndGlyphs">2,5971</text><rect x="0" y="0" width="1655" height="33" fill="#222"/><rect x="1" y="0" width="115" height="33" fill="url(#tab)"/><path d="M1.5,0V33M74.5,0V33M115.5,0V33" stroke="#8a8a8a" stroke-width="1.2"/><circle cx="92.8" cy="17.2" r="12" fill="url(#pcl)"/><text x="92.9" y="22.9" font-size="13.5" fill="#a4a4a4" text-anchor="middle">+</text><text x="9" y="21.2" font-size="13.83" fill="#eee" textLength="58" lengthAdjust="spacingAndGlyphs">History 1</text><rect x="1055.9" y="0" width="133.3" height="32.8" fill="url(#dev)"/><rect x="1055.9" y="0" width="7.6" height="32.8" fill="#14d214"/><rect x="1190.2" y="0" width="44" height="32.8" fill="url(#dev)"/><rect x="1189.2" y="0" width="1" height="32.8" fill="#3a3a3a"/><rect x="1241.3" y="0" width="162.7" height="32.8" fill="url(#dev)"/><rect x="1241.3" y="0" width="7.6" height="32.8" fill="#14d214"/><rect x="1412.4" y="0" width="178.3" height="32.8" fill="url(#dev)"/><rect x="1412.4" y="0" width="7.6" height="32.8" fill="#e6e600"/><circle cx="1165.3" cy="14.6" r="11.5" fill="url(#ddc)"/><path d="M1159.7,12.6H1170.8999999999999L1165.3,19.2Z" fill="#fff"/><circle cx="1384.2" cy="14.6" r="11.5" fill="url(#ddc)"/><path d="M1378.6000000000001,12.6H1389.8L1384.2,19.2Z" fill="#fff"/><circle cx="1570.8" cy="14.6" r="11.5" fill="url(#ddc)"/><path d="M1565.2,12.6H1576.3999999999999L1570.8,19.2Z" fill="#fff"/><circle cx="1215.2" cy="14.4" r="16.3" fill="#0000f0" stroke="#e8e8ff" stroke-width="1.3"/><text x="1215.2" y="18.8" font-size="11.6" fill="#fff" text-anchor="middle" textLength="21.5" lengthAdjust="spacingAndGlyphs">635</text><text x="1067.2" y="9.8" font-size="12.01" fill="#ededed" textLength="81" lengthAdjust="spacingAndGlyphs">X-Rite i1Pro 3</text><text x="1067.2" y="28.6" font-size="12.01" fill="#ededed" textLength="69" lengthAdjust="spacingAndGlyphs">Direct View</text><text x="1253.5" y="9.6" font-size="12.01" fill="#ededed" textLength="79" lengthAdjust="spacingAndGlyphs">Mobile Forge</text><text x="1423.3" y="9.8" font-size="12.01" fill="#ededed" textLength="130.5" lengthAdjust="spacingAndGlyphs">Direct Display Control</text><path d="M1595.5,-2V25a5,5 0 0 0 5,5h31a5,5 0 0 0 5,-5V-2Z" fill="url(#gb2)" stroke="#c4c4c4" stroke-width="1.2"/><path d="M1638.5,-2V25a5,5 0 0 0 5,5h20V-2Z" fill="url(#gb2)" stroke="#c4c4c4" stroke-width="1.2"/><circle cx="1616" cy="13.5" r="12.3" fill="url(#ddc)"/><circle cx="1661" cy="13.5" r="12.3" fill="url(#ddc)"/><path d="M1621.00,13.30L1623.90,13.30M1619.54,16.84L1621.59,18.89M1616.00,18.30L1616.00,21.20M1612.46,16.84L1610.41,18.89M1611.00,13.30L1608.10,13.30M1612.46,9.76L1610.41,7.71M1616.00,8.30L1616.00,5.40M1619.54,9.76L1621.59,7.71" stroke="#d6d6d6" stroke-width="2.6" fill="none"/><circle cx="1616" cy="13.3" r="4.7" fill="none" stroke="#d6d6d6" stroke-width="2.2"/><path d="M1655,9.5L1651.5,13.5L1655,17.5Z" fill="#fff"/><rect x="0" y="823.5" width="1655" height="76" fill="url(#bbg)"/><path d="M2.7,900V828.5a4,4 0 0 1 4,-4H54.2a4,4 0 0 1 4,4V900Z" fill="url(#bx)"/><circle cx="30.5" cy="836" r="9.5" fill="url(#ac)"/><path d="M25.2,838H35.8L30.5,832.2Z" fill="#2c2c2c"/><rect x="8.2" y="857.4" width="44.6" height="37.2" rx="3.5" fill="#ffff00" stroke="#b8b800" stroke-width="1"/><path d="M66,900V828.5a4,4 0 0 1 4,-4H249.1a4,4 0 0 1 4,4V900Z" fill="url(#bx)"/><path d="M66.5,900V828.5a4,4 0 0 1 4,-4H248.6a4,4 0 0 1 4,4V900" fill="none" stroke="#a8a8a8" stroke-opacity=".55" stroke-width="1"/><rect x="72.8" y="831.3" width="174.3" height="44.6" rx="3.5" fill="#c2c2a5" stroke="#000" stroke-opacity=".25" stroke-width="1"/><text x="159.55" y="894.6" font-size="12.9" fill="#333" text-anchor="middle" textLength="25.4" lengthAdjust="spacingAndGlyphs" font-weight="bold">20%</text><path d="M256.2,900V828.5a4,4 0 0 1 4,-4H439.3a4,4 0 0 1 4,4V900Z" fill="url(#bx)"/><path d="M256.7,900V828.5a4,4 0 0 1 4,-4H438.8a4,4 0 0 1 4,4V900" fill="none" stroke="#a8a8a8" stroke-opacity=".55" stroke-width="1"/><rect x="263.0" y="831.3" width="174.3" height="44.6" rx="3.5" fill="#c2c089" stroke="#000" stroke-opacity=".25" stroke-width="1"/><text x="349.75" y="894.6" font-size="12.9" fill="#333" text-anchor="middle" textLength="25.4" lengthAdjust="spacingAndGlyphs" font-weight="bold">40%</text><path d="M446,900V828.5a4,4 0 0 1 4,-4H629a4,4 0 0 1 4,4V900Z" fill="url(#bx)"/><path d="M446.5,900V828.5a4,4 0 0 1 4,-4H628.5a4,4 0 0 1 4,4V900" fill="none" stroke="#a8a8a8" stroke-opacity=".55" stroke-width="1"/><rect x="452.8" y="831.3" width="174.2" height="44.6" rx="3.5" fill="#c1c06c" stroke="#000" stroke-opacity=".25" stroke-width="1"/><text x="539.5" y="894.6" font-size="12.9" fill="#333" text-anchor="middle" textLength="25.4" lengthAdjust="spacingAndGlyphs" font-weight="bold">60%</text><path d="M636.1,900V828.5a4,4 0 0 1 4,-4H819.6a4,4 0 0 1 4,4V900Z" fill="url(#bx)"/><path d="M636.6,900V828.5a4,4 0 0 1 4,-4H819.1a4,4 0 0 1 4,4V900" fill="none" stroke="#a8a8a8" stroke-opacity=".55" stroke-width="1"/><rect x="642.9" y="831.3" width="174.7" height="44.6" rx="3.5" fill="#bfbf4e" stroke="#000" stroke-opacity=".25" stroke-width="1"/><text x="729.85" y="894.6" font-size="12.9" fill="#333" text-anchor="middle" textLength="25.4" lengthAdjust="spacingAndGlyphs" font-weight="bold">80%</text><path d="M826.3,900V828.5a4,4 0 0 1 4,-4H1009.1a4,4 0 0 1 4,4V900Z" fill="url(#bxs)"/><rect x="833.1" y="831.3" width="174.0" height="44.6" rx="3.5" fill="#c4c000" stroke="#000" stroke-opacity=".25" stroke-width="1"/><text x="919.7" y="894.6" font-size="12.9" fill="#fff" text-anchor="middle" textLength="32.8" lengthAdjust="spacingAndGlyphs" font-weight="bold">100%</text><path d="M1267.3,847V828.7a4,4 0 0 1 4,-4H1323.3a4,4 0 0 1 4,4V847Z" fill="url(#rb)"/><rect x="1267.3" y="847.6" width="60" height="52" fill="url(#rb2)"/><rect x="1267.3" y="846.7" width="60" height="1.2" fill="#3a3a3a"/><circle cx="1297.5" cy="836.3" r="9.5" fill="url(#ic)"/><path d="M1292.3,838H1302.7L1297.5,832.4Z" fill="#333"/><rect x="1279" y="856.8" width="36.6" height="35.5" rx="5" fill="url(#sb)" stroke="#1c1c1c" stroke-width="2.6"/><rect x="1289.1" y="866.1" width="16.7" height="8.4" fill="#1e1e1e"/><rect x="1289.1" y="874.5" width="16.7" height="8.4" fill="#000"/><rect x="1328.9" y="823.8" width="57.1" height="38.2" fill="url(#sm)"/><circle cx="1357.5" cy="843.5" r="12.3" fill="url(#ic)"/><rect x="1387" y="823.8" width="54.8" height="38.2" fill="url(#sm)"/><circle cx="1414.9" cy="843.5" r="12.3" fill="url(#ic)"/><rect x="1442.8" y="823.8" width="56" height="38.2" fill="url(#sm)"/><circle cx="1471.3" cy="843.5" r="12.3" fill="url(#ic)"/><rect x="1499.8" y="823.8" width="55.1" height="38.2" fill="url(#sm)"/><circle cx="1527.8" cy="843.5" r="12.3" fill="url(#ic)"/><rect x="1555.9" y="823.8" width="54.8" height="38.2" fill="url(#sm)"/><circle cx="1583.8" cy="843.5" r="12.3" fill="url(#ic)"/><rect x="1352.7" y="838.7" width="9.6" height="9.4" fill="#383838"/><path d="M1410.8,838.4V850L1420.8,844.2Z" fill="#383838"/><path d="M1467.2,838.5H1464.8V849.5H1467.2M1475.4,838.5H1477.8V849.5H1475.4" fill="none" stroke="#383838" stroke-width="2"/><path d="M1467.8,844H1474.8" stroke="#383838" stroke-width="1.4" stroke-dasharray="1.6,1.2"/><text x="1527.85" y="849.3" font-size="20" fill="#383838" text-anchor="middle" font-weight="bold">∞</text><path d="M1577.1,842.5a6.4,6.4 0 0 1 11.2,-2.6M1589.9,845.3a6.4,6.4 0 0 1 -11.2,2.6" fill="none" stroke="#383838" stroke-width="2.6"/><path d="M1591.1,836.2V842.3H1585.1ZM1575.9,851.6V845.5H1581.9Z" fill="#383838"/><circle cx="1641" cy="844" r="13" fill="#2a2a2a"/><path d="M1328.5,900V867a4,4 0 0 1 4,-4H1498.6V900Z" fill="url(#bk)"/><path d="M1500.2,863H1656V900H1500.2Z" fill="url(#bk)"/><rect x="1498.6" y="863" width="1.6" height="37" fill="#4a4a4a"/><circle cx="1366.8" cy="881.6" r="12" fill="url(#ic)"/><circle cx="1634" cy="881.6" r="12" fill="url(#ic)"/><path d="M1365.6,875.5L1361.4,881.6L1365.6,887.7M1371.6,875.5L1367.4,881.6L1371.6,887.7" fill="none" stroke="#444" stroke-width="1.7"/><path d="M1629.4,875.5L1633.6,881.6L1629.4,887.7M1635.4,875.5L1639.6,881.6L1635.4,887.7" fill="none" stroke="#444" stroke-width="1.7"/><text x="1400.6" y="891.4" font-size="26.6" fill="#3c3c3c" textLength="63.4" lengthAdjust="spacingAndGlyphs" stroke="#3c3c3c" stroke-width=".8" style="text-shadow:0 1px 1px #b8b8b8">Back</text><text x="1534.5" y="891.4" font-size="26.6" fill="#3c3c3c" textLength="63.5" lengthAdjust="spacingAndGlyphs" stroke="#3c3c3c" stroke-width=".8" style="text-shadow:0 1px 1px #b8b8b8">Next</text></svg></body></html>
